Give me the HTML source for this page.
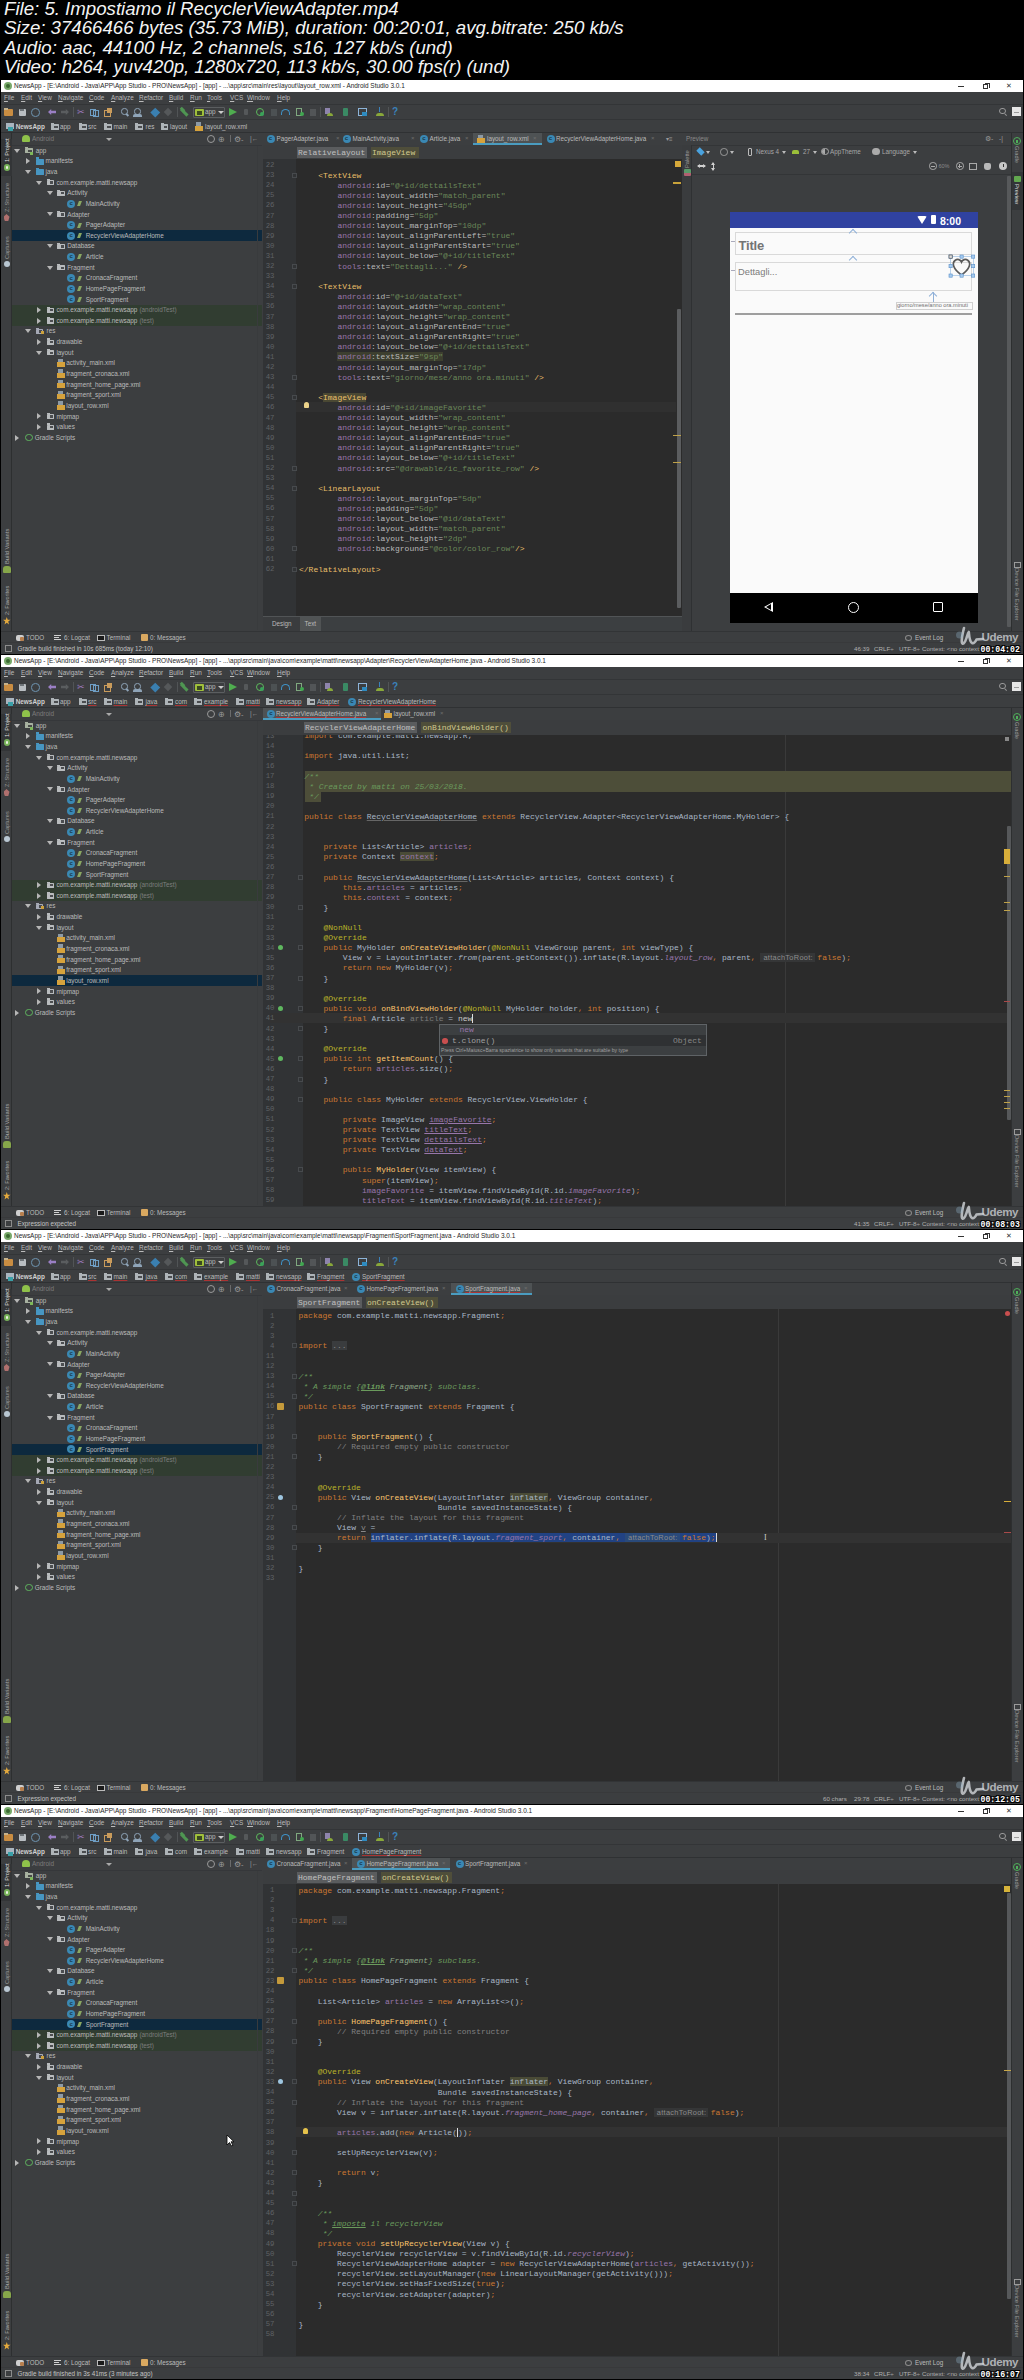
<!DOCTYPE html><html><head><meta charset="utf-8"><style>
*{margin:0;padding:0;box-sizing:border-box}
html,body{width:1024px;height:2380px;background:#000;overflow:hidden}
body{position:relative;font-family:"Liberation Sans",sans-serif}
div{position:absolute}
.u{white-space:pre;font-family:"Liberation Sans",sans-serif}
.m{white-space:pre;font-family:"Liberation Mono",monospace}
.hd{white-space:pre;font-family:"Liberation Sans",sans-serif;font-style:italic;color:#f4f4f4;font-size:18.65px;line-height:20px;left:4px}
.ss{left:0;width:1024px;height:575px;overflow:hidden;background:#000}
k{color:#cc7832}
an{color:#bbb529}
f{color:#9876aa}
g{color:#6a8759}
y{color:#ffc66d}
c{color:#808080}
d{color:#6a9a5c;font-style:italic}
t{color:#e8bf6a}
n{color:#9876aa}
w{color:#bababa}
v{color:#6a8759}
it{font-style:italic;color:#9876aa}
hint{color:#8c8c8c;background:#353637;font-family:"Liberation Sans",sans-serif;font-size:7.4px;letter-spacing:0.3px;padding:0 2px 0 3px;margin-right:2.4px}
</style></head><body>
<div class="hd" style="top:-0.90px">File: 5. Impostiamo il RecyclerViewAdapter.mp4</div>
<div class="hd" style="top:18.45px">Size: 37466466 bytes (35.73 MiB), duration: 00:20:01, avg.bitrate: 250 kb/s</div>
<div class="hd" style="top:37.80px">Audio: aac, 44100 Hz, 2 channels, s16, 127 kb/s (und)</div>
<div class="hd" style="top:57.15px">Video: h264, yuv420p, 1280x720, 113 kb/s, 30.00 fps(r) (und)</div>
<div class="ss" style="top:80px">
<div style="left:1px;top:0px;width:1022px;height:574px;background:#3c3e40;"></div>
<div style="left:1px;top:0px;width:1022px;height:12px;background:#ffffff;"></div>
<div style="left:3.5px;top:1.8px;width:8px;height:8px;background:#79a96b;border-radius:50%"></div>
<div style="left:5.5px;top:3.8px;width:4px;height:4px;background:#3d6b32;border-radius:50%"></div>
<div class="u" style="left:14px;top:2.33px;font-size:6.45px;line-height:7.74px;color:#1e1e1e;">NewsApp - [E:\Android - Java\APP\App Studio - PRO\NewsApp] - [app] - ...\app\src\main\res\layout\layout_row.xml - Android Studio 3.0.1</div>
<div style="left:958px;top:6px;width:6px;height:1px;background:#333;"></div>
<div style="left:983px;top:4px;width:5px;height:5px;background:transparent;border:1px solid #333"></div>
<div style="left:984.5px;top:2.5px;width:5px;height:5px;background:transparent;border-top:1px solid #333;border-right:1px solid #333"></div>
<div class="u" style="left:1006px;top:1.80px;font-size:7px;line-height:8.40px;color:#333;">✕</div>
<div class="u" style="left:4px;top:14.36px;font-size:6.4px;line-height:7.68px;color:#bbbbbb;"><u style="text-decoration-thickness:0.6px;text-underline-offset:1px">F</u>ile</div>
<div class="u" style="left:21px;top:14.36px;font-size:6.4px;line-height:7.68px;color:#bbbbbb;"><u style="text-decoration-thickness:0.6px;text-underline-offset:1px">E</u>dit</div>
<div class="u" style="left:38px;top:14.36px;font-size:6.4px;line-height:7.68px;color:#bbbbbb;"><u style="text-decoration-thickness:0.6px;text-underline-offset:1px">V</u>iew</div>
<div class="u" style="left:58px;top:14.36px;font-size:6.4px;line-height:7.68px;color:#bbbbbb;"><u style="text-decoration-thickness:0.6px;text-underline-offset:1px">N</u>avigate</div>
<div class="u" style="left:89px;top:14.36px;font-size:6.4px;line-height:7.68px;color:#bbbbbb;"><u style="text-decoration-thickness:0.6px;text-underline-offset:1px">C</u>ode</div>
<div class="u" style="left:111px;top:14.36px;font-size:6.4px;line-height:7.68px;color:#bbbbbb;"><u style="text-decoration-thickness:0.6px;text-underline-offset:1px">A</u>nalyze</div>
<div class="u" style="left:139px;top:14.36px;font-size:6.4px;line-height:7.68px;color:#bbbbbb;"><u style="text-decoration-thickness:0.6px;text-underline-offset:1px">R</u>efactor</div>
<div class="u" style="left:169px;top:14.36px;font-size:6.4px;line-height:7.68px;color:#bbbbbb;"><u style="text-decoration-thickness:0.6px;text-underline-offset:1px">B</u>uild</div>
<div class="u" style="left:190px;top:14.36px;font-size:6.4px;line-height:7.68px;color:#bbbbbb;"><u style="text-decoration-thickness:0.6px;text-underline-offset:1px">R</u>un</div>
<div class="u" style="left:207px;top:14.36px;font-size:6.4px;line-height:7.68px;color:#bbbbbb;"><u style="text-decoration-thickness:0.6px;text-underline-offset:1px">T</u>ools</div>
<div class="u" style="left:230px;top:14.36px;font-size:6.4px;line-height:7.68px;color:#bbbbbb;"><u style="text-decoration-thickness:0.6px;text-underline-offset:1px">V</u>CS</div>
<div class="u" style="left:247px;top:14.36px;font-size:6.4px;line-height:7.68px;color:#bbbbbb;"><u style="text-decoration-thickness:0.6px;text-underline-offset:1px">W</u>indow</div>
<div class="u" style="left:277px;top:14.36px;font-size:6.4px;line-height:7.68px;color:#bbbbbb;"><u style="text-decoration-thickness:0.6px;text-underline-offset:1px">H</u>elp</div>
<div style="left:1px;top:24px;width:1022px;height:1px;background:#333537;"></div>
<div style="left:4px;top:29px;width:9px;height:7px;background:#c98d42;border-radius:1px"></div>
<div style="left:4px;top:28px;width:4px;height:2px;background:#c7b38b;"></div>
<div style="left:18.5px;top:28.5px;width:7px;height:7.5px;background:#b9bec2;border-radius:1px"></div>
<div style="left:20px;top:28.5px;width:4px;height:2.5px;background:#6f7579;"></div>
<div style="left:31px;top:28px;width:8.5px;height:8.5px;background:transparent;border:1.6px solid #6e94b0;border-radius:50%"></div>
<div style="left:48px;top:29px;width:8px;height:6px;background:#9a7fc4;clip-path:polygon(0 50%,40% 0,40% 30%,100% 30%,100% 70%,40% 70%,40% 100%)"></div>
<div style="left:61px;top:29px;width:8px;height:6px;background:#5a5d5f;clip-path:polygon(100% 50%,60% 0,60% 30%,0 30%,0 70%,60% 70%,60% 100%)"></div>
<div style="left:73px;top:27px;width:1px;height:10px;background:#515456;"></div>
<div class="u" style="left:77px;top:26.60px;font-size:9px;line-height:10.80px;color:#a07cc0;">✂</div>
<div style="left:90px;top:28.5px;width:6px;height:7.5px;background:transparent;border:1.3px solid #6e9ec5"></div>
<div style="left:92.5px;top:30px;width:6px;height:7px;background:transparent;border:1.3px solid #6e9ec5"></div>
<div style="left:104px;top:29.5px;width:7px;height:7px;background:transparent;border:1.3px solid #c99b5b"></div>
<div style="left:107px;top:28px;width:5px;height:5px;background:#c99b5b;"></div>
<div style="left:121px;top:28px;width:6.5px;height:6.5px;background:transparent;border:1.5px solid #8fa4b8;border-radius:50%"></div>
<div style="left:126px;top:33.5px;width:3px;height:1.5px;background:#8fa4b8;transform:rotate(45deg)"></div>
<div style="left:134px;top:28px;width:6.5px;height:6.5px;background:transparent;border:1.5px solid #8fa4b8;border-radius:50%"></div>
<div style="left:133px;top:34px;width:9px;height:2.5px;background:#8fa4b8;border-radius:2px 2px 0 0"></div>
<div style="left:151.5px;top:28.5px;width:6.5px;height:6.5px;background:#3a7fb0;transform:rotate(45deg)"></div>
<div style="left:165px;top:29px;width:6px;height:6px;background:#55585a;transform:rotate(45deg)"></div>
<div style="left:177px;top:27px;width:1px;height:10px;background:#515456;"></div>
<div style="left:180px;top:31px;width:9px;height:2.5px;background:#4f9552;transform:rotate(45deg)"></div>
<div style="left:180px;top:28px;width:5px;height:3px;background:#4f9552;transform:rotate(45deg)"></div>
<div style="left:192.5px;top:27px;width:32px;height:10.5px;background:transparent;border:1px solid #5b5e60;border-radius:1px"></div>
<div style="left:195px;top:28.5px;width:8.5px;height:7px;background:#9fbf3b;border-radius:1px"></div>
<div style="left:196.5px;top:30.5px;width:5.5px;height:4px;background:#3a4a20;"></div>
<div class="u" style="left:205px;top:28.46px;font-size:6.4px;line-height:7.68px;color:#bbbbbb;">app</div>
<div style="left:218px;top:30.5px;width:0;height:0;border-left:3px solid transparent;border-right:3px solid transparent;border-top:3.5px solid #ccc"></div>
<div style="left:228.5px;top:27.5px;width:0;height:0;border-top:4.5px solid transparent;border-bottom:4.5px solid transparent;border-left:8px solid #4fad4f"></div>
<div style="left:244px;top:29px;width:3.5px;height:6px;background:#55585a;border-radius:1px"></div>
<div style="left:255.5px;top:28px;width:8px;height:8px;background:transparent;border:1.8px solid #5cb85c;border-radius:50%"></div>
<div style="left:259.5px;top:32px;width:4px;height:4px;background:#3aa35a;border-radius:50%"></div>
<div style="left:271px;top:29px;width:6px;height:6.5px;background:#4c5153;"></div>
<div style="left:281px;top:28.5px;width:8.5px;height:6px;background:transparent;border:1.8px solid #3f92c6;border-bottom:none;border-radius:5px 5px 0 0"></div>
<div style="left:296px;top:28px;width:5.5px;height:8px;background:transparent;border:1.2px solid #7fa87f"></div>
<div style="left:299.5px;top:32px;width:4px;height:4px;background:#40a850;border-radius:50%"></div>
<div style="left:309.5px;top:28.5px;width:6.5px;height:7px;background:#525557;"></div>
<div style="left:320px;top:27px;width:1px;height:10px;background:#515456;"></div>
<div style="left:325px;top:27.5px;width:5px;height:6.5px;background:#8e84ad;"></div>
<div style="left:327px;top:32.5px;width:6px;height:3.5px;background:#89a83a;border-radius:3px 3px 0 0"></div>
<div style="left:342.5px;top:27.5px;width:5.5px;height:8px;background:#3a8a64;border-radius:1px"></div>
<div style="left:357.5px;top:28px;width:9px;height:7.5px;background:transparent;border:1.3px solid #8db4d9"></div>
<div style="left:362px;top:32px;width:4.5px;height:4px;background:#2e8bc0;"></div>
<div style="left:378.5px;top:27px;width:1.5px;height:5px;background:#3a82bb;"></div>
<div style="left:375.5px;top:32.5px;width:8px;height:3.5px;background:#89a83a;border-radius:3px 3px 0 0"></div>
<div style="left:388px;top:27px;width:1px;height:10px;background:#515456;"></div>
<div class="u" style="left:392px;top:26.30px;font-size:10px;line-height:12.00px;color:#3a82bb;font-weight:bold">?</div>
<div style="left:999px;top:27.5px;width:6.5px;height:6.5px;background:transparent;border:1.3px solid #9a9a9a;border-radius:50%"></div>
<div style="left:1004px;top:33.5px;width:3px;height:1.3px;background:#9a9a9a;transform:rotate(45deg)"></div>
<div style="left:1012px;top:27px;width:8.5px;height:8.5px;background:#e6e6e6;"></div>
<div style="left:1013.5px;top:31.5px;width:5.5px;height:1px;background:#9a9a9a;"></div>
<div style="left:1px;top:39px;width:1022px;height:1px;background:#333537;"></div>
<div style="left:6px;top:43.2px;width:7.5px;height:6px;background:#a9b5bf;"></div>
<div style="left:7.5px;top:47.2px;width:5px;height:3.5px;background:#3aa0a8;"></div>
<div class="u" style="left:15.7px;top:42.86px;font-size:6.4px;line-height:7.68px;color:#d0d0d0;font-weight:bold">NewsApp</div>
<div style="left:51px;top:44.4px;width:7.5px;height:5.2px;background:#aeb4b8;border-radius:0.5px"></div>
<div style="left:51px;top:43.2px;width:3.0px;height:1.4px;background:#aeb4b8;"></div>
<div style="left:54.15px;top:45.7px;width:3.375px;height:2.3400000000000003px;background:rgba(40,42,44,0.75);"></div>
<div class="u" style="left:60px;top:42.86px;font-size:6.4px;line-height:7.68px;color:#bbbbbb;">app</div>
<div style="left:79px;top:44.4px;width:7.5px;height:5.2px;background:#aeb4b8;border-radius:0.5px"></div>
<div style="left:79px;top:43.2px;width:3.0px;height:1.4px;background:#aeb4b8;"></div>
<div style="left:82.15px;top:45.7px;width:3.375px;height:2.3400000000000003px;background:rgba(40,42,44,0.75);"></div>
<div class="u" style="left:88px;top:42.86px;font-size:6.4px;line-height:7.68px;color:#bbbbbb;">src</div>
<div style="left:104px;top:44.4px;width:7.5px;height:5.2px;background:#aeb4b8;border-radius:0.5px"></div>
<div style="left:104px;top:43.2px;width:3.0px;height:1.4px;background:#aeb4b8;"></div>
<div style="left:107.15px;top:45.7px;width:3.375px;height:2.3400000000000003px;background:rgba(40,42,44,0.75);"></div>
<div class="u" style="left:113.5px;top:42.86px;font-size:6.4px;line-height:7.68px;color:#bbbbbb;">main</div>
<div style="left:135px;top:44.4px;width:7.5px;height:5.2px;background:#aeb4b8;border-radius:0.5px"></div>
<div style="left:135px;top:43.2px;width:3.0px;height:1.4px;background:#aeb4b8;"></div>
<div style="left:138.15px;top:45.7px;width:3.375px;height:2.3400000000000003px;background:rgba(40,42,44,0.75);"></div>
<div class="u" style="left:145.5px;top:42.86px;font-size:6.4px;line-height:7.68px;color:#bbbbbb;">res</div>
<div style="left:160.5px;top:44.4px;width:7.5px;height:5.2px;background:#aeb4b8;border-radius:0.5px"></div>
<div style="left:160.5px;top:43.2px;width:3.0px;height:1.4px;background:#aeb4b8;"></div>
<div style="left:163.65px;top:45.7px;width:3.375px;height:2.3400000000000003px;background:rgba(40,42,44,0.75);"></div>
<div class="u" style="left:170px;top:42.86px;font-size:6.4px;line-height:7.68px;color:#bbbbbb;">layout</div>
<div style="left:196px;top:42.2px;width:5px;height:4px;background:#8d9aa5;"></div>
<div style="left:195px;top:45.7px;width:8px;height:5px;background:#d6a23c;"></div>
<div class="u" style="left:205px;top:42.86px;font-size:6.4px;line-height:7.68px;color:#bbbbbb;">layout_row.xml</div>
<div style="left:1px;top:52px;width:1022px;height:1px;background:#2f3133;"></div>
<div style="left:1px;top:53px;width:11px;height:497.5px;background:#3c3e40;border-right:1px solid #2d2f30"></div>
<div style="left:1px;top:58.7px;width:10.5px;height:37.5px;background:#333537;"></div>
<div class="u" style="left:2px;top:82px;font-size:5.6px;line-height:10px;color:#e0e0e0;transform-origin:0 0;transform:rotate(-90deg)">1: Project</div>
<div style="left:3.5px;top:83.5px;width:6.5px;height:7px;background:#78b35a;border-radius:50%"></div>
<div style="left:5.5px;top:86px;width:2.5px;height:2.5px;background:#e8f0e0;border-radius:50%"></div>
<div class="u" style="left:2px;top:132px;font-size:5.6px;line-height:10px;color:#9a9a9a;transform-origin:0 0;transform:rotate(-90deg)">Z: Structure</div>
<div style="left:3.5px;top:134px;width:6px;height:7px;background:#b0706e;border-radius:1px;clip-path:polygon(50% 0,100% 40%,80% 100%,20% 100%,0 40%)"></div>
<div class="u" style="left:2px;top:179px;font-size:5.6px;line-height:10px;color:#9a9a9a;transform-origin:0 0;transform:rotate(-90deg)">Captures</div>
<div style="left:3.5px;top:180.5px;width:6.5px;height:6.5px;background:#b9c7d2;border-radius:50%"></div>
<div class="u" style="left:2px;top:484px;font-size:5.8px;line-height:10px;color:#a8a8a8;transform-origin:0 0;transform:rotate(-90deg)">Build Variants</div>
<div style="left:3px;top:485.5px;width:7.5px;height:7px;background:#86a64a;border-radius:3px 3px 1px 1px"></div>
<div class="u" style="left:2px;top:535px;font-size:5.6px;line-height:10px;color:#a8a8a8;transform-origin:0 0;transform:rotate(-90deg)">2: Favorites</div>
<div style="left:3px;top:537px;width:7.5px;height:7.5px;background:#e3a93d;clip-path:polygon(50% 0,63% 35%,100% 38%,70% 60%,80% 100%,50% 78%,20% 100%,30% 60%,0 38%,37% 35%)"></div>
<div style="left:12px;top:53px;width:250px;height:12px;background:#3c3e40;"></div>
<div style="left:22px;top:54.5px;width:8px;height:7.5px;background:#8fc24a;border-radius:4px 4px 1px 1px"></div>
<div class="u" style="left:32px;top:55.16px;font-size:6.4px;line-height:7.68px;color:#7c7c7c;">Android</div>
<div style="left:106px;top:57.8px;width:0;height:0;border-left:3px solid transparent;border-right:3px solid transparent;border-top:3.5px solid #aaa"></div>
<div style="left:207px;top:54.5px;width:8px;height:8px;background:transparent;border:1.5px solid #9a9a9a;border-radius:50%"></div>
<div class="u" style="left:218px;top:54.50px;font-size:7.5px;line-height:9.00px;color:#9a9a9a;">⊕</div>
<div style="left:230px;top:55px;width:1px;height:7px;background:#6b6b6b;"></div>
<div class="u" style="left:234px;top:54.50px;font-size:7.5px;line-height:9.00px;color:#9a9a9a;">⚙-</div>
<div class="u" style="left:250px;top:55.10px;font-size:6.5px;line-height:7.80px;color:#9a9a9a;">|←</div>
<div style="left:12px;top:65px;width:250px;height:485.5px;background:#3c3e40;"></div>
<div style="left:12px;top:64.5px;width:250px;height:0.8px;background:#35373a;"></div>
<div style="left:14.4px;top:68.6px;width:0;height:0;border-left:3px solid transparent;border-right:3px solid transparent;border-top:4px solid #b6b6b6"></div>
<div style="left:25.0px;top:68.3px;width:7.5px;height:5.2px;background:#a7b1a0;border-radius:0.5px"></div>
<div style="left:25.0px;top:67.1px;width:3.0px;height:1.4px;background:#a7b1a0;"></div>
<div style="left:28.15px;top:69.6px;width:3.375px;height:2.3400000000000003px;background:rgba(40,42,44,0.75);"></div>
<div style="left:30.0px;top:71.6px;width:3px;height:3px;background:#7fb85a;"></div>
<div class="u" style="left:35.7px;top:66.76px;font-size:6.4px;line-height:7.68px;color:#bbbbbb;">app</div>
<div style="left:25.7px;top:78.2px;width:0;height:0;border-top:3px solid transparent;border-bottom:3px solid transparent;border-left:4px solid #b6b6b6"></div>
<div style="left:35.8px;top:78.52999999999999px;width:8px;height:6px;background:#4796c2;border-radius:0.5px"></div>
<div style="left:35.8px;top:77.32999999999998px;width:3.2px;height:1.4px;background:#4796c2;"></div>
<div class="u" style="left:45.599999999999994px;top:77.39px;font-size:6.4px;line-height:7.68px;color:#bbbbbb;">manifests</div>
<div style="left:25.2px;top:89.9px;width:0;height:0;border-left:3px solid transparent;border-right:3px solid transparent;border-top:4px solid #b6b6b6"></div>
<div style="left:35.8px;top:89.16px;width:8px;height:6px;background:#4796c2;border-radius:0.5px"></div>
<div style="left:35.8px;top:87.96px;width:3.2px;height:1.4px;background:#4796c2;"></div>
<div class="u" style="left:45.599999999999994px;top:88.02px;font-size:6.4px;line-height:7.68px;color:#bbbbbb;">java</div>
<div style="left:36.0px;top:100.5px;width:0;height:0;border-left:3px solid transparent;border-right:3px solid transparent;border-top:4px solid #b6b6b6"></div>
<div style="left:46.6px;top:100.19px;width:7.5px;height:5.2px;background:#b9bcbe;border-radius:0.5px"></div>
<div style="left:46.6px;top:98.99px;width:3.0px;height:1.4px;background:#b9bcbe;"></div>
<div style="left:49.75px;top:101.49px;width:3.375px;height:2.3400000000000003px;background:rgba(40,42,44,0.75);"></div>
<div class="u" style="left:56.400000000000006px;top:98.65px;font-size:6.4px;line-height:7.68px;color:#bbbbbb;">com.example.matti.newsapp</div>
<div style="left:46.8px;top:111.1px;width:0;height:0;border-left:3px solid transparent;border-right:3px solid transparent;border-top:4px solid #b6b6b6"></div>
<div style="left:57.400000000000006px;top:110.82000000000001px;width:7.5px;height:5.2px;background:#b9bcbe;border-radius:0.5px"></div>
<div style="left:57.400000000000006px;top:109.62px;width:3.0px;height:1.4px;background:#b9bcbe;"></div>
<div style="left:60.550000000000004px;top:112.12px;width:3.375px;height:2.3400000000000003px;background:rgba(40,42,44,0.75);"></div>
<div class="u" style="left:67.2px;top:109.28px;font-size:6.4px;line-height:7.68px;color:#bbbbbb;">Activity</div>
<div style="left:67.2px;top:119.75px;width:8px;height:8px;background:#3a88b4;border-radius:50%"></div>
<div class="u" style="left:69.4px;top:120.15px;font-size:6px;line-height:7.20px;color:#1b3a4a;font-weight:bold">c</div>
<div style="left:78.2px;top:121.25px;width:3px;height:5px;background:#8aa862;transform:skewX(-20deg)"></div>
<div class="u" style="left:85.7px;top:119.91px;font-size:6.4px;line-height:7.68px;color:#bbbbbb;">MainActivity</div>
<div style="left:46.8px;top:132.4px;width:0;height:0;border-left:3px solid transparent;border-right:3px solid transparent;border-top:4px solid #b6b6b6"></div>
<div style="left:57.400000000000006px;top:132.08px;width:7.5px;height:5.2px;background:#b9bcbe;border-radius:0.5px"></div>
<div style="left:57.400000000000006px;top:130.88px;width:3.0px;height:1.4px;background:#b9bcbe;"></div>
<div style="left:60.550000000000004px;top:133.38px;width:3.375px;height:2.3400000000000003px;background:rgba(40,42,44,0.75);"></div>
<div class="u" style="left:67.2px;top:130.54px;font-size:6.4px;line-height:7.68px;color:#bbbbbb;">Adapter</div>
<div style="left:67.2px;top:141.01px;width:8px;height:8px;background:#3a88b4;border-radius:50%"></div>
<div class="u" style="left:69.4px;top:141.41px;font-size:6px;line-height:7.20px;color:#1b3a4a;font-weight:bold">c</div>
<div style="left:78.2px;top:142.51px;width:3px;height:5px;background:#8aa862;transform:skewX(-20deg)"></div>
<div class="u" style="left:85.7px;top:141.17px;font-size:6.4px;line-height:7.68px;color:#bbbbbb;">PagerAdapter</div>
<div style="left:12px;top:150.33999999999997px;width:250px;height:10.63px;background:#0d293e;"></div>
<div style="left:67.2px;top:151.64px;width:8px;height:8px;background:#3a88b4;border-radius:50%"></div>
<div class="u" style="left:69.4px;top:152.04px;font-size:6px;line-height:7.20px;color:#1b3a4a;font-weight:bold">c</div>
<div style="left:78.2px;top:153.14px;width:3px;height:5px;background:#8aa862;transform:skewX(-20deg)"></div>
<div class="u" style="left:85.7px;top:151.80px;font-size:6.4px;line-height:7.68px;color:#bbbbbb;">RecyclerViewAdapterHome</div>
<div style="left:46.8px;top:164.3px;width:0;height:0;border-left:3px solid transparent;border-right:3px solid transparent;border-top:4px solid #b6b6b6"></div>
<div style="left:57.400000000000006px;top:163.97px;width:7.5px;height:5.2px;background:#b9bcbe;border-radius:0.5px"></div>
<div style="left:57.400000000000006px;top:162.76999999999998px;width:3.0px;height:1.4px;background:#b9bcbe;"></div>
<div style="left:60.550000000000004px;top:165.26999999999998px;width:3.375px;height:2.3400000000000003px;background:rgba(40,42,44,0.75);"></div>
<div class="u" style="left:67.2px;top:162.43px;font-size:6.4px;line-height:7.68px;color:#bbbbbb;">Database</div>
<div style="left:67.2px;top:172.9px;width:8px;height:8px;background:#3a88b4;border-radius:50%"></div>
<div class="u" style="left:69.4px;top:173.30px;font-size:6px;line-height:7.20px;color:#1b3a4a;font-weight:bold">c</div>
<div style="left:78.2px;top:174.4px;width:3px;height:5px;background:#8aa862;transform:skewX(-20deg)"></div>
<div class="u" style="left:85.7px;top:173.06px;font-size:6.4px;line-height:7.68px;color:#bbbbbb;">Article</div>
<div style="left:46.8px;top:185.5px;width:0;height:0;border-left:3px solid transparent;border-right:3px solid transparent;border-top:4px solid #b6b6b6"></div>
<div style="left:57.400000000000006px;top:185.23000000000002px;width:7.5px;height:5.2px;background:#b9bcbe;border-radius:0.5px"></div>
<div style="left:57.400000000000006px;top:184.03px;width:3.0px;height:1.4px;background:#b9bcbe;"></div>
<div style="left:60.550000000000004px;top:186.53px;width:3.375px;height:2.3400000000000003px;background:rgba(40,42,44,0.75);"></div>
<div class="u" style="left:67.2px;top:183.69px;font-size:6.4px;line-height:7.68px;color:#bbbbbb;">Fragment</div>
<div style="left:67.2px;top:194.16px;width:8px;height:8px;background:#3a88b4;border-radius:50%"></div>
<div class="u" style="left:69.4px;top:194.56px;font-size:6px;line-height:7.20px;color:#1b3a4a;font-weight:bold">c</div>
<div style="left:78.2px;top:195.66px;width:3px;height:5px;background:#8aa862;transform:skewX(-20deg)"></div>
<div class="u" style="left:85.7px;top:194.32px;font-size:6.4px;line-height:7.68px;color:#bbbbbb;">CronacaFragment</div>
<div style="left:67.2px;top:204.79px;width:8px;height:8px;background:#3a88b4;border-radius:50%"></div>
<div class="u" style="left:69.4px;top:205.19px;font-size:6px;line-height:7.20px;color:#1b3a4a;font-weight:bold">c</div>
<div style="left:78.2px;top:206.29px;width:3px;height:5px;background:#8aa862;transform:skewX(-20deg)"></div>
<div class="u" style="left:85.7px;top:204.95px;font-size:6.4px;line-height:7.68px;color:#bbbbbb;">HomePageFragment</div>
<div style="left:67.2px;top:215.42000000000002px;width:8px;height:8px;background:#3a88b4;border-radius:50%"></div>
<div class="u" style="left:69.4px;top:215.82px;font-size:6px;line-height:7.20px;color:#1b3a4a;font-weight:bold">c</div>
<div style="left:78.2px;top:216.92000000000002px;width:3px;height:5px;background:#8aa862;transform:skewX(-20deg)"></div>
<div class="u" style="left:85.7px;top:215.58px;font-size:6.4px;line-height:7.68px;color:#bbbbbb;">SportFragment</div>
<div style="left:12px;top:224.75px;width:250px;height:10.63px;background:#313d31;"></div>
<div style="left:36.5px;top:227.1px;width:0;height:0;border-top:3px solid transparent;border-bottom:3px solid transparent;border-left:4px solid #b6b6b6"></div>
<div style="left:46.6px;top:227.75000000000003px;width:7.5px;height:5.2px;background:#b9bcbe;border-radius:0.5px"></div>
<div style="left:46.6px;top:226.55px;width:3.0px;height:1.4px;background:#b9bcbe;"></div>
<div style="left:49.75px;top:229.05px;width:3.375px;height:2.3400000000000003px;background:rgba(40,42,44,0.75);"></div>
<div class="u" style="left:56.400000000000006px;top:226.21px;font-size:6.4px;line-height:7.68px;color:#bbbbbb;">com.example.matti.newsapp</div>
<div class="u" style="left:139.4px;top:226.21px;font-size:6.4px;line-height:7.68px;color:#7d7d7d;">(androidTest)</div>
<div style="left:12px;top:235.38px;width:250px;height:10.63px;background:#313d31;"></div>
<div style="left:36.5px;top:237.7px;width:0;height:0;border-top:3px solid transparent;border-bottom:3px solid transparent;border-left:4px solid #b6b6b6"></div>
<div style="left:46.6px;top:238.38000000000002px;width:7.5px;height:5.2px;background:#b9bcbe;border-radius:0.5px"></div>
<div style="left:46.6px;top:237.18px;width:3.0px;height:1.4px;background:#b9bcbe;"></div>
<div style="left:49.75px;top:239.68px;width:3.375px;height:2.3400000000000003px;background:rgba(40,42,44,0.75);"></div>
<div class="u" style="left:56.400000000000006px;top:236.84px;font-size:6.4px;line-height:7.68px;color:#bbbbbb;">com.example.matti.newsapp</div>
<div class="u" style="left:139.4px;top:236.84px;font-size:6.4px;line-height:7.68px;color:#7d7d7d;">(test)</div>
<div style="left:25.2px;top:249.3px;width:0;height:0;border-left:3px solid transparent;border-right:3px solid transparent;border-top:4px solid #b6b6b6"></div>
<div style="left:35.8px;top:249.01000000000002px;width:7.5px;height:5.2px;background:#a5a9b5;border-radius:0.5px"></div>
<div style="left:35.8px;top:247.81px;width:3.0px;height:1.4px;background:#a5a9b5;"></div>
<div style="left:38.949999999999996px;top:250.31px;width:3.375px;height:2.3400000000000003px;background:rgba(40,42,44,0.75);"></div>
<div style="left:40.8px;top:251.31px;width:3px;height:3px;background:#cca13c;"></div>
<div class="u" style="left:46.5px;top:247.47px;font-size:6.4px;line-height:7.68px;color:#bbbbbb;">res</div>
<div style="left:36.5px;top:258.9px;width:0;height:0;border-top:3px solid transparent;border-bottom:3px solid transparent;border-left:4px solid #b6b6b6"></div>
<div style="left:46.6px;top:259.64px;width:7.5px;height:5.2px;background:#b9bcbe;border-radius:0.5px"></div>
<div style="left:46.6px;top:258.44px;width:3.0px;height:1.4px;background:#b9bcbe;"></div>
<div style="left:49.75px;top:260.94px;width:3.375px;height:2.3400000000000003px;background:rgba(40,42,44,0.75);"></div>
<div class="u" style="left:56.400000000000006px;top:258.10px;font-size:6.4px;line-height:7.68px;color:#bbbbbb;">drawable</div>
<div style="left:36.0px;top:270.6px;width:0;height:0;border-left:3px solid transparent;border-right:3px solid transparent;border-top:4px solid #b6b6b6"></div>
<div style="left:46.6px;top:270.27000000000004px;width:7.5px;height:5.2px;background:#b9bcbe;border-radius:0.5px"></div>
<div style="left:46.6px;top:269.07000000000005px;width:3.0px;height:1.4px;background:#b9bcbe;"></div>
<div style="left:49.75px;top:271.57000000000005px;width:3.375px;height:2.3400000000000003px;background:rgba(40,42,44,0.75);"></div>
<div class="u" style="left:56.400000000000006px;top:268.73px;font-size:6.4px;line-height:7.68px;color:#bbbbbb;">layout</div>
<div style="left:57.50000000000001px;top:278.70000000000005px;width:5px;height:4px;background:#8d9aa5;"></div>
<div style="left:56.50000000000001px;top:282.20000000000005px;width:8px;height:5px;background:#d6a23c;"></div>
<div class="u" style="left:66.30000000000001px;top:279.36px;font-size:6.4px;line-height:7.68px;color:#bbbbbb;">activity_main.xml</div>
<div style="left:57.50000000000001px;top:289.33000000000004px;width:5px;height:4px;background:#8d9aa5;"></div>
<div style="left:56.50000000000001px;top:292.83000000000004px;width:8px;height:5px;background:#d6a23c;"></div>
<div class="u" style="left:66.30000000000001px;top:289.99px;font-size:6.4px;line-height:7.68px;color:#bbbbbb;">fragment_cronaca.xml</div>
<div style="left:57.50000000000001px;top:299.96000000000004px;width:5px;height:4px;background:#8d9aa5;"></div>
<div style="left:56.50000000000001px;top:303.46000000000004px;width:8px;height:5px;background:#d6a23c;"></div>
<div class="u" style="left:66.30000000000001px;top:300.62px;font-size:6.4px;line-height:7.68px;color:#bbbbbb;">fragment_home_page.xml</div>
<div style="left:57.50000000000001px;top:310.59000000000003px;width:5px;height:4px;background:#8d9aa5;"></div>
<div style="left:56.50000000000001px;top:314.09000000000003px;width:8px;height:5px;background:#d6a23c;"></div>
<div class="u" style="left:66.30000000000001px;top:311.25px;font-size:6.4px;line-height:7.68px;color:#bbbbbb;">fragment_sport.xml</div>
<div style="left:57.50000000000001px;top:321.22px;width:5px;height:4px;background:#8d9aa5;"></div>
<div style="left:56.50000000000001px;top:324.72px;width:8px;height:5px;background:#d6a23c;"></div>
<div class="u" style="left:66.30000000000001px;top:321.88px;font-size:6.4px;line-height:7.68px;color:#bbbbbb;">layout_row.xml</div>
<div style="left:36.5px;top:333.4px;width:0;height:0;border-top:3px solid transparent;border-bottom:3px solid transparent;border-left:4px solid #b6b6b6"></div>
<div style="left:46.6px;top:334.05px;width:7.5px;height:5.2px;background:#b9bcbe;border-radius:0.5px"></div>
<div style="left:46.6px;top:332.85px;width:3.0px;height:1.4px;background:#b9bcbe;"></div>
<div style="left:49.75px;top:335.35px;width:3.375px;height:2.3400000000000003px;background:rgba(40,42,44,0.75);"></div>
<div class="u" style="left:56.400000000000006px;top:332.51px;font-size:6.4px;line-height:7.68px;color:#bbbbbb;">mipmap</div>
<div style="left:36.5px;top:344.0px;width:0;height:0;border-top:3px solid transparent;border-bottom:3px solid transparent;border-left:4px solid #b6b6b6"></div>
<div style="left:46.6px;top:344.68px;width:7.5px;height:5.2px;background:#b9bcbe;border-radius:0.5px"></div>
<div style="left:46.6px;top:343.48px;width:3.0px;height:1.4px;background:#b9bcbe;"></div>
<div style="left:49.75px;top:345.98px;width:3.375px;height:2.3400000000000003px;background:rgba(40,42,44,0.75);"></div>
<div class="u" style="left:56.400000000000006px;top:343.14px;font-size:6.4px;line-height:7.68px;color:#bbbbbb;">values</div>
<div style="left:14.9px;top:354.6px;width:0;height:0;border-top:3px solid transparent;border-bottom:3px solid transparent;border-left:4px solid #b6b6b6"></div>
<div style="left:25.0px;top:353.81px;width:7.6px;height:7.6px;background:transparent;border:1.5px solid #5fb55f;border-radius:50%"></div>
<div class="u" style="left:34.7px;top:353.77px;font-size:6.4px;line-height:7.68px;color:#bbbbbb;">Gradle Scripts</div>
<div style="left:257px;top:66px;width:1px;height:484px;background:#393b3d;"></div>
<div style="left:1px;top:550.5px;width:1022px;height:11.5px;background:#3c3e40;border-top:1px solid #323436"></div>
<div style="left:16px;top:554.5px;width:8px;height:6px;background:#cfcfcf;border-radius:2px"></div>
<div style="left:20px;top:556.5px;width:4px;height:4px;background:#b87f4e;border-radius:1px"></div>
<div class="u" style="left:26px;top:553.72px;font-size:6.3px;line-height:7.56px;color:#bbbbbb;">TODO</div>
<div style="left:54px;top:555.0px;width:7px;height:1.3px;background:#d0d0d0;"></div>
<div style="left:54px;top:557.0px;width:5px;height:1.3px;background:#d0d0d0;"></div>
<div style="left:54px;top:559.0px;width:7px;height:1.3px;background:#d0d0d0;"></div>
<div class="u" style="left:64px;top:553.72px;font-size:6.3px;line-height:7.56px;color:#bbbbbb;">6: Logcat</div>
<div style="left:97px;top:554.5px;width:8px;height:6.5px;background:#1a1a1a;border:1px solid #bbb"></div>
<div class="u" style="left:106.5px;top:553.72px;font-size:6.3px;line-height:7.56px;color:#bbbbbb;">Terminal</div>
<div style="left:140.5px;top:554.0px;width:7px;height:7px;background:#d9a860;border-radius:1px"></div>
<div class="u" style="left:150px;top:553.72px;font-size:6.3px;line-height:7.56px;color:#bbbbbb;">0: Messages</div>
<div style="left:905px;top:554.5px;width:7px;height:6px;background:transparent;border:1px solid #8a8a8a;border-radius:50%"></div>
<div class="u" style="left:915px;top:553.72px;font-size:6.3px;line-height:7.56px;color:#bbbbbb;">Event Log</div>
<div style="left:1px;top:562px;width:1022px;height:12px;background:#3c3e40;border-top:1px solid #38393b"></div>
<div style="left:5px;top:564.9px;width:7px;height:7px;background:transparent;border:1px solid #8b8b8b"></div>
<div class="u" style="left:17.5px;top:564.62px;font-size:6.3px;line-height:7.56px;color:#c4c4c4;">Gradle build finished in 10s 685ms (today 12:10)</div>
<div class="u" style="left:854px;top:564.68px;font-size:6.2px;line-height:7.44px;color:#b0b0b0;">46:39</div>
<div class="u" style="left:874px;top:564.68px;font-size:6.2px;line-height:7.44px;color:#b0b0b0;">CRLF÷</div>
<div class="u" style="left:899px;top:564.68px;font-size:6.2px;line-height:7.44px;color:#b0b0b0;">UTF-8÷</div>
<div class="u" style="left:922px;top:564.68px;font-size:6.2px;line-height:7.44px;color:#b0b0b0;">Context: &lt;no context&gt;</div>
<div style="left:262.5px;top:53px;width:419.5px;height:12px;background:#3c3e40;"></div>
<div style="left:266.5px;top:55px;width:8px;height:8px;background:#3a88b4;border-radius:50%"></div>
<div class="u" style="left:268.7px;top:55.40px;font-size:6px;line-height:7.20px;color:#1b3a4a;font-weight:bold">c</div>
<div class="u" style="left:276.5px;top:55.22px;font-size:6.3px;line-height:7.56px;color:#bbbbbb;">PagerAdapter.java</div>
<div class="u" style="left:336px;top:55.40px;font-size:6px;line-height:7.20px;color:#6f6f6f;">×</div>
<div style="left:342.5px;top:55px;width:8px;height:8px;background:#3a88b4;border-radius:50%"></div>
<div class="u" style="left:344.7px;top:55.40px;font-size:6px;line-height:7.20px;color:#1b3a4a;font-weight:bold">c</div>
<div class="u" style="left:352.5px;top:55.22px;font-size:6.3px;line-height:7.56px;color:#bbbbbb;">MainActivity.java</div>
<div class="u" style="left:411px;top:55.40px;font-size:6px;line-height:7.20px;color:#6f6f6f;">×</div>
<div style="left:420px;top:55px;width:8px;height:8px;background:#3a88b4;border-radius:50%"></div>
<div class="u" style="left:422.2px;top:55.40px;font-size:6px;line-height:7.20px;color:#1b3a4a;font-weight:bold">c</div>
<div class="u" style="left:429.5px;top:55.22px;font-size:6.3px;line-height:7.56px;color:#bbbbbb;">Article.java</div>
<div class="u" style="left:465px;top:55.40px;font-size:6px;line-height:7.20px;color:#6f6f6f;">×</div>
<div style="left:472.5px;top:53px;width:69.5px;height:12px;background:#4e5254;"></div>
<div style="left:472.5px;top:63.4px;width:69.5px;height:1.6px;background:#4a9cc0;"></div>
<div style="left:478px;top:54.5px;width:5px;height:4px;background:#8d9aa5;"></div>
<div style="left:477px;top:58px;width:8px;height:5px;background:#d6a23c;"></div>
<div class="u" style="left:487px;top:55.22px;font-size:6.3px;line-height:7.56px;color:#bbbbbb;">layout_row.xml</div>
<div class="u" style="left:533px;top:55.40px;font-size:6px;line-height:7.20px;color:#6f6f6f;">×</div>
<div style="left:546.5px;top:55px;width:8px;height:8px;background:#3a88b4;border-radius:50%"></div>
<div class="u" style="left:548.7px;top:55.40px;font-size:6px;line-height:7.20px;color:#1b3a4a;font-weight:bold">c</div>
<div class="u" style="left:556px;top:55.22px;font-size:6.3px;line-height:7.56px;color:#bbbbbb;">RecyclerViewAdapterHome.java</div>
<div class="u" style="left:651px;top:55.40px;font-size:6px;line-height:7.20px;color:#6f6f6f;">×</div>
<div class="u" style="left:666px;top:55.22px;font-size:6.3px;line-height:7.56px;color:#9a9a9a;">▾≡</div>
<div style="left:262.5px;top:65px;width:419.5px;height:14px;background:#3b3d3f;"></div>
<div style="left:296.5px;top:67px;width:70.5px;height:11px;background:#5a5c5e;"></div>
<div class="m" style="left:298.0px;top:67.80px;font-size:8px;line-height:9.60px;color:#c0c0c0;">RelativeLayout</div>
<div style="left:370.5px;top:67px;width:48.0px;height:11px;background:#4f4e3a;"></div>
<div class="m" style="left:372.0px;top:67.80px;font-size:8px;line-height:9.60px;color:#d1c98f;">ImageView</div>
<div style="left:262.5px;top:79px;width:33.5px;height:457px;background:#313335;"></div>
<div style="left:296px;top:79px;width:386px;height:457px;background:#2b2b2b;"></div>
<div style="left:296px;top:322.35px;width:380px;height:10.1px;background:#303030;"></div>
<div style="left:0;top:79px;width:682px;height:457px;overflow:hidden">
<div class="m" style="left:252px;width:22.5px;text-align:right;top:1.00px;font-size:7.3px;line-height:10px;color:#5f6265">22</div>
<div class="m" style="left:299px;top:0.50px;font-size:8px;line-height:11px;color:#a9b7c6"></div>
<div class="m" style="left:252px;width:22.5px;text-align:right;top:11.10px;font-size:7.3px;line-height:10px;color:#5f6265">23</div>
<div class="m" style="left:299px;top:10.60px;font-size:8px;line-height:11px;color:#a9b7c6">    <t>&lt;TextView</t></div>
<div class="m" style="left:252px;width:22.5px;text-align:right;top:21.20px;font-size:7.3px;line-height:10px;color:#5f6265">24</div>
<div class="m" style="left:299px;top:20.70px;font-size:8px;line-height:11px;color:#a9b7c6">        <n>android</n><w>:id=</w><v>"@+id/dettailsText"</v></div>
<div class="m" style="left:252px;width:22.5px;text-align:right;top:31.30px;font-size:7.3px;line-height:10px;color:#5f6265">25</div>
<div class="m" style="left:299px;top:30.80px;font-size:8px;line-height:11px;color:#a9b7c6">        <n>android</n><w>:layout_width=</w><v>"match_parent"</v></div>
<div class="m" style="left:252px;width:22.5px;text-align:right;top:41.40px;font-size:7.3px;line-height:10px;color:#5f6265">26</div>
<div class="m" style="left:299px;top:40.90px;font-size:8px;line-height:11px;color:#a9b7c6">        <n>android</n><w>:layout_height=</w><v>"45dp"</v></div>
<div class="m" style="left:252px;width:22.5px;text-align:right;top:51.50px;font-size:7.3px;line-height:10px;color:#5f6265">27</div>
<div class="m" style="left:299px;top:51.00px;font-size:8px;line-height:11px;color:#a9b7c6">        <n>android</n><w>:padding=</w><v>"5dp"</v></div>
<div class="m" style="left:252px;width:22.5px;text-align:right;top:61.60px;font-size:7.3px;line-height:10px;color:#5f6265">28</div>
<div class="m" style="left:299px;top:61.10px;font-size:8px;line-height:11px;color:#a9b7c6">        <n>android</n><w>:layout_marginTop=</w><v>"10dp"</v></div>
<div class="m" style="left:252px;width:22.5px;text-align:right;top:71.70px;font-size:7.3px;line-height:10px;color:#5f6265">29</div>
<div class="m" style="left:299px;top:71.20px;font-size:8px;line-height:11px;color:#a9b7c6">        <n>android</n><w>:layout_alignParentLeft=</w><v>"true"</v></div>
<div class="m" style="left:252px;width:22.5px;text-align:right;top:81.80px;font-size:7.3px;line-height:10px;color:#5f6265">30</div>
<div class="m" style="left:299px;top:81.30px;font-size:8px;line-height:11px;color:#a9b7c6">        <n>android</n><w>:layout_alignParentStart=</w><v>"true"</v></div>
<div class="m" style="left:252px;width:22.5px;text-align:right;top:91.90px;font-size:7.3px;line-height:10px;color:#5f6265">31</div>
<div class="m" style="left:299px;top:91.40px;font-size:8px;line-height:11px;color:#a9b7c6">        <n>android</n><w>:layout_below=</w><v>"@+id/titleText"</v></div>
<div class="m" style="left:252px;width:22.5px;text-align:right;top:102.00px;font-size:7.3px;line-height:10px;color:#5f6265">32</div>
<div class="m" style="left:299px;top:101.50px;font-size:8px;line-height:11px;color:#a9b7c6">        <n>tools</n><w>:text=</w><v>"Dettagli..."</v> <t>/&gt;</t></div>
<div class="m" style="left:252px;width:22.5px;text-align:right;top:112.10px;font-size:7.3px;line-height:10px;color:#5f6265">33</div>
<div class="m" style="left:299px;top:111.60px;font-size:8px;line-height:11px;color:#a9b7c6"></div>
<div class="m" style="left:252px;width:22.5px;text-align:right;top:122.20px;font-size:7.3px;line-height:10px;color:#5f6265">34</div>
<div class="m" style="left:299px;top:121.70px;font-size:8px;line-height:11px;color:#a9b7c6">    <t>&lt;TextView</t></div>
<div class="m" style="left:252px;width:22.5px;text-align:right;top:132.30px;font-size:7.3px;line-height:10px;color:#5f6265">35</div>
<div class="m" style="left:299px;top:131.80px;font-size:8px;line-height:11px;color:#a9b7c6">        <n>android</n><w>:id=</w><v>"@+id/dataText"</v></div>
<div class="m" style="left:252px;width:22.5px;text-align:right;top:142.40px;font-size:7.3px;line-height:10px;color:#5f6265">36</div>
<div class="m" style="left:299px;top:141.90px;font-size:8px;line-height:11px;color:#a9b7c6">        <n>android</n><w>:layout_width=</w><v>"wrap_content"</v></div>
<div class="m" style="left:252px;width:22.5px;text-align:right;top:152.50px;font-size:7.3px;line-height:10px;color:#5f6265">37</div>
<div class="m" style="left:299px;top:152.00px;font-size:8px;line-height:11px;color:#a9b7c6">        <n>android</n><w>:layout_height=</w><v>"wrap_content"</v></div>
<div class="m" style="left:252px;width:22.5px;text-align:right;top:162.60px;font-size:7.3px;line-height:10px;color:#5f6265">38</div>
<div class="m" style="left:299px;top:162.10px;font-size:8px;line-height:11px;color:#a9b7c6">        <n>android</n><w>:layout_alignParentEnd=</w><v>"true"</v></div>
<div class="m" style="left:252px;width:22.5px;text-align:right;top:172.70px;font-size:7.3px;line-height:10px;color:#5f6265">39</div>
<div class="m" style="left:299px;top:172.20px;font-size:8px;line-height:11px;color:#a9b7c6">        <n>android</n><w>:layout_alignParentRight=</w><v>"true"</v></div>
<div class="m" style="left:252px;width:22.5px;text-align:right;top:182.80px;font-size:7.3px;line-height:10px;color:#5f6265">40</div>
<div class="m" style="left:299px;top:182.30px;font-size:8px;line-height:11px;color:#a9b7c6">        <n>android</n><w>:layout_below=</w><v>"@+id/dettailsText"</v></div>
<div class="m" style="left:252px;width:22.5px;text-align:right;top:192.90px;font-size:7.3px;line-height:10px;color:#5f6265">41</div>
<div class="m" style="left:299px;top:192.40px;font-size:8px;line-height:11px;color:#a9b7c6">        <span style="background:#3d3f2f"><n>android</n><w>:textSize=</w><v>"9sp"</v></span></div>
<div class="m" style="left:252px;width:22.5px;text-align:right;top:203.00px;font-size:7.3px;line-height:10px;color:#5f6265">42</div>
<div class="m" style="left:299px;top:202.50px;font-size:8px;line-height:11px;color:#a9b7c6">        <n>android</n><w>:layout_marginTop=</w><v>"17dp"</v></div>
<div class="m" style="left:252px;width:22.5px;text-align:right;top:213.10px;font-size:7.3px;line-height:10px;color:#5f6265">43</div>
<div class="m" style="left:299px;top:212.60px;font-size:8px;line-height:11px;color:#a9b7c6">        <n>tools</n><w>:text=</w><v>"giorno/mese/anno ora.minuti"</v> <t>/&gt;</t></div>
<div class="m" style="left:252px;width:22.5px;text-align:right;top:223.20px;font-size:7.3px;line-height:10px;color:#5f6265">44</div>
<div class="m" style="left:299px;top:222.70px;font-size:8px;line-height:11px;color:#a9b7c6"></div>
<div class="m" style="left:252px;width:22.5px;text-align:right;top:233.30px;font-size:7.3px;line-height:10px;color:#5f6265">45</div>
<div class="m" style="left:299px;top:232.80px;font-size:8px;line-height:11px;color:#a9b7c6">    <t>&lt;<span style="background:#4a4833">ImageView</span></t></div>
<div class="m" style="left:252px;width:22.5px;text-align:right;top:243.40px;font-size:7.3px;line-height:10px;color:#5f6265">46</div>
<div class="m" style="left:299px;top:242.90px;font-size:8px;line-height:11px;color:#a9b7c6">        <n>android</n><w>:id=</w><v>"@+id/imageFavorite"</v></div>
<div class="m" style="left:252px;width:22.5px;text-align:right;top:253.50px;font-size:7.3px;line-height:10px;color:#5f6265">47</div>
<div class="m" style="left:299px;top:253.00px;font-size:8px;line-height:11px;color:#a9b7c6">        <n>android</n><w>:layout_width=</w><v>"wrap_content"</v></div>
<div class="m" style="left:252px;width:22.5px;text-align:right;top:263.60px;font-size:7.3px;line-height:10px;color:#5f6265">48</div>
<div class="m" style="left:299px;top:263.10px;font-size:8px;line-height:11px;color:#a9b7c6">        <n>android</n><w>:layout_height=</w><v>"wrap_content"</v></div>
<div class="m" style="left:252px;width:22.5px;text-align:right;top:273.70px;font-size:7.3px;line-height:10px;color:#5f6265">49</div>
<div class="m" style="left:299px;top:273.20px;font-size:8px;line-height:11px;color:#a9b7c6">        <n>android</n><w>:layout_alignParentEnd=</w><v>"true"</v></div>
<div class="m" style="left:252px;width:22.5px;text-align:right;top:283.80px;font-size:7.3px;line-height:10px;color:#5f6265">50</div>
<div class="m" style="left:299px;top:283.30px;font-size:8px;line-height:11px;color:#a9b7c6">        <n>android</n><w>:layout_alignParentRight=</w><v>"true"</v></div>
<div class="m" style="left:252px;width:22.5px;text-align:right;top:293.90px;font-size:7.3px;line-height:10px;color:#5f6265">51</div>
<div class="m" style="left:299px;top:293.40px;font-size:8px;line-height:11px;color:#a9b7c6">        <n>android</n><w>:layout_below=</w><v>"@+id/titleText"</v></div>
<div class="m" style="left:252px;width:22.5px;text-align:right;top:304.00px;font-size:7.3px;line-height:10px;color:#5f6265">52</div>
<div class="m" style="left:299px;top:303.50px;font-size:8px;line-height:11px;color:#a9b7c6">        <n>android</n><w>:src=</w><v>"@drawable/ic_favorite_row"</v> <t>/&gt;</t></div>
<div class="m" style="left:252px;width:22.5px;text-align:right;top:314.10px;font-size:7.3px;line-height:10px;color:#5f6265">53</div>
<div class="m" style="left:299px;top:313.60px;font-size:8px;line-height:11px;color:#a9b7c6"></div>
<div class="m" style="left:252px;width:22.5px;text-align:right;top:324.20px;font-size:7.3px;line-height:10px;color:#5f6265">54</div>
<div class="m" style="left:299px;top:323.70px;font-size:8px;line-height:11px;color:#a9b7c6">    <t>&lt;LinearLayout</t></div>
<div class="m" style="left:252px;width:22.5px;text-align:right;top:334.30px;font-size:7.3px;line-height:10px;color:#5f6265">55</div>
<div class="m" style="left:299px;top:333.80px;font-size:8px;line-height:11px;color:#a9b7c6">        <n>android</n><w>:layout_marginTop=</w><v>"5dp"</v></div>
<div class="m" style="left:252px;width:22.5px;text-align:right;top:344.40px;font-size:7.3px;line-height:10px;color:#5f6265">56</div>
<div class="m" style="left:299px;top:343.90px;font-size:8px;line-height:11px;color:#a9b7c6">        <n>android</n><w>:padding=</w><v>"5dp"</v></div>
<div class="m" style="left:252px;width:22.5px;text-align:right;top:354.50px;font-size:7.3px;line-height:10px;color:#5f6265">57</div>
<div class="m" style="left:299px;top:354.00px;font-size:8px;line-height:11px;color:#a9b7c6">        <n>android</n><w>:layout_below=</w><v>"@id/dataText"</v></div>
<div class="m" style="left:252px;width:22.5px;text-align:right;top:364.60px;font-size:7.3px;line-height:10px;color:#5f6265">58</div>
<div class="m" style="left:299px;top:364.10px;font-size:8px;line-height:11px;color:#a9b7c6">        <n>android</n><w>:layout_width=</w><v>"match_parent"</v></div>
<div class="m" style="left:252px;width:22.5px;text-align:right;top:374.70px;font-size:7.3px;line-height:10px;color:#5f6265">59</div>
<div class="m" style="left:299px;top:374.20px;font-size:8px;line-height:11px;color:#a9b7c6">        <n>android</n><w>:layout_height=</w><v>"2dp"</v></div>
<div class="m" style="left:252px;width:22.5px;text-align:right;top:384.80px;font-size:7.3px;line-height:10px;color:#5f6265">60</div>
<div class="m" style="left:299px;top:384.30px;font-size:8px;line-height:11px;color:#a9b7c6">        <n>android</n><w>:background=</w><v>"@color/color_row"</v><t>/&gt;</t></div>
<div class="m" style="left:252px;width:22.5px;text-align:right;top:394.90px;font-size:7.3px;line-height:10px;color:#5f6265">61</div>
<div class="m" style="left:299px;top:394.40px;font-size:8px;line-height:11px;color:#a9b7c6"></div>
<div class="m" style="left:252px;width:22.5px;text-align:right;top:405.00px;font-size:7.3px;line-height:10px;color:#5f6265">62</div>
<div class="m" style="left:299px;top:404.50px;font-size:8px;line-height:11px;color:#a9b7c6"><t>&lt;/RelativeLayout&gt;</t></div>
</div>
<div style="left:292px;top:92.6px;width:5px;height:5px;background:transparent;border:1px solid #474a4d"></div>
<div style="left:292px;top:183.5px;width:5px;height:5px;background:transparent;border:1px solid #474a4d"></div>
<div style="left:292px;top:203.7px;width:5px;height:5px;background:transparent;border:1px solid #474a4d"></div>
<div style="left:292px;top:294.6px;width:5px;height:5px;background:transparent;border:1px solid #474a4d"></div>
<div style="left:292px;top:314.79999999999995px;width:5px;height:5px;background:transparent;border:1px solid #474a4d"></div>
<div style="left:292px;top:385.5px;width:5px;height:5px;background:transparent;border:1px solid #474a4d"></div>
<div style="left:292px;top:405.7px;width:5px;height:5px;background:transparent;border:1px solid #474a4d"></div>
<div style="left:292px;top:466.3px;width:5px;height:5px;background:transparent;border:1px solid #474a4d"></div>
<div style="left:292px;top:486.5px;width:5px;height:5px;background:transparent;border:1px solid #474a4d"></div>
<div style="left:303.8px;top:321.5px;width:5.5px;height:6px;background:#ecd38a;border-radius:2.8px 2.8px 1px 1px"></div>
<div style="left:674.5px;top:81px;width:6px;height:6px;background:#d6a93a;"></div>
<div style="left:673px;top:102px;width:8px;height:1.5px;background:#c8a23a;"></div>
<div style="left:676.8px;top:229px;width:4.2px;height:298.5px;background:#5b5d5f;border-radius:1px"></div>
<div style="left:673px;top:355px;width:8px;height:1.2px;background:#bfa24a;"></div>
<div style="left:673px;top:381.5px;width:8px;height:1.2px;background:#bfa24a;"></div>
<div style="left:682px;top:53px;width:329.5px;height:497.5px;background:#3c3e40;"></div>
<div class="u" style="left:686px;top:55.22px;font-size:6.3px;line-height:7.56px;color:#8a8a8a;">Preview</div>
<div class="u" style="left:985px;top:54.80px;font-size:7px;line-height:8.40px;color:#9a9a9a;">⚙-</div>
<div class="u" style="left:999px;top:55.10px;font-size:6.5px;line-height:7.80px;color:#9a9a9a;">-|</div>
<div style="left:682px;top:65px;width:10px;height:485.5px;background:#3a3c3e;border-right:1px solid #2f3133"></div>
<div class="u" style="left:682.5px;top:88px;font-size:5.7px;line-height:9px;color:#9a9a9a;transform-origin:0 0;transform:rotate(-90deg)">Palette</div>
<div style="left:683.5px;top:89px;width:7px;height:3.5px;background:#5a9a6a;border-radius:1px 1px 0 0"></div>
<div style="left:683.5px;top:92.5px;width:7px;height:3.5px;background:#b06070;border-radius:0 0 1px 1px"></div>
<div style="left:697px;top:68.2px;width:7px;height:7px;background:#4aa3df;transform:rotate(45deg) scaleY(0.7)"></div>
<div style="left:706px;top:70.7px;width:0;height:0;border-left:2.5px solid transparent;border-right:2.5px solid transparent;border-top:3.0px solid #bbb"></div>
<div style="left:720px;top:68.2px;width:7.5px;height:7.5px;background:transparent;border:1.3px solid #9a9a9a;border-radius:50%"></div>
<div style="left:730px;top:70.7px;width:0;height:0;border-left:2.5px solid transparent;border-right:2.5px solid transparent;border-top:3.0px solid #bbb"></div>
<div style="left:747.5px;top:67.7px;width:4.5px;height:8px;background:transparent;border:1.2px solid #bbb;border-radius:1px"></div>
<div class="u" style="left:756px;top:67.92px;font-size:6.3px;line-height:7.56px;color:#a8a8a8;">Nexus 4</div>
<div style="left:782px;top:70.7px;width:0;height:0;border-left:2.5px solid transparent;border-right:2.5px solid transparent;border-top:3.0px solid #bbb"></div>
<div style="left:792px;top:69.7px;width:7px;height:4px;background:#9bbf3a;border-radius:2px 2px 0 0"></div>
<div class="u" style="left:803px;top:67.92px;font-size:6.3px;line-height:7.56px;color:#a8a8a8;">27</div>
<div style="left:813px;top:70.7px;width:0;height:0;border-left:2.5px solid transparent;border-right:2.5px solid transparent;border-top:3.0px solid #bbb"></div>
<div style="left:821px;top:67.7px;width:7.5px;height:7.5px;background:transparent;border:1.3px solid #aaa;border-radius:50%"></div>
<div style="left:822px;top:68.7px;width:3px;height:5.5px;background:#aaa;border-radius:3px 0 0 3px"></div>
<div class="u" style="left:830px;top:67.92px;font-size:6.3px;line-height:7.56px;color:#a8a8a8;">AppTheme</div>
<div style="left:872px;top:67.7px;width:7.5px;height:7.5px;background:#aaa;border-radius:50%"></div>
<div class="u" style="left:882px;top:67.92px;font-size:6.3px;line-height:7.56px;color:#a8a8a8;">Language</div>
<div style="left:913px;top:70.7px;width:0;height:0;border-left:2.5px solid transparent;border-right:2.5px solid transparent;border-top:3.0px solid #bbb"></div>
<div style="left:698px;top:85.2px;width:6.5px;height:1.8px;background:#d0d0d0;"></div>
<div style="left:696.5px;top:83.5px;width:0;height:0;border-top:2.5px solid transparent;border-bottom:2.5px solid transparent;border-right:3px solid #d0d0d0"></div>
<div style="left:703px;top:83.5px;width:0;height:0;border-top:2.5px solid transparent;border-bottom:2.5px solid transparent;border-left:3px solid #d0d0d0"></div>
<div style="left:712.6px;top:83px;width:1.8px;height:6.5px;background:#d0d0d0;"></div>
<div style="left:711px;top:81.5px;width:0;height:0;border-left:2.5px solid transparent;border-right:2.5px solid transparent;border-bottom:3px solid #d0d0d0"></div>
<div style="left:711px;top:88px;width:0;height:0;border-left:2.5px solid transparent;border-right:2.5px solid transparent;border-top:3px solid #d0d0d0"></div>
<div style="left:929px;top:82px;width:7.5px;height:7.5px;background:transparent;border:1.2px solid #aaa;border-radius:50%"></div>
<div style="left:931px;top:85.5px;width:3.5px;height:1px;background:#aaa;"></div>
<div class="u" style="left:938.5px;top:82.70px;font-size:5.5px;line-height:6.60px;color:#8a8a8a;">60%</div>
<div style="left:956px;top:82px;width:7.5px;height:7.5px;background:transparent;border:1.2px solid #aaa;border-radius:50%"></div>
<div style="left:958px;top:85.5px;width:3.5px;height:1px;background:#aaa;"></div>
<div style="left:959.2px;top:84.3px;width:1px;height:3.5px;background:#aaa;"></div>
<div style="left:969px;top:82.5px;width:8px;height:7px;background:transparent;border:1.2px solid #aaa"></div>
<div style="left:984px;top:82.5px;width:6.5px;height:7.5px;background:#b9b9b9;border-radius:2px 2px 3px 3px"></div>
<div style="left:999px;top:82px;width:8px;height:8px;background:#c8c8c8;border-radius:50%"></div>
<div style="left:1002.5px;top:83.5px;width:1px;height:3.5px;background:#333;"></div>
<div style="left:692px;top:94px;width:319px;height:1px;background:#333537;"></div>
<div style="left:692px;top:65px;width:319px;height:1px;background:#333537;"></div>
<div style="left:692px;top:95px;width:319px;height:455.5px;background:#3c3e40;"></div>
<div style="left:1006.5px;top:95.5px;width:4px;height:451px;background:#57595b;border-radius:1px"></div>
<div style="left:730px;top:132px;width:247.5px;height:15.5px;background:#3042a0;"></div>
<div style="left:917px;top:136px;width:0;height:0;border-left:5.5px solid transparent;border-right:5.5px solid transparent;border-top:8px solid #fff;border-radius:2px"></div>
<div style="left:931px;top:134.5px;width:5px;height:9.5px;background:#fff;border-radius:1px"></div>
<div class="u" style="left:940px;top:134.70px;font-size:10.5px;line-height:12.60px;color:#ffffff;font-weight:bold">8:00</div>
<div style="left:730px;top:147.5px;width:247.5px;height:365px;background:#fafafa;"></div>
<div style="left:735px;top:152px;width:237px;height:23px;background:transparent;border:1px solid #d9d9d9"></div>
<div class="u" style="left:738.5px;top:158.20px;font-size:13px;line-height:15.60px;color:#747474;font-weight:bold;letter-spacing:-0.2px">Title</div>
<div style="left:735px;top:182px;width:237px;height:29px;background:transparent;border:1px solid #d9d9d9"></div>
<div class="u" style="left:738px;top:186.92px;font-size:9.3px;line-height:11.16px;color:#7c7c7c;">Dettagli...</div>
<svg style="position:absolute;left:948px;top:173.5px" width="28" height="25" viewBox="0 0 28 25"><rect x="2.5" y="2.5" width="23" height="19" fill="none" stroke="#8fb8e0" stroke-width="0.6"/><path d="M13.5 21 C4.5 14.5 4 9 7 6.5 C9.5 4.5 12.5 5.5 13.5 8 C14.5 5.5 17.5 4.5 20 6.5 C23 9 22.5 14.5 13.5 21 Z" fill="none" stroke="#5a5a5a" stroke-width="1.7"/><g fill="#a6cbef" stroke="#5a8fc8" stroke-width="0.6"><rect x="1" y="1" width="3.2" height="3.2"/><rect x="12" y="1" width="3.2" height="3.2"/><rect x="23.5" y="1" width="3.2" height="3.2"/><rect x="1" y="10.5" width="3.2" height="3.2"/><rect x="23.5" y="10.5" width="3.2" height="3.2"/><rect x="1" y="20" width="3.2" height="3.2"/><rect x="12" y="20" width="3.2" height="3.2"/><rect x="23.5" y="20" width="3.2" height="3.2"/></g><rect x="1" y="1" width="3.2" height="3.2" fill="#ddd" stroke="#444" stroke-width="0.6"/></svg>
<div style="left:896px;top:221.5px;width:76.5px;height:8.5px;background:transparent;border:1px solid #d0d0d0"></div>
<div class="u" style="left:897px;top:222.44px;font-size:5.6px;line-height:6.72px;color:#6f6f6f;">giorno/mese/anno ora.minuti</div>
<div style="left:735px;top:232.5px;width:237px;height:2px;background:#9e9e9e;"></div>
<div style="left:850px;top:150px;width:6px;height:6px;border-left:1px solid #8fb0d8;border-top:1px solid #8fb0d8;transform:rotate(45deg)"></div>
<div style="left:850px;top:177px;width:6px;height:6px;border-left:1px solid #8fb0d8;border-top:1px solid #8fb0d8;transform:rotate(45deg)"></div>
<div style="left:930px;top:213px;width:6px;height:6px;border-left:1px solid #8fb0d8;border-top:1px solid #8fb0d8;transform:rotate(45deg)"></div>
<div style="left:932.5px;top:212px;width:1px;height:10px;background:#8fb0d8;"></div>
<div style="left:731px;top:160.5px;width:4px;height:1px;background:#aab;"></div>
<div style="left:731px;top:189.5px;width:4px;height:1px;background:#aab;"></div>
<div style="left:730px;top:512.5px;width:247.5px;height:30px;background:#000;"></div>
<div style="left:764px;top:522px;width:0;height:0;border-top:5.5px solid transparent;border-bottom:5.5px solid transparent;border-right:9px solid #fff"></div>
<div style="left:765.7px;top:524.3px;width:0;height:0;border-top:3.2px solid transparent;border-bottom:3.2px solid transparent;border-right:5.2px solid #000"></div>
<div style="left:847.5px;top:521.5px;width:11px;height:11px;background:transparent;border:1.5px solid #fff;border-radius:50%"></div>
<div style="left:933px;top:522px;width:10px;height:10px;background:transparent;border:1.5px solid #fff;border-radius:1px"></div>
<div style="left:262.5px;top:535.5px;width:419.5px;height:15px;background:#3c3f41;border-top:1px solid #515456"></div>
<div style="left:263px;top:536.5px;width:37px;height:14px;background:#3a3c3e;"></div>
<div class="u" style="left:272px;top:539.72px;font-size:6.3px;line-height:7.56px;color:#bbbbbb;">Design</div>
<div style="left:300px;top:536.5px;width:21px;height:14px;background:#505354;"></div>
<div class="u" style="left:304.5px;top:539.72px;font-size:6.3px;line-height:7.56px;color:#bbbbbb;">Text</div>
<div style="left:1010.5px;top:53px;width:12.5px;height:497.5px;background:#3c3e40;border-left:1px solid #2d2f30"></div>
<div style="left:1013px;top:57px;width:8px;height:8px;background:transparent;border:1.4px solid #4fb05a;border-radius:50%"></div>
<div style="left:1016px;top:59.5px;width:2px;height:3px;background:#4fb05a;"></div>
<div class="u" style="left:1012px;top:66px;font-size:5.7px;line-height:10px;color:#9a9a9a;transform-origin:0 0;transform:translateX(10px) rotate(90deg)">Gradle</div>
<div style="left:1011.5px;top:92px;width:11px;height:38px;background:#333537;"></div>
<div style="left:1013.5px;top:96px;width:7px;height:6px;background:#62a84f;border-radius:1px"></div>
<div class="u" style="left:1012px;top:103.5px;font-size:5.7px;line-height:10px;color:#dddddd;transform-origin:0 0;transform:translateX(10px) rotate(90deg)">Preview</div>
<div style="left:1013.5px;top:482px;width:7px;height:6px;background:transparent;border:1px solid #9a9a9a"></div>
<div class="u" style="left:1012px;top:488px;font-size:5.9px;line-height:10px;color:#9a9a9a;transform-origin:0 0;transform:translateX(10px) rotate(90deg)">Device File Explorer</div>
<svg style="position:absolute;left:955px;top:546px" width="32" height="22" viewBox="0 0 32 22"><path d="M9 2 C8 6 6.5 11 6.8 16 C7.2 19.5 10 17 11.5 12 C12.5 9 13 7 13.8 6 C14.2 10 14.5 15.5 17 17 C19 18 20.5 15.5 21.5 13.5 C23 13 25 13 28 13" fill="none" stroke="#c9ccd0" stroke-width="2.6" stroke-linecap="round" stroke-linejoin="round" opacity="0.85"/><circle cx="4.5" cy="9" r="3.5" fill="#8fb3c9" opacity="0.35"/></svg>
<div class="u" style="left:981.5px;top:549.54px;font-size:11.6px;line-height:13.92px;color:rgba(205,208,212,0.8);font-weight:bold;letter-spacing:-0.4px">Udemy</div>
<div class="m" style="left:980.5px;top:563.5px;font-size:8.2px;line-height:11px;color:#fff;font-weight:bold;text-shadow:0 0 1px #000,1px 1px 0 #000,-1px -1px 0 #000,1px -1px 0 #000,-1px 1px 0 #000">00:04:02</div>
</div>
<div class="ss" style="top:655px">
<div style="left:1px;top:0px;width:1022px;height:574px;background:#3c3e40;"></div>
<div style="left:1px;top:0px;width:1022px;height:12px;background:#ffffff;"></div>
<div style="left:3.5px;top:1.8px;width:8px;height:8px;background:#79a96b;border-radius:50%"></div>
<div style="left:5.5px;top:3.8px;width:4px;height:4px;background:#3d6b32;border-radius:50%"></div>
<div class="u" style="left:14px;top:2.33px;font-size:6.45px;line-height:7.74px;color:#1e1e1e;">NewsApp - [E:\Android - Java\APP\App Studio - PRO\NewsApp] - [app] - ...\app\src\main\java\com\example\matti\newsapp\Adapter\RecyclerViewAdapterHome.java - Android Studio 3.0.1</div>
<div style="left:958px;top:6px;width:6px;height:1px;background:#333;"></div>
<div style="left:983px;top:4px;width:5px;height:5px;background:transparent;border:1px solid #333"></div>
<div style="left:984.5px;top:2.5px;width:5px;height:5px;background:transparent;border-top:1px solid #333;border-right:1px solid #333"></div>
<div class="u" style="left:1006px;top:1.80px;font-size:7px;line-height:8.40px;color:#333;">✕</div>
<div class="u" style="left:4px;top:14.36px;font-size:6.4px;line-height:7.68px;color:#bbbbbb;"><u style="text-decoration-thickness:0.6px;text-underline-offset:1px">F</u>ile</div>
<div class="u" style="left:21px;top:14.36px;font-size:6.4px;line-height:7.68px;color:#bbbbbb;"><u style="text-decoration-thickness:0.6px;text-underline-offset:1px">E</u>dit</div>
<div class="u" style="left:38px;top:14.36px;font-size:6.4px;line-height:7.68px;color:#bbbbbb;"><u style="text-decoration-thickness:0.6px;text-underline-offset:1px">V</u>iew</div>
<div class="u" style="left:58px;top:14.36px;font-size:6.4px;line-height:7.68px;color:#bbbbbb;"><u style="text-decoration-thickness:0.6px;text-underline-offset:1px">N</u>avigate</div>
<div class="u" style="left:89px;top:14.36px;font-size:6.4px;line-height:7.68px;color:#bbbbbb;"><u style="text-decoration-thickness:0.6px;text-underline-offset:1px">C</u>ode</div>
<div class="u" style="left:111px;top:14.36px;font-size:6.4px;line-height:7.68px;color:#bbbbbb;"><u style="text-decoration-thickness:0.6px;text-underline-offset:1px">A</u>nalyze</div>
<div class="u" style="left:139px;top:14.36px;font-size:6.4px;line-height:7.68px;color:#bbbbbb;"><u style="text-decoration-thickness:0.6px;text-underline-offset:1px">R</u>efactor</div>
<div class="u" style="left:169px;top:14.36px;font-size:6.4px;line-height:7.68px;color:#bbbbbb;"><u style="text-decoration-thickness:0.6px;text-underline-offset:1px">B</u>uild</div>
<div class="u" style="left:190px;top:14.36px;font-size:6.4px;line-height:7.68px;color:#bbbbbb;"><u style="text-decoration-thickness:0.6px;text-underline-offset:1px">R</u>un</div>
<div class="u" style="left:207px;top:14.36px;font-size:6.4px;line-height:7.68px;color:#bbbbbb;"><u style="text-decoration-thickness:0.6px;text-underline-offset:1px">T</u>ools</div>
<div class="u" style="left:230px;top:14.36px;font-size:6.4px;line-height:7.68px;color:#bbbbbb;"><u style="text-decoration-thickness:0.6px;text-underline-offset:1px">V</u>CS</div>
<div class="u" style="left:247px;top:14.36px;font-size:6.4px;line-height:7.68px;color:#bbbbbb;"><u style="text-decoration-thickness:0.6px;text-underline-offset:1px">W</u>indow</div>
<div class="u" style="left:277px;top:14.36px;font-size:6.4px;line-height:7.68px;color:#bbbbbb;"><u style="text-decoration-thickness:0.6px;text-underline-offset:1px">H</u>elp</div>
<div style="left:1px;top:24px;width:1022px;height:1px;background:#333537;"></div>
<div style="left:4px;top:29px;width:9px;height:7px;background:#c98d42;border-radius:1px"></div>
<div style="left:4px;top:28px;width:4px;height:2px;background:#c7b38b;"></div>
<div style="left:18.5px;top:28.5px;width:7px;height:7.5px;background:#b9bec2;border-radius:1px"></div>
<div style="left:20px;top:28.5px;width:4px;height:2.5px;background:#6f7579;"></div>
<div style="left:31px;top:28px;width:8.5px;height:8.5px;background:transparent;border:1.6px solid #6e94b0;border-radius:50%"></div>
<div style="left:48px;top:29px;width:8px;height:6px;background:#9a7fc4;clip-path:polygon(0 50%,40% 0,40% 30%,100% 30%,100% 70%,40% 70%,40% 100%)"></div>
<div style="left:61px;top:29px;width:8px;height:6px;background:#5a5d5f;clip-path:polygon(100% 50%,60% 0,60% 30%,0 30%,0 70%,60% 70%,60% 100%)"></div>
<div style="left:73px;top:27px;width:1px;height:10px;background:#515456;"></div>
<div class="u" style="left:77px;top:26.60px;font-size:9px;line-height:10.80px;color:#a07cc0;">✂</div>
<div style="left:90px;top:28.5px;width:6px;height:7.5px;background:transparent;border:1.3px solid #6e9ec5"></div>
<div style="left:92.5px;top:30px;width:6px;height:7px;background:transparent;border:1.3px solid #6e9ec5"></div>
<div style="left:104px;top:29.5px;width:7px;height:7px;background:transparent;border:1.3px solid #c99b5b"></div>
<div style="left:107px;top:28px;width:5px;height:5px;background:#c99b5b;"></div>
<div style="left:121px;top:28px;width:6.5px;height:6.5px;background:transparent;border:1.5px solid #8fa4b8;border-radius:50%"></div>
<div style="left:126px;top:33.5px;width:3px;height:1.5px;background:#8fa4b8;transform:rotate(45deg)"></div>
<div style="left:134px;top:28px;width:6.5px;height:6.5px;background:transparent;border:1.5px solid #8fa4b8;border-radius:50%"></div>
<div style="left:133px;top:34px;width:9px;height:2.5px;background:#8fa4b8;border-radius:2px 2px 0 0"></div>
<div style="left:151.5px;top:28.5px;width:6.5px;height:6.5px;background:#3a7fb0;transform:rotate(45deg)"></div>
<div style="left:165px;top:29px;width:6px;height:6px;background:#55585a;transform:rotate(45deg)"></div>
<div style="left:177px;top:27px;width:1px;height:10px;background:#515456;"></div>
<div style="left:180px;top:31px;width:9px;height:2.5px;background:#4f9552;transform:rotate(45deg)"></div>
<div style="left:180px;top:28px;width:5px;height:3px;background:#4f9552;transform:rotate(45deg)"></div>
<div style="left:192.5px;top:27px;width:32px;height:10.5px;background:transparent;border:1px solid #5b5e60;border-radius:1px"></div>
<div style="left:195px;top:28.5px;width:8.5px;height:7px;background:#9fbf3b;border-radius:1px"></div>
<div style="left:196.5px;top:30.5px;width:5.5px;height:4px;background:#3a4a20;"></div>
<div class="u" style="left:205px;top:28.46px;font-size:6.4px;line-height:7.68px;color:#bbbbbb;">app</div>
<div style="left:218px;top:30.5px;width:0;height:0;border-left:3px solid transparent;border-right:3px solid transparent;border-top:3.5px solid #ccc"></div>
<div style="left:228.5px;top:27.5px;width:0;height:0;border-top:4.5px solid transparent;border-bottom:4.5px solid transparent;border-left:8px solid #4fad4f"></div>
<div style="left:244px;top:29px;width:3.5px;height:6px;background:#55585a;border-radius:1px"></div>
<div style="left:255.5px;top:28px;width:8px;height:8px;background:transparent;border:1.8px solid #5cb85c;border-radius:50%"></div>
<div style="left:259.5px;top:32px;width:4px;height:4px;background:#3aa35a;border-radius:50%"></div>
<div style="left:271px;top:29px;width:6px;height:6.5px;background:#4c5153;"></div>
<div style="left:281px;top:28.5px;width:8.5px;height:6px;background:transparent;border:1.8px solid #3f92c6;border-bottom:none;border-radius:5px 5px 0 0"></div>
<div style="left:296px;top:28px;width:5.5px;height:8px;background:transparent;border:1.2px solid #7fa87f"></div>
<div style="left:299.5px;top:32px;width:4px;height:4px;background:#40a850;border-radius:50%"></div>
<div style="left:309.5px;top:28.5px;width:6.5px;height:7px;background:#525557;"></div>
<div style="left:320px;top:27px;width:1px;height:10px;background:#515456;"></div>
<div style="left:325px;top:27.5px;width:5px;height:6.5px;background:#8e84ad;"></div>
<div style="left:327px;top:32.5px;width:6px;height:3.5px;background:#89a83a;border-radius:3px 3px 0 0"></div>
<div style="left:342.5px;top:27.5px;width:5.5px;height:8px;background:#3a8a64;border-radius:1px"></div>
<div style="left:357.5px;top:28px;width:9px;height:7.5px;background:transparent;border:1.3px solid #8db4d9"></div>
<div style="left:362px;top:32px;width:4.5px;height:4px;background:#2e8bc0;"></div>
<div style="left:378.5px;top:27px;width:1.5px;height:5px;background:#3a82bb;"></div>
<div style="left:375.5px;top:32.5px;width:8px;height:3.5px;background:#89a83a;border-radius:3px 3px 0 0"></div>
<div style="left:388px;top:27px;width:1px;height:10px;background:#515456;"></div>
<div class="u" style="left:392px;top:26.30px;font-size:10px;line-height:12.00px;color:#3a82bb;font-weight:bold">?</div>
<div style="left:999px;top:27.5px;width:6.5px;height:6.5px;background:transparent;border:1.3px solid #9a9a9a;border-radius:50%"></div>
<div style="left:1004px;top:33.5px;width:3px;height:1.3px;background:#9a9a9a;transform:rotate(45deg)"></div>
<div style="left:1012px;top:27px;width:8.5px;height:8.5px;background:#e6e6e6;"></div>
<div style="left:1013.5px;top:31.5px;width:5.5px;height:1px;background:#9a9a9a;"></div>
<div style="left:1px;top:39px;width:1022px;height:1px;background:#333537;"></div>
<div style="left:6px;top:43.2px;width:7.5px;height:6px;background:#a9b5bf;"></div>
<div style="left:7.5px;top:47.2px;width:5px;height:3.5px;background:#3aa0a8;"></div>
<div class="u" style="left:15.7px;top:42.86px;font-size:6.4px;line-height:7.68px;color:#d0d0d0;font-weight:bold">NewsApp</div>
<div style="left:51px;top:44.4px;width:7.5px;height:5.2px;background:#aeb4b8;border-radius:0.5px"></div>
<div style="left:51px;top:43.2px;width:3.0px;height:1.4px;background:#aeb4b8;"></div>
<div style="left:54.15px;top:45.7px;width:3.375px;height:2.3400000000000003px;background:rgba(40,42,44,0.75);"></div>
<div class="u" style="left:60px;top:42.86px;font-size:6.4px;line-height:7.68px;color:#bbbbbb;">app</div>
<div style="left:79px;top:44.4px;width:7.5px;height:5.2px;background:#aeb4b8;border-radius:0.5px"></div>
<div style="left:79px;top:43.2px;width:3.0px;height:1.4px;background:#aeb4b8;"></div>
<div style="left:82.15px;top:45.7px;width:3.375px;height:2.3400000000000003px;background:rgba(40,42,44,0.75);"></div>
<div class="u" style="left:88px;top:42.86px;font-size:6.4px;line-height:7.68px;color:#bbbbbb;text-decoration:underline;text-decoration-color:#a33">src</div>
<div style="left:104px;top:44.4px;width:7.5px;height:5.2px;background:#aeb4b8;border-radius:0.5px"></div>
<div style="left:104px;top:43.2px;width:3.0px;height:1.4px;background:#aeb4b8;"></div>
<div style="left:107.15px;top:45.7px;width:3.375px;height:2.3400000000000003px;background:rgba(40,42,44,0.75);"></div>
<div class="u" style="left:113.5px;top:42.86px;font-size:6.4px;line-height:7.68px;color:#bbbbbb;text-decoration:underline;text-decoration-color:#a33">main</div>
<div style="left:135px;top:44.4px;width:7.5px;height:5.2px;background:#aeb4b8;border-radius:0.5px"></div>
<div style="left:135px;top:43.2px;width:3.0px;height:1.4px;background:#aeb4b8;"></div>
<div style="left:138.15px;top:45.7px;width:3.375px;height:2.3400000000000003px;background:rgba(40,42,44,0.75);"></div>
<div class="u" style="left:145.5px;top:42.86px;font-size:6.4px;line-height:7.68px;color:#bbbbbb;text-decoration:underline;text-decoration-color:#a33">java</div>
<div style="left:165px;top:44.4px;width:7.5px;height:5.2px;background:#aeb4b8;border-radius:0.5px"></div>
<div style="left:165px;top:43.2px;width:3.0px;height:1.4px;background:#aeb4b8;"></div>
<div style="left:168.15px;top:45.7px;width:3.375px;height:2.3400000000000003px;background:rgba(40,42,44,0.75);"></div>
<div class="u" style="left:175px;top:42.86px;font-size:6.4px;line-height:7.68px;color:#bbbbbb;text-decoration:underline;text-decoration-color:#a33">com</div>
<div style="left:194px;top:44.4px;width:7.5px;height:5.2px;background:#aeb4b8;border-radius:0.5px"></div>
<div style="left:194px;top:43.2px;width:3.0px;height:1.4px;background:#aeb4b8;"></div>
<div style="left:197.15px;top:45.7px;width:3.375px;height:2.3400000000000003px;background:rgba(40,42,44,0.75);"></div>
<div class="u" style="left:204px;top:42.86px;font-size:6.4px;line-height:7.68px;color:#bbbbbb;text-decoration:underline;text-decoration-color:#a33">example</div>
<div style="left:236px;top:44.4px;width:7.5px;height:5.2px;background:#aeb4b8;border-radius:0.5px"></div>
<div style="left:236px;top:43.2px;width:3.0px;height:1.4px;background:#aeb4b8;"></div>
<div style="left:239.15px;top:45.7px;width:3.375px;height:2.3400000000000003px;background:rgba(40,42,44,0.75);"></div>
<div class="u" style="left:246px;top:42.86px;font-size:6.4px;line-height:7.68px;color:#bbbbbb;text-decoration:underline;text-decoration-color:#a33">matti</div>
<div style="left:266px;top:44.4px;width:7.5px;height:5.2px;background:#aeb4b8;border-radius:0.5px"></div>
<div style="left:266px;top:43.2px;width:3.0px;height:1.4px;background:#aeb4b8;"></div>
<div style="left:269.15px;top:45.7px;width:3.375px;height:2.3400000000000003px;background:rgba(40,42,44,0.75);"></div>
<div class="u" style="left:276px;top:42.86px;font-size:6.4px;line-height:7.68px;color:#bbbbbb;text-decoration:underline;text-decoration-color:#a33">newsapp</div>
<div style="left:307px;top:44.4px;width:7.5px;height:5.2px;background:#aeb4b8;border-radius:0.5px"></div>
<div style="left:307px;top:43.2px;width:3.0px;height:1.4px;background:#aeb4b8;"></div>
<div style="left:310.15px;top:45.7px;width:3.375px;height:2.3400000000000003px;background:rgba(40,42,44,0.75);"></div>
<div class="u" style="left:317px;top:42.86px;font-size:6.4px;line-height:7.68px;color:#bbbbbb;text-decoration:underline;text-decoration-color:#a33">Adapter</div>
<div style="left:348px;top:42.7px;width:8px;height:8px;background:#3a88b4;border-radius:50%"></div>
<div class="u" style="left:350.2px;top:43.10px;font-size:6px;line-height:7.20px;color:#1b3a4a;font-weight:bold">c</div>
<div class="u" style="left:358px;top:42.86px;font-size:6.4px;line-height:7.68px;color:#bbbbbb;text-decoration:underline;text-decoration-color:#a33">RecyclerViewAdapterHome</div>
<div style="left:1px;top:52px;width:1022px;height:1px;background:#2f3133;"></div>
<div style="left:1px;top:53px;width:11px;height:497.5px;background:#3c3e40;border-right:1px solid #2d2f30"></div>
<div style="left:1px;top:58.7px;width:10.5px;height:37.5px;background:#333537;"></div>
<div class="u" style="left:2px;top:82px;font-size:5.6px;line-height:10px;color:#e0e0e0;transform-origin:0 0;transform:rotate(-90deg)">1: Project</div>
<div style="left:3.5px;top:83.5px;width:6.5px;height:7px;background:#78b35a;border-radius:50%"></div>
<div style="left:5.5px;top:86px;width:2.5px;height:2.5px;background:#e8f0e0;border-radius:50%"></div>
<div class="u" style="left:2px;top:132px;font-size:5.6px;line-height:10px;color:#9a9a9a;transform-origin:0 0;transform:rotate(-90deg)">Z: Structure</div>
<div style="left:3.5px;top:134px;width:6px;height:7px;background:#b0706e;border-radius:1px;clip-path:polygon(50% 0,100% 40%,80% 100%,20% 100%,0 40%)"></div>
<div class="u" style="left:2px;top:179px;font-size:5.6px;line-height:10px;color:#9a9a9a;transform-origin:0 0;transform:rotate(-90deg)">Captures</div>
<div style="left:3.5px;top:180.5px;width:6.5px;height:6.5px;background:#b9c7d2;border-radius:50%"></div>
<div class="u" style="left:2px;top:484px;font-size:5.8px;line-height:10px;color:#a8a8a8;transform-origin:0 0;transform:rotate(-90deg)">Build Variants</div>
<div style="left:3px;top:485.5px;width:7.5px;height:7px;background:#86a64a;border-radius:3px 3px 1px 1px"></div>
<div class="u" style="left:2px;top:535px;font-size:5.6px;line-height:10px;color:#a8a8a8;transform-origin:0 0;transform:rotate(-90deg)">2: Favorites</div>
<div style="left:3px;top:537px;width:7.5px;height:7.5px;background:#e3a93d;clip-path:polygon(50% 0,63% 35%,100% 38%,70% 60%,80% 100%,50% 78%,20% 100%,30% 60%,0 38%,37% 35%)"></div>
<div style="left:12px;top:53px;width:250px;height:12px;background:#3c3e40;"></div>
<div style="left:22px;top:54.5px;width:8px;height:7.5px;background:#8fc24a;border-radius:4px 4px 1px 1px"></div>
<div class="u" style="left:32px;top:55.16px;font-size:6.4px;line-height:7.68px;color:#7c7c7c;">Android</div>
<div style="left:106px;top:57.8px;width:0;height:0;border-left:3px solid transparent;border-right:3px solid transparent;border-top:3.5px solid #aaa"></div>
<div style="left:207px;top:54.5px;width:8px;height:8px;background:transparent;border:1.5px solid #9a9a9a;border-radius:50%"></div>
<div class="u" style="left:218px;top:54.50px;font-size:7.5px;line-height:9.00px;color:#9a9a9a;">⊕</div>
<div style="left:230px;top:55px;width:1px;height:7px;background:#6b6b6b;"></div>
<div class="u" style="left:234px;top:54.50px;font-size:7.5px;line-height:9.00px;color:#9a9a9a;">⚙-</div>
<div class="u" style="left:250px;top:55.10px;font-size:6.5px;line-height:7.80px;color:#9a9a9a;">|←</div>
<div style="left:12px;top:65px;width:250px;height:485.5px;background:#3c3e40;"></div>
<div style="left:12px;top:64.5px;width:250px;height:0.8px;background:#35373a;"></div>
<div style="left:14.4px;top:68.6px;width:0;height:0;border-left:3px solid transparent;border-right:3px solid transparent;border-top:4px solid #b6b6b6"></div>
<div style="left:25.0px;top:68.3px;width:7.5px;height:5.2px;background:#a7b1a0;border-radius:0.5px"></div>
<div style="left:25.0px;top:67.1px;width:3.0px;height:1.4px;background:#a7b1a0;"></div>
<div style="left:28.15px;top:69.6px;width:3.375px;height:2.3400000000000003px;background:rgba(40,42,44,0.75);"></div>
<div style="left:30.0px;top:71.6px;width:3px;height:3px;background:#7fb85a;"></div>
<div class="u" style="left:35.7px;top:66.76px;font-size:6.4px;line-height:7.68px;color:#bbbbbb;">app</div>
<div style="left:25.7px;top:78.2px;width:0;height:0;border-top:3px solid transparent;border-bottom:3px solid transparent;border-left:4px solid #b6b6b6"></div>
<div style="left:35.8px;top:78.52999999999999px;width:8px;height:6px;background:#4796c2;border-radius:0.5px"></div>
<div style="left:35.8px;top:77.32999999999998px;width:3.2px;height:1.4px;background:#4796c2;"></div>
<div class="u" style="left:45.599999999999994px;top:77.39px;font-size:6.4px;line-height:7.68px;color:#bbbbbb;">manifests</div>
<div style="left:25.2px;top:89.9px;width:0;height:0;border-left:3px solid transparent;border-right:3px solid transparent;border-top:4px solid #b6b6b6"></div>
<div style="left:35.8px;top:89.16px;width:8px;height:6px;background:#4796c2;border-radius:0.5px"></div>
<div style="left:35.8px;top:87.96px;width:3.2px;height:1.4px;background:#4796c2;"></div>
<div class="u" style="left:45.599999999999994px;top:88.02px;font-size:6.4px;line-height:7.68px;color:#bbbbbb;">java</div>
<div style="left:36.0px;top:100.5px;width:0;height:0;border-left:3px solid transparent;border-right:3px solid transparent;border-top:4px solid #b6b6b6"></div>
<div style="left:46.6px;top:100.19px;width:7.5px;height:5.2px;background:#b9bcbe;border-radius:0.5px"></div>
<div style="left:46.6px;top:98.99px;width:3.0px;height:1.4px;background:#b9bcbe;"></div>
<div style="left:49.75px;top:101.49px;width:3.375px;height:2.3400000000000003px;background:rgba(40,42,44,0.75);"></div>
<div class="u" style="left:56.400000000000006px;top:98.65px;font-size:6.4px;line-height:7.68px;color:#bbbbbb;">com.example.matti.newsapp</div>
<div style="left:46.8px;top:111.1px;width:0;height:0;border-left:3px solid transparent;border-right:3px solid transparent;border-top:4px solid #b6b6b6"></div>
<div style="left:57.400000000000006px;top:110.82000000000001px;width:7.5px;height:5.2px;background:#b9bcbe;border-radius:0.5px"></div>
<div style="left:57.400000000000006px;top:109.62px;width:3.0px;height:1.4px;background:#b9bcbe;"></div>
<div style="left:60.550000000000004px;top:112.12px;width:3.375px;height:2.3400000000000003px;background:rgba(40,42,44,0.75);"></div>
<div class="u" style="left:67.2px;top:109.28px;font-size:6.4px;line-height:7.68px;color:#bbbbbb;">Activity</div>
<div style="left:67.2px;top:119.75px;width:8px;height:8px;background:#3a88b4;border-radius:50%"></div>
<div class="u" style="left:69.4px;top:120.15px;font-size:6px;line-height:7.20px;color:#1b3a4a;font-weight:bold">c</div>
<div style="left:78.2px;top:121.25px;width:3px;height:5px;background:#8aa862;transform:skewX(-20deg)"></div>
<div class="u" style="left:85.7px;top:119.91px;font-size:6.4px;line-height:7.68px;color:#bbbbbb;">MainActivity</div>
<div style="left:46.8px;top:132.4px;width:0;height:0;border-left:3px solid transparent;border-right:3px solid transparent;border-top:4px solid #b6b6b6"></div>
<div style="left:57.400000000000006px;top:132.08px;width:7.5px;height:5.2px;background:#b9bcbe;border-radius:0.5px"></div>
<div style="left:57.400000000000006px;top:130.88px;width:3.0px;height:1.4px;background:#b9bcbe;"></div>
<div style="left:60.550000000000004px;top:133.38px;width:3.375px;height:2.3400000000000003px;background:rgba(40,42,44,0.75);"></div>
<div class="u" style="left:67.2px;top:130.54px;font-size:6.4px;line-height:7.68px;color:#bbbbbb;">Adapter</div>
<div style="left:67.2px;top:141.01px;width:8px;height:8px;background:#3a88b4;border-radius:50%"></div>
<div class="u" style="left:69.4px;top:141.41px;font-size:6px;line-height:7.20px;color:#1b3a4a;font-weight:bold">c</div>
<div style="left:78.2px;top:142.51px;width:3px;height:5px;background:#8aa862;transform:skewX(-20deg)"></div>
<div class="u" style="left:85.7px;top:141.17px;font-size:6.4px;line-height:7.68px;color:#bbbbbb;">PagerAdapter</div>
<div style="left:67.2px;top:151.64px;width:8px;height:8px;background:#3a88b4;border-radius:50%"></div>
<div class="u" style="left:69.4px;top:152.04px;font-size:6px;line-height:7.20px;color:#1b3a4a;font-weight:bold">c</div>
<div style="left:78.2px;top:153.14px;width:3px;height:5px;background:#8aa862;transform:skewX(-20deg)"></div>
<div class="u" style="left:85.7px;top:151.80px;font-size:6.4px;line-height:7.68px;color:#bbbbbb;">RecyclerViewAdapterHome</div>
<div style="left:46.8px;top:164.3px;width:0;height:0;border-left:3px solid transparent;border-right:3px solid transparent;border-top:4px solid #b6b6b6"></div>
<div style="left:57.400000000000006px;top:163.97px;width:7.5px;height:5.2px;background:#b9bcbe;border-radius:0.5px"></div>
<div style="left:57.400000000000006px;top:162.76999999999998px;width:3.0px;height:1.4px;background:#b9bcbe;"></div>
<div style="left:60.550000000000004px;top:165.26999999999998px;width:3.375px;height:2.3400000000000003px;background:rgba(40,42,44,0.75);"></div>
<div class="u" style="left:67.2px;top:162.43px;font-size:6.4px;line-height:7.68px;color:#bbbbbb;">Database</div>
<div style="left:67.2px;top:172.9px;width:8px;height:8px;background:#3a88b4;border-radius:50%"></div>
<div class="u" style="left:69.4px;top:173.30px;font-size:6px;line-height:7.20px;color:#1b3a4a;font-weight:bold">c</div>
<div style="left:78.2px;top:174.4px;width:3px;height:5px;background:#8aa862;transform:skewX(-20deg)"></div>
<div class="u" style="left:85.7px;top:173.06px;font-size:6.4px;line-height:7.68px;color:#bbbbbb;">Article</div>
<div style="left:46.8px;top:185.5px;width:0;height:0;border-left:3px solid transparent;border-right:3px solid transparent;border-top:4px solid #b6b6b6"></div>
<div style="left:57.400000000000006px;top:185.23000000000002px;width:7.5px;height:5.2px;background:#b9bcbe;border-radius:0.5px"></div>
<div style="left:57.400000000000006px;top:184.03px;width:3.0px;height:1.4px;background:#b9bcbe;"></div>
<div style="left:60.550000000000004px;top:186.53px;width:3.375px;height:2.3400000000000003px;background:rgba(40,42,44,0.75);"></div>
<div class="u" style="left:67.2px;top:183.69px;font-size:6.4px;line-height:7.68px;color:#bbbbbb;">Fragment</div>
<div style="left:67.2px;top:194.16px;width:8px;height:8px;background:#3a88b4;border-radius:50%"></div>
<div class="u" style="left:69.4px;top:194.56px;font-size:6px;line-height:7.20px;color:#1b3a4a;font-weight:bold">c</div>
<div style="left:78.2px;top:195.66px;width:3px;height:5px;background:#8aa862;transform:skewX(-20deg)"></div>
<div class="u" style="left:85.7px;top:194.32px;font-size:6.4px;line-height:7.68px;color:#bbbbbb;">CronacaFragment</div>
<div style="left:67.2px;top:204.79px;width:8px;height:8px;background:#3a88b4;border-radius:50%"></div>
<div class="u" style="left:69.4px;top:205.19px;font-size:6px;line-height:7.20px;color:#1b3a4a;font-weight:bold">c</div>
<div style="left:78.2px;top:206.29px;width:3px;height:5px;background:#8aa862;transform:skewX(-20deg)"></div>
<div class="u" style="left:85.7px;top:204.95px;font-size:6.4px;line-height:7.68px;color:#bbbbbb;">HomePageFragment</div>
<div style="left:67.2px;top:215.42000000000002px;width:8px;height:8px;background:#3a88b4;border-radius:50%"></div>
<div class="u" style="left:69.4px;top:215.82px;font-size:6px;line-height:7.20px;color:#1b3a4a;font-weight:bold">c</div>
<div style="left:78.2px;top:216.92000000000002px;width:3px;height:5px;background:#8aa862;transform:skewX(-20deg)"></div>
<div class="u" style="left:85.7px;top:215.58px;font-size:6.4px;line-height:7.68px;color:#bbbbbb;">SportFragment</div>
<div style="left:12px;top:224.75px;width:250px;height:10.63px;background:#313d31;"></div>
<div style="left:36.5px;top:227.1px;width:0;height:0;border-top:3px solid transparent;border-bottom:3px solid transparent;border-left:4px solid #b6b6b6"></div>
<div style="left:46.6px;top:227.75000000000003px;width:7.5px;height:5.2px;background:#b9bcbe;border-radius:0.5px"></div>
<div style="left:46.6px;top:226.55px;width:3.0px;height:1.4px;background:#b9bcbe;"></div>
<div style="left:49.75px;top:229.05px;width:3.375px;height:2.3400000000000003px;background:rgba(40,42,44,0.75);"></div>
<div class="u" style="left:56.400000000000006px;top:226.21px;font-size:6.4px;line-height:7.68px;color:#bbbbbb;">com.example.matti.newsapp</div>
<div class="u" style="left:139.4px;top:226.21px;font-size:6.4px;line-height:7.68px;color:#7d7d7d;">(androidTest)</div>
<div style="left:12px;top:235.38px;width:250px;height:10.63px;background:#313d31;"></div>
<div style="left:36.5px;top:237.7px;width:0;height:0;border-top:3px solid transparent;border-bottom:3px solid transparent;border-left:4px solid #b6b6b6"></div>
<div style="left:46.6px;top:238.38000000000002px;width:7.5px;height:5.2px;background:#b9bcbe;border-radius:0.5px"></div>
<div style="left:46.6px;top:237.18px;width:3.0px;height:1.4px;background:#b9bcbe;"></div>
<div style="left:49.75px;top:239.68px;width:3.375px;height:2.3400000000000003px;background:rgba(40,42,44,0.75);"></div>
<div class="u" style="left:56.400000000000006px;top:236.84px;font-size:6.4px;line-height:7.68px;color:#bbbbbb;">com.example.matti.newsapp</div>
<div class="u" style="left:139.4px;top:236.84px;font-size:6.4px;line-height:7.68px;color:#7d7d7d;">(test)</div>
<div style="left:25.2px;top:249.3px;width:0;height:0;border-left:3px solid transparent;border-right:3px solid transparent;border-top:4px solid #b6b6b6"></div>
<div style="left:35.8px;top:249.01000000000002px;width:7.5px;height:5.2px;background:#a5a9b5;border-radius:0.5px"></div>
<div style="left:35.8px;top:247.81px;width:3.0px;height:1.4px;background:#a5a9b5;"></div>
<div style="left:38.949999999999996px;top:250.31px;width:3.375px;height:2.3400000000000003px;background:rgba(40,42,44,0.75);"></div>
<div style="left:40.8px;top:251.31px;width:3px;height:3px;background:#cca13c;"></div>
<div class="u" style="left:46.5px;top:247.47px;font-size:6.4px;line-height:7.68px;color:#bbbbbb;">res</div>
<div style="left:36.5px;top:258.9px;width:0;height:0;border-top:3px solid transparent;border-bottom:3px solid transparent;border-left:4px solid #b6b6b6"></div>
<div style="left:46.6px;top:259.64px;width:7.5px;height:5.2px;background:#b9bcbe;border-radius:0.5px"></div>
<div style="left:46.6px;top:258.44px;width:3.0px;height:1.4px;background:#b9bcbe;"></div>
<div style="left:49.75px;top:260.94px;width:3.375px;height:2.3400000000000003px;background:rgba(40,42,44,0.75);"></div>
<div class="u" style="left:56.400000000000006px;top:258.10px;font-size:6.4px;line-height:7.68px;color:#bbbbbb;">drawable</div>
<div style="left:36.0px;top:270.6px;width:0;height:0;border-left:3px solid transparent;border-right:3px solid transparent;border-top:4px solid #b6b6b6"></div>
<div style="left:46.6px;top:270.27000000000004px;width:7.5px;height:5.2px;background:#b9bcbe;border-radius:0.5px"></div>
<div style="left:46.6px;top:269.07000000000005px;width:3.0px;height:1.4px;background:#b9bcbe;"></div>
<div style="left:49.75px;top:271.57000000000005px;width:3.375px;height:2.3400000000000003px;background:rgba(40,42,44,0.75);"></div>
<div class="u" style="left:56.400000000000006px;top:268.73px;font-size:6.4px;line-height:7.68px;color:#bbbbbb;">layout</div>
<div style="left:57.50000000000001px;top:278.70000000000005px;width:5px;height:4px;background:#8d9aa5;"></div>
<div style="left:56.50000000000001px;top:282.20000000000005px;width:8px;height:5px;background:#d6a23c;"></div>
<div class="u" style="left:66.30000000000001px;top:279.36px;font-size:6.4px;line-height:7.68px;color:#bbbbbb;">activity_main.xml</div>
<div style="left:57.50000000000001px;top:289.33000000000004px;width:5px;height:4px;background:#8d9aa5;"></div>
<div style="left:56.50000000000001px;top:292.83000000000004px;width:8px;height:5px;background:#d6a23c;"></div>
<div class="u" style="left:66.30000000000001px;top:289.99px;font-size:6.4px;line-height:7.68px;color:#bbbbbb;">fragment_cronaca.xml</div>
<div style="left:57.50000000000001px;top:299.96000000000004px;width:5px;height:4px;background:#8d9aa5;"></div>
<div style="left:56.50000000000001px;top:303.46000000000004px;width:8px;height:5px;background:#d6a23c;"></div>
<div class="u" style="left:66.30000000000001px;top:300.62px;font-size:6.4px;line-height:7.68px;color:#bbbbbb;">fragment_home_page.xml</div>
<div style="left:57.50000000000001px;top:310.59000000000003px;width:5px;height:4px;background:#8d9aa5;"></div>
<div style="left:56.50000000000001px;top:314.09000000000003px;width:8px;height:5px;background:#d6a23c;"></div>
<div class="u" style="left:66.30000000000001px;top:311.25px;font-size:6.4px;line-height:7.68px;color:#bbbbbb;">fragment_sport.xml</div>
<div style="left:12px;top:320.42px;width:250px;height:10.63px;background:#0d293e;"></div>
<div style="left:57.50000000000001px;top:321.22px;width:5px;height:4px;background:#8d9aa5;"></div>
<div style="left:56.50000000000001px;top:324.72px;width:8px;height:5px;background:#d6a23c;"></div>
<div class="u" style="left:66.30000000000001px;top:321.88px;font-size:6.4px;line-height:7.68px;color:#bbbbbb;">layout_row.xml</div>
<div style="left:36.5px;top:333.4px;width:0;height:0;border-top:3px solid transparent;border-bottom:3px solid transparent;border-left:4px solid #b6b6b6"></div>
<div style="left:46.6px;top:334.05px;width:7.5px;height:5.2px;background:#b9bcbe;border-radius:0.5px"></div>
<div style="left:46.6px;top:332.85px;width:3.0px;height:1.4px;background:#b9bcbe;"></div>
<div style="left:49.75px;top:335.35px;width:3.375px;height:2.3400000000000003px;background:rgba(40,42,44,0.75);"></div>
<div class="u" style="left:56.400000000000006px;top:332.51px;font-size:6.4px;line-height:7.68px;color:#bbbbbb;">mipmap</div>
<div style="left:36.5px;top:344.0px;width:0;height:0;border-top:3px solid transparent;border-bottom:3px solid transparent;border-left:4px solid #b6b6b6"></div>
<div style="left:46.6px;top:344.68px;width:7.5px;height:5.2px;background:#b9bcbe;border-radius:0.5px"></div>
<div style="left:46.6px;top:343.48px;width:3.0px;height:1.4px;background:#b9bcbe;"></div>
<div style="left:49.75px;top:345.98px;width:3.375px;height:2.3400000000000003px;background:rgba(40,42,44,0.75);"></div>
<div class="u" style="left:56.400000000000006px;top:343.14px;font-size:6.4px;line-height:7.68px;color:#bbbbbb;">values</div>
<div style="left:14.9px;top:354.6px;width:0;height:0;border-top:3px solid transparent;border-bottom:3px solid transparent;border-left:4px solid #b6b6b6"></div>
<div style="left:25.0px;top:353.81px;width:7.6px;height:7.6px;background:transparent;border:1.5px solid #5fb55f;border-radius:50%"></div>
<div class="u" style="left:34.7px;top:353.77px;font-size:6.4px;line-height:7.68px;color:#bbbbbb;">Gradle Scripts</div>
<div style="left:257px;top:66px;width:1px;height:484px;background:#393b3d;"></div>
<div style="left:1px;top:550.5px;width:1022px;height:11.5px;background:#3c3e40;border-top:1px solid #323436"></div>
<div style="left:16px;top:554.5px;width:8px;height:6px;background:#cfcfcf;border-radius:2px"></div>
<div style="left:20px;top:556.5px;width:4px;height:4px;background:#b87f4e;border-radius:1px"></div>
<div class="u" style="left:26px;top:553.72px;font-size:6.3px;line-height:7.56px;color:#bbbbbb;">TODO</div>
<div style="left:54px;top:555.0px;width:7px;height:1.3px;background:#d0d0d0;"></div>
<div style="left:54px;top:557.0px;width:5px;height:1.3px;background:#d0d0d0;"></div>
<div style="left:54px;top:559.0px;width:7px;height:1.3px;background:#d0d0d0;"></div>
<div class="u" style="left:64px;top:553.72px;font-size:6.3px;line-height:7.56px;color:#bbbbbb;">6: Logcat</div>
<div style="left:97px;top:554.5px;width:8px;height:6.5px;background:#1a1a1a;border:1px solid #bbb"></div>
<div class="u" style="left:106.5px;top:553.72px;font-size:6.3px;line-height:7.56px;color:#bbbbbb;">Terminal</div>
<div style="left:140.5px;top:554.0px;width:7px;height:7px;background:#d9a860;border-radius:1px"></div>
<div class="u" style="left:150px;top:553.72px;font-size:6.3px;line-height:7.56px;color:#bbbbbb;">0: Messages</div>
<div style="left:905px;top:554.5px;width:7px;height:6px;background:transparent;border:1px solid #8a8a8a;border-radius:50%"></div>
<div class="u" style="left:915px;top:553.72px;font-size:6.3px;line-height:7.56px;color:#bbbbbb;">Event Log</div>
<div style="left:1px;top:562px;width:1022px;height:12px;background:#3c3e40;border-top:1px solid #38393b"></div>
<div style="left:5px;top:564.9px;width:7px;height:7px;background:transparent;border:1px solid #8b8b8b"></div>
<div class="u" style="left:17.5px;top:564.62px;font-size:6.3px;line-height:7.56px;color:#c4c4c4;">Expression expected</div>
<div class="u" style="left:854px;top:564.68px;font-size:6.2px;line-height:7.44px;color:#b0b0b0;">41:35</div>
<div class="u" style="left:874px;top:564.68px;font-size:6.2px;line-height:7.44px;color:#b0b0b0;">CRLF÷</div>
<div class="u" style="left:899px;top:564.68px;font-size:6.2px;line-height:7.44px;color:#b0b0b0;">UTF-8÷</div>
<div class="u" style="left:922px;top:564.68px;font-size:6.2px;line-height:7.44px;color:#b0b0b0;">Context: &lt;no context&gt;</div>
<div style="left:262.5px;top:53px;width:749.0px;height:12px;background:#3c3e40;"></div>
<div style="left:263px;top:53px;width:118px;height:12px;background:#4e5254;"></div>
<div style="left:263px;top:63.4px;width:118px;height:1.6px;background:#4a9cc0;"></div>
<div style="left:267px;top:55px;width:8px;height:8px;background:#3a88b4;border-radius:50%"></div>
<div class="u" style="left:269.2px;top:55.40px;font-size:6px;line-height:7.20px;color:#1b3a4a;font-weight:bold">c</div>
<div class="u" style="left:276px;top:55.22px;font-size:6.3px;line-height:7.56px;color:#bbbbbb;text-decoration:underline;text-decoration-color:#a33">RecyclerViewAdapterHome.java</div>
<div class="u" style="left:375px;top:55.40px;font-size:6px;line-height:7.20px;color:#6f6f6f;">×</div>
<div style="left:384.5px;top:54.5px;width:5px;height:4px;background:#8d9aa5;"></div>
<div style="left:383.5px;top:58px;width:8px;height:5px;background:#d6a23c;"></div>
<div class="u" style="left:393.5px;top:55.22px;font-size:6.3px;line-height:7.56px;color:#bbbbbb;">layout_row.xml</div>
<div class="u" style="left:440px;top:55.40px;font-size:6px;line-height:7.20px;color:#6f6f6f;">×</div>
<div style="left:262.5px;top:65px;width:749.0px;height:14.5px;background:#3b3d3f;"></div>
<div style="left:303.5px;top:67px;width:113.5px;height:11px;background:#5a5c5e;"></div>
<div class="m" style="left:305.0px;top:67.80px;font-size:8px;line-height:9.60px;color:#c0c0c0;">RecyclerViewAdapterHome</div>
<div style="left:421px;top:67px;width:89.5px;height:11px;background:#4f4e3a;"></div>
<div class="m" style="left:422.5px;top:67.80px;font-size:8px;line-height:9.60px;color:#d1c98f;">onBindViewHolder()</div>
<div style="left:262.5px;top:79.5px;width:40.5px;height:471.0px;background:#313335;"></div>
<div style="left:303px;top:79.5px;width:708.5px;height:471.0px;background:#2b2b2b;"></div>
<div style="left:785px;top:79.5px;width:1px;height:471.0px;background:#3a3a3a;"></div>
<div style="left:304.5px;top:116px;width:706.5px;height:21px;background:#4d4e39;"></div>
<div style="left:304.5px;top:137px;width:16px;height:10.1px;background:#4d4e39;"></div>
<div style="left:270px;top:357.5px;width:741px;height:10.1px;background:#323232;"></div>
<div style="left:0;top:79.5px;width:1011.5px;height:471.0px;overflow:hidden">
<div class="m" style="left:252px;width:22.5px;text-align:right;top:-3.90px;font-size:7.3px;line-height:10px;color:#5f6265">13</div>
<div class="m" style="left:304.3px;top:-4.40px;font-size:8px;line-height:11px;color:#a9b7c6"><k>import</k> com.example.matti.newsapp.R;</div>
<div class="m" style="left:252px;width:22.5px;text-align:right;top:6.20px;font-size:7.3px;line-height:10px;color:#5f6265">14</div>
<div class="m" style="left:304.3px;top:5.70px;font-size:8px;line-height:11px;color:#a9b7c6"></div>
<div class="m" style="left:252px;width:22.5px;text-align:right;top:16.30px;font-size:7.3px;line-height:10px;color:#5f6265">15</div>
<div class="m" style="left:304.3px;top:15.80px;font-size:8px;line-height:11px;color:#a9b7c6"><k>import</k> java.util.List;</div>
<div class="m" style="left:252px;width:22.5px;text-align:right;top:26.40px;font-size:7.3px;line-height:10px;color:#5f6265">16</div>
<div class="m" style="left:304.3px;top:25.90px;font-size:8px;line-height:11px;color:#a9b7c6"></div>
<div class="m" style="left:252px;width:22.5px;text-align:right;top:36.50px;font-size:7.3px;line-height:10px;color:#5f6265">17</div>
<div class="m" style="left:304.3px;top:36.00px;font-size:8px;line-height:11px;color:#a9b7c6"><d>/**</d></div>
<div class="m" style="left:252px;width:22.5px;text-align:right;top:46.60px;font-size:7.3px;line-height:10px;color:#5f6265">18</div>
<div class="m" style="left:304.3px;top:46.10px;font-size:8px;line-height:11px;color:#a9b7c6"><d> * Created by matti on 25/03/2018.</d></div>
<div class="m" style="left:252px;width:22.5px;text-align:right;top:56.70px;font-size:7.3px;line-height:10px;color:#5f6265">19</div>
<div class="m" style="left:304.3px;top:56.20px;font-size:8px;line-height:11px;color:#a9b7c6"><d> */</d></div>
<div class="m" style="left:252px;width:22.5px;text-align:right;top:66.80px;font-size:7.3px;line-height:10px;color:#5f6265">20</div>
<div class="m" style="left:304.3px;top:66.30px;font-size:8px;line-height:11px;color:#a9b7c6"></div>
<div class="m" style="left:252px;width:22.5px;text-align:right;top:76.90px;font-size:7.3px;line-height:10px;color:#5f6265">21</div>
<div class="m" style="left:304.3px;top:76.40px;font-size:8px;line-height:11px;color:#a9b7c6"><k>public class</k> <span style="text-decoration:underline;text-decoration-color:#666;color:#a9b7c6">RecyclerViewAdapterHome</span> <k>extends</k> RecyclerView.Adapter&lt;RecyclerViewAdapterHome.MyHolder&gt; {</div>
<div class="m" style="left:252px;width:22.5px;text-align:right;top:87.00px;font-size:7.3px;line-height:10px;color:#5f6265">22</div>
<div class="m" style="left:304.3px;top:86.50px;font-size:8px;line-height:11px;color:#a9b7c6"></div>
<div class="m" style="left:252px;width:22.5px;text-align:right;top:97.10px;font-size:7.3px;line-height:10px;color:#5f6265">23</div>
<div class="m" style="left:304.3px;top:96.60px;font-size:8px;line-height:11px;color:#a9b7c6"></div>
<div class="m" style="left:252px;width:22.5px;text-align:right;top:107.20px;font-size:7.3px;line-height:10px;color:#5f6265">24</div>
<div class="m" style="left:304.3px;top:106.70px;font-size:8px;line-height:11px;color:#a9b7c6">    <k>private</k> List&lt;Article&gt; <f>articles</f><k>;</k></div>
<div class="m" style="left:252px;width:22.5px;text-align:right;top:117.30px;font-size:7.3px;line-height:10px;color:#5f6265">25</div>
<div class="m" style="left:304.3px;top:116.80px;font-size:8px;line-height:11px;color:#a9b7c6">    <k>private</k> Context <span style="background:#4a4b36;color:#9876aa">context</span><k>;</k></div>
<div class="m" style="left:252px;width:22.5px;text-align:right;top:127.40px;font-size:7.3px;line-height:10px;color:#5f6265">26</div>
<div class="m" style="left:304.3px;top:126.90px;font-size:8px;line-height:11px;color:#a9b7c6"></div>
<div class="m" style="left:252px;width:22.5px;text-align:right;top:137.50px;font-size:7.3px;line-height:10px;color:#5f6265">27</div>
<div class="m" style="left:304.3px;top:137.00px;font-size:8px;line-height:11px;color:#a9b7c6">    <k>public</k> <span style="text-decoration:underline;text-decoration-color:#666">RecyclerViewAdapterHome</span>(List&lt;Article&gt; articles, Context context) {</div>
<div class="m" style="left:252px;width:22.5px;text-align:right;top:147.60px;font-size:7.3px;line-height:10px;color:#5f6265">28</div>
<div class="m" style="left:304.3px;top:147.10px;font-size:8px;line-height:11px;color:#a9b7c6">        <k>this</k>.<f>articles</f> = articles<k>;</k></div>
<div class="m" style="left:252px;width:22.5px;text-align:right;top:157.70px;font-size:7.3px;line-height:10px;color:#5f6265">29</div>
<div class="m" style="left:304.3px;top:157.20px;font-size:8px;line-height:11px;color:#a9b7c6">        <k>this</k>.<f>context</f> = context<k>;</k></div>
<div class="m" style="left:252px;width:22.5px;text-align:right;top:167.80px;font-size:7.3px;line-height:10px;color:#5f6265">30</div>
<div class="m" style="left:304.3px;top:167.30px;font-size:8px;line-height:11px;color:#a9b7c6">    }</div>
<div class="m" style="left:252px;width:22.5px;text-align:right;top:177.90px;font-size:7.3px;line-height:10px;color:#5f6265">31</div>
<div class="m" style="left:304.3px;top:177.40px;font-size:8px;line-height:11px;color:#a9b7c6"></div>
<div class="m" style="left:252px;width:22.5px;text-align:right;top:188.00px;font-size:7.3px;line-height:10px;color:#5f6265">32</div>
<div class="m" style="left:304.3px;top:187.50px;font-size:8px;line-height:11px;color:#a9b7c6">    <an>@NonNull</an></div>
<div class="m" style="left:252px;width:22.5px;text-align:right;top:198.10px;font-size:7.3px;line-height:10px;color:#5f6265">33</div>
<div class="m" style="left:304.3px;top:197.60px;font-size:8px;line-height:11px;color:#a9b7c6">    <an>@Override</an></div>
<div class="m" style="left:252px;width:22.5px;text-align:right;top:208.20px;font-size:7.3px;line-height:10px;color:#5f6265">34</div>
<div class="m" style="left:304.3px;top:207.70px;font-size:8px;line-height:11px;color:#a9b7c6">    <k>public</k> MyHolder <y>onCreateViewHolder</y>(<an>@NonNull</an> ViewGroup parent<k>, int</k> viewType) {</div>
<div class="m" style="left:252px;width:22.5px;text-align:right;top:218.30px;font-size:7.3px;line-height:10px;color:#5f6265">35</div>
<div class="m" style="left:304.3px;top:217.80px;font-size:8px;line-height:11px;color:#a9b7c6">        View v = LayoutInflater.<i>from</i>(parent.getContext()).inflate(R.layout.<it>layout_row</it><k>,</k> parent<k>,</k> <hint>attachToRoot:</hint><k>false</k>)<k>;</k></div>
<div class="m" style="left:252px;width:22.5px;text-align:right;top:228.40px;font-size:7.3px;line-height:10px;color:#5f6265">36</div>
<div class="m" style="left:304.3px;top:227.90px;font-size:8px;line-height:11px;color:#a9b7c6">        <k>return new</k> MyHolder(v)<k>;</k></div>
<div class="m" style="left:252px;width:22.5px;text-align:right;top:238.50px;font-size:7.3px;line-height:10px;color:#5f6265">37</div>
<div class="m" style="left:304.3px;top:238.00px;font-size:8px;line-height:11px;color:#a9b7c6">    }</div>
<div class="m" style="left:252px;width:22.5px;text-align:right;top:248.60px;font-size:7.3px;line-height:10px;color:#5f6265">38</div>
<div class="m" style="left:304.3px;top:248.10px;font-size:8px;line-height:11px;color:#a9b7c6"></div>
<div class="m" style="left:252px;width:22.5px;text-align:right;top:258.70px;font-size:7.3px;line-height:10px;color:#5f6265">39</div>
<div class="m" style="left:304.3px;top:258.20px;font-size:8px;line-height:11px;color:#a9b7c6">    <an>@Override</an></div>
<div class="m" style="left:252px;width:22.5px;text-align:right;top:268.80px;font-size:7.3px;line-height:10px;color:#5f6265">40</div>
<div class="m" style="left:304.3px;top:268.30px;font-size:8px;line-height:11px;color:#a9b7c6">    <k>public void</k> <y>onBindViewHolder</y>(<an>@NonNull</an> MyHolder holder<k>, int</k> position) {</div>
<div class="m" style="left:252px;width:22.5px;text-align:right;top:278.90px;font-size:7.3px;line-height:10px;color:#5f6265">41</div>
<div class="m" style="left:304.3px;top:278.40px;font-size:8px;line-height:11px;color:#a9b7c6">        <k>final</k> Article <span style="color:#7a7a7a">article</span> = <span style="color:#c8c8c8">new</span><span style="border-left:1px solid #ddd"></span></div>
<div class="m" style="left:252px;width:22.5px;text-align:right;top:289.00px;font-size:7.3px;line-height:10px;color:#5f6265">42</div>
<div class="m" style="left:304.3px;top:288.50px;font-size:8px;line-height:11px;color:#a9b7c6">    }</div>
<div class="m" style="left:252px;width:22.5px;text-align:right;top:299.10px;font-size:7.3px;line-height:10px;color:#5f6265">43</div>
<div class="m" style="left:304.3px;top:298.60px;font-size:8px;line-height:11px;color:#a9b7c6"></div>
<div class="m" style="left:252px;width:22.5px;text-align:right;top:309.20px;font-size:7.3px;line-height:10px;color:#5f6265">44</div>
<div class="m" style="left:304.3px;top:308.70px;font-size:8px;line-height:11px;color:#a9b7c6">    <an>@Override</an></div>
<div class="m" style="left:252px;width:22.5px;text-align:right;top:319.30px;font-size:7.3px;line-height:10px;color:#5f6265">45</div>
<div class="m" style="left:304.3px;top:318.80px;font-size:8px;line-height:11px;color:#a9b7c6">    <k>public int</k> <y>getItemCount</y>() {</div>
<div class="m" style="left:252px;width:22.5px;text-align:right;top:329.40px;font-size:7.3px;line-height:10px;color:#5f6265">46</div>
<div class="m" style="left:304.3px;top:328.90px;font-size:8px;line-height:11px;color:#a9b7c6">        <k>return</k> <f>articles</f>.size()<k>;</k></div>
<div class="m" style="left:252px;width:22.5px;text-align:right;top:339.50px;font-size:7.3px;line-height:10px;color:#5f6265">47</div>
<div class="m" style="left:304.3px;top:339.00px;font-size:8px;line-height:11px;color:#a9b7c6">    }</div>
<div class="m" style="left:252px;width:22.5px;text-align:right;top:349.60px;font-size:7.3px;line-height:10px;color:#5f6265">48</div>
<div class="m" style="left:304.3px;top:349.10px;font-size:8px;line-height:11px;color:#a9b7c6"></div>
<div class="m" style="left:252px;width:22.5px;text-align:right;top:359.70px;font-size:7.3px;line-height:10px;color:#5f6265">49</div>
<div class="m" style="left:304.3px;top:359.20px;font-size:8px;line-height:11px;color:#a9b7c6">    <k>public class</k> MyHolder <k>extends</k> RecyclerView.ViewHolder {</div>
<div class="m" style="left:252px;width:22.5px;text-align:right;top:369.80px;font-size:7.3px;line-height:10px;color:#5f6265">50</div>
<div class="m" style="left:304.3px;top:369.30px;font-size:8px;line-height:11px;color:#a9b7c6"></div>
<div class="m" style="left:252px;width:22.5px;text-align:right;top:379.90px;font-size:7.3px;line-height:10px;color:#5f6265">51</div>
<div class="m" style="left:304.3px;top:379.40px;font-size:8px;line-height:11px;color:#a9b7c6">        <k>private</k> ImageView <f style="text-decoration:underline">imageFavorite</f><k>;</k></div>
<div class="m" style="left:252px;width:22.5px;text-align:right;top:390.00px;font-size:7.3px;line-height:10px;color:#5f6265">52</div>
<div class="m" style="left:304.3px;top:389.50px;font-size:8px;line-height:11px;color:#a9b7c6">        <k>private</k> TextView <f style="text-decoration:underline">titleText</f><k>;</k></div>
<div class="m" style="left:252px;width:22.5px;text-align:right;top:400.10px;font-size:7.3px;line-height:10px;color:#5f6265">53</div>
<div class="m" style="left:304.3px;top:399.60px;font-size:8px;line-height:11px;color:#a9b7c6">        <k>private</k> TextView <f style="text-decoration:underline">dettailsText</f><k>;</k></div>
<div class="m" style="left:252px;width:22.5px;text-align:right;top:410.20px;font-size:7.3px;line-height:10px;color:#5f6265">54</div>
<div class="m" style="left:304.3px;top:409.70px;font-size:8px;line-height:11px;color:#a9b7c6">        <k>private</k> TextView <f style="text-decoration:underline">dataText</f><k>;</k></div>
<div class="m" style="left:252px;width:22.5px;text-align:right;top:420.30px;font-size:7.3px;line-height:10px;color:#5f6265">55</div>
<div class="m" style="left:304.3px;top:419.80px;font-size:8px;line-height:11px;color:#a9b7c6"></div>
<div class="m" style="left:252px;width:22.5px;text-align:right;top:430.40px;font-size:7.3px;line-height:10px;color:#5f6265">56</div>
<div class="m" style="left:304.3px;top:429.90px;font-size:8px;line-height:11px;color:#a9b7c6">        <k>public</k> <y>MyHolder</y>(View itemView) {</div>
<div class="m" style="left:252px;width:22.5px;text-align:right;top:440.50px;font-size:7.3px;line-height:10px;color:#5f6265">57</div>
<div class="m" style="left:304.3px;top:440.00px;font-size:8px;line-height:11px;color:#a9b7c6">            <k>super</k>(itemView)<k>;</k></div>
<div class="m" style="left:252px;width:22.5px;text-align:right;top:450.60px;font-size:7.3px;line-height:10px;color:#5f6265">58</div>
<div class="m" style="left:304.3px;top:450.10px;font-size:8px;line-height:11px;color:#a9b7c6">            <f>imageFavorite</f> = itemView.findViewById(R.id.<it>imageFavorite</it>)<k>;</k></div>
<div class="m" style="left:252px;width:22.5px;text-align:right;top:460.70px;font-size:7.3px;line-height:10px;color:#5f6265">59</div>
<div class="m" style="left:304.3px;top:460.20px;font-size:8px;line-height:11px;color:#a9b7c6">            <f>titleText</f> = itemView.findViewById(R.id.<it>titleText</it>)<k>;</k></div>
</div>
<div style="left:297.5px;top:219.5px;width:5px;height:5px;background:transparent;border:1px solid #474a4d"></div>
<div style="left:297.5px;top:249.79999999999998px;width:5px;height:5px;background:transparent;border:1px solid #474a4d"></div>
<div style="left:297.5px;top:290.2px;width:5px;height:5px;background:transparent;border:1px solid #474a4d"></div>
<div style="left:297.5px;top:320.5px;width:5px;height:5px;background:transparent;border:1px solid #474a4d"></div>
<div style="left:297.5px;top:350.79999999999995px;width:5px;height:5px;background:transparent;border:1px solid #474a4d"></div>
<div style="left:297.5px;top:371.0px;width:5px;height:5px;background:transparent;border:1px solid #474a4d"></div>
<div style="left:297.5px;top:401.29999999999995px;width:5px;height:5px;background:transparent;border:1px solid #474a4d"></div>
<div style="left:297.5px;top:421.5px;width:5px;height:5px;background:transparent;border:1px solid #474a4d"></div>
<div style="left:297.5px;top:441.69999999999993px;width:5px;height:5px;background:transparent;border:1px solid #474a4d"></div>
<div style="left:297.5px;top:512.4px;width:5px;height:5px;background:transparent;border:1px solid #474a4d"></div>
<div style="left:277.5px;top:290.2px;width:5px;height:5px;background:#5fb85f;border-radius:50%"></div>
<div style="left:277.5px;top:350.79999999999995px;width:5px;height:5px;background:#5fb85f;border-radius:50%"></div>
<div style="left:277.5px;top:401.29999999999995px;width:5px;height:5px;background:#5fb85f;border-radius:50%"></div>
<div style="left:439px;top:368.5px;width:267.5px;height:32px;background:#3c3f41;border:1px solid #5f6366"></div>
<div style="left:440px;top:380px;width:265.5px;height:10.5px;background:#2f3133;"></div>
<div class="m" style="left:459.5px;top:370.20px;font-size:8px;line-height:9.60px;color:#9876aa;">new</div>
<div style="left:442px;top:383px;width:5.5px;height:5.5px;background:#c94f4f;border-radius:50%"></div>
<div class="m" style="left:452px;top:381.00px;font-size:8px;line-height:9.60px;color:#a0a0a0;">t.clone()</div>
<div class="m" style="left:673px;top:381.00px;font-size:8px;line-height:9.60px;color:#888888;">Object</div>
<div class="u" style="left:441px;top:392.44px;font-size:5.1px;line-height:6.12px;color:#a0a0a0;">Press Ctrl+Maiusc+Barra spaziatrice to show only variants that are suitable by type</div>
<div style="left:1006.5px;top:171px;width:4px;height:294px;background:#56585a;border-radius:1px"></div>
<div style="left:1004px;top:194px;width:6px;height:14.5px;background:#d8ae3a;"></div>
<div style="left:1004px;top:221px;width:6px;height:1.2px;background:#bfa24a;"></div>
<div style="left:1004px;top:247px;width:6px;height:1.2px;background:#bfa24a;"></div>
<div style="left:1004px;top:254.5px;width:6px;height:1.2px;background:#bfa24a;"></div>
<div style="left:1004px;top:435px;width:6px;height:1.2px;background:#bfa24a;"></div>
<div style="left:1004px;top:441px;width:6px;height:1.2px;background:#bfa24a;"></div>
<div style="left:1004px;top:447px;width:6px;height:1.2px;background:#bfa24a;"></div>
<div style="left:1004px;top:453px;width:6px;height:1.2px;background:#bfa24a;"></div>
<div style="left:1004px;top:346px;width:6px;height:1.2px;background:#a84a4a;"></div>
<div style="left:1005px;top:82px;width:4px;height:4px;background:#888;"></div>
<div style="left:1010.5px;top:53px;width:12.5px;height:497.5px;background:#3c3e40;border-left:1px solid #2d2f30"></div>
<div style="left:1013px;top:58px;width:8px;height:8px;background:transparent;border:1.4px solid #4fb05a;border-radius:50%"></div>
<div style="left:1016px;top:60.5px;width:2px;height:3px;background:#4fb05a;"></div>
<div class="u" style="left:1012px;top:67px;font-size:5.7px;line-height:10px;color:#9a9a9a;transform-origin:0 0;transform:translateX(10px) rotate(90deg)">Gradle</div>
<div style="left:1013.5px;top:474px;width:7px;height:6px;background:transparent;border:1px solid #9a9a9a"></div>
<div class="u" style="left:1012px;top:480px;font-size:5.9px;line-height:10px;color:#9a9a9a;transform-origin:0 0;transform:translateX(10px) rotate(90deg)">Device File Explorer</div>
<svg style="position:absolute;left:955px;top:546px" width="32" height="22" viewBox="0 0 32 22"><path d="M9 2 C8 6 6.5 11 6.8 16 C7.2 19.5 10 17 11.5 12 C12.5 9 13 7 13.8 6 C14.2 10 14.5 15.5 17 17 C19 18 20.5 15.5 21.5 13.5 C23 13 25 13 28 13" fill="none" stroke="#c9ccd0" stroke-width="2.6" stroke-linecap="round" stroke-linejoin="round" opacity="0.85"/><circle cx="4.5" cy="9" r="3.5" fill="#8fb3c9" opacity="0.35"/></svg>
<div class="u" style="left:981.5px;top:549.54px;font-size:11.6px;line-height:13.92px;color:rgba(205,208,212,0.8);font-weight:bold;letter-spacing:-0.4px">Udemy</div>
<div class="m" style="left:980.5px;top:563.5px;font-size:8.2px;line-height:11px;color:#fff;font-weight:bold;text-shadow:0 0 1px #000,1px 1px 0 #000,-1px -1px 0 #000,1px -1px 0 #000,-1px 1px 0 #000">00:08:03</div>
</div>
<div class="ss" style="top:1230px">
<div style="left:1px;top:0px;width:1022px;height:574px;background:#3c3e40;"></div>
<div style="left:1px;top:0px;width:1022px;height:12px;background:#ffffff;"></div>
<div style="left:3.5px;top:1.8px;width:8px;height:8px;background:#79a96b;border-radius:50%"></div>
<div style="left:5.5px;top:3.8px;width:4px;height:4px;background:#3d6b32;border-radius:50%"></div>
<div class="u" style="left:14px;top:2.33px;font-size:6.45px;line-height:7.74px;color:#1e1e1e;">NewsApp - [E:\Android - Java\APP\App Studio - PRO\NewsApp] - [app] - ...\app\src\main\java\com\example\matti\newsapp\Fragment\SportFragment.java - Android Studio 3.0.1</div>
<div style="left:958px;top:6px;width:6px;height:1px;background:#333;"></div>
<div style="left:983px;top:4px;width:5px;height:5px;background:transparent;border:1px solid #333"></div>
<div style="left:984.5px;top:2.5px;width:5px;height:5px;background:transparent;border-top:1px solid #333;border-right:1px solid #333"></div>
<div class="u" style="left:1006px;top:1.80px;font-size:7px;line-height:8.40px;color:#333;">✕</div>
<div class="u" style="left:4px;top:14.36px;font-size:6.4px;line-height:7.68px;color:#bbbbbb;"><u style="text-decoration-thickness:0.6px;text-underline-offset:1px">F</u>ile</div>
<div class="u" style="left:21px;top:14.36px;font-size:6.4px;line-height:7.68px;color:#bbbbbb;"><u style="text-decoration-thickness:0.6px;text-underline-offset:1px">E</u>dit</div>
<div class="u" style="left:38px;top:14.36px;font-size:6.4px;line-height:7.68px;color:#bbbbbb;"><u style="text-decoration-thickness:0.6px;text-underline-offset:1px">V</u>iew</div>
<div class="u" style="left:58px;top:14.36px;font-size:6.4px;line-height:7.68px;color:#bbbbbb;"><u style="text-decoration-thickness:0.6px;text-underline-offset:1px">N</u>avigate</div>
<div class="u" style="left:89px;top:14.36px;font-size:6.4px;line-height:7.68px;color:#bbbbbb;"><u style="text-decoration-thickness:0.6px;text-underline-offset:1px">C</u>ode</div>
<div class="u" style="left:111px;top:14.36px;font-size:6.4px;line-height:7.68px;color:#bbbbbb;"><u style="text-decoration-thickness:0.6px;text-underline-offset:1px">A</u>nalyze</div>
<div class="u" style="left:139px;top:14.36px;font-size:6.4px;line-height:7.68px;color:#bbbbbb;"><u style="text-decoration-thickness:0.6px;text-underline-offset:1px">R</u>efactor</div>
<div class="u" style="left:169px;top:14.36px;font-size:6.4px;line-height:7.68px;color:#bbbbbb;"><u style="text-decoration-thickness:0.6px;text-underline-offset:1px">B</u>uild</div>
<div class="u" style="left:190px;top:14.36px;font-size:6.4px;line-height:7.68px;color:#bbbbbb;"><u style="text-decoration-thickness:0.6px;text-underline-offset:1px">R</u>un</div>
<div class="u" style="left:207px;top:14.36px;font-size:6.4px;line-height:7.68px;color:#bbbbbb;"><u style="text-decoration-thickness:0.6px;text-underline-offset:1px">T</u>ools</div>
<div class="u" style="left:230px;top:14.36px;font-size:6.4px;line-height:7.68px;color:#bbbbbb;"><u style="text-decoration-thickness:0.6px;text-underline-offset:1px">V</u>CS</div>
<div class="u" style="left:247px;top:14.36px;font-size:6.4px;line-height:7.68px;color:#bbbbbb;"><u style="text-decoration-thickness:0.6px;text-underline-offset:1px">W</u>indow</div>
<div class="u" style="left:277px;top:14.36px;font-size:6.4px;line-height:7.68px;color:#bbbbbb;"><u style="text-decoration-thickness:0.6px;text-underline-offset:1px">H</u>elp</div>
<div style="left:1px;top:24px;width:1022px;height:1px;background:#333537;"></div>
<div style="left:4px;top:29px;width:9px;height:7px;background:#c98d42;border-radius:1px"></div>
<div style="left:4px;top:28px;width:4px;height:2px;background:#c7b38b;"></div>
<div style="left:18.5px;top:28.5px;width:7px;height:7.5px;background:#b9bec2;border-radius:1px"></div>
<div style="left:20px;top:28.5px;width:4px;height:2.5px;background:#6f7579;"></div>
<div style="left:31px;top:28px;width:8.5px;height:8.5px;background:transparent;border:1.6px solid #6e94b0;border-radius:50%"></div>
<div style="left:48px;top:29px;width:8px;height:6px;background:#9a7fc4;clip-path:polygon(0 50%,40% 0,40% 30%,100% 30%,100% 70%,40% 70%,40% 100%)"></div>
<div style="left:61px;top:29px;width:8px;height:6px;background:#5a5d5f;clip-path:polygon(100% 50%,60% 0,60% 30%,0 30%,0 70%,60% 70%,60% 100%)"></div>
<div style="left:73px;top:27px;width:1px;height:10px;background:#515456;"></div>
<div class="u" style="left:77px;top:26.60px;font-size:9px;line-height:10.80px;color:#a07cc0;">✂</div>
<div style="left:90px;top:28.5px;width:6px;height:7.5px;background:transparent;border:1.3px solid #6e9ec5"></div>
<div style="left:92.5px;top:30px;width:6px;height:7px;background:transparent;border:1.3px solid #6e9ec5"></div>
<div style="left:104px;top:29.5px;width:7px;height:7px;background:transparent;border:1.3px solid #c99b5b"></div>
<div style="left:107px;top:28px;width:5px;height:5px;background:#c99b5b;"></div>
<div style="left:121px;top:28px;width:6.5px;height:6.5px;background:transparent;border:1.5px solid #8fa4b8;border-radius:50%"></div>
<div style="left:126px;top:33.5px;width:3px;height:1.5px;background:#8fa4b8;transform:rotate(45deg)"></div>
<div style="left:134px;top:28px;width:6.5px;height:6.5px;background:transparent;border:1.5px solid #8fa4b8;border-radius:50%"></div>
<div style="left:133px;top:34px;width:9px;height:2.5px;background:#8fa4b8;border-radius:2px 2px 0 0"></div>
<div style="left:151.5px;top:28.5px;width:6.5px;height:6.5px;background:#3a7fb0;transform:rotate(45deg)"></div>
<div style="left:165px;top:29px;width:6px;height:6px;background:#55585a;transform:rotate(45deg)"></div>
<div style="left:177px;top:27px;width:1px;height:10px;background:#515456;"></div>
<div style="left:180px;top:31px;width:9px;height:2.5px;background:#4f9552;transform:rotate(45deg)"></div>
<div style="left:180px;top:28px;width:5px;height:3px;background:#4f9552;transform:rotate(45deg)"></div>
<div style="left:192.5px;top:27px;width:32px;height:10.5px;background:transparent;border:1px solid #5b5e60;border-radius:1px"></div>
<div style="left:195px;top:28.5px;width:8.5px;height:7px;background:#9fbf3b;border-radius:1px"></div>
<div style="left:196.5px;top:30.5px;width:5.5px;height:4px;background:#3a4a20;"></div>
<div class="u" style="left:205px;top:28.46px;font-size:6.4px;line-height:7.68px;color:#bbbbbb;">app</div>
<div style="left:218px;top:30.5px;width:0;height:0;border-left:3px solid transparent;border-right:3px solid transparent;border-top:3.5px solid #ccc"></div>
<div style="left:228.5px;top:27.5px;width:0;height:0;border-top:4.5px solid transparent;border-bottom:4.5px solid transparent;border-left:8px solid #4fad4f"></div>
<div style="left:244px;top:29px;width:3.5px;height:6px;background:#55585a;border-radius:1px"></div>
<div style="left:255.5px;top:28px;width:8px;height:8px;background:transparent;border:1.8px solid #5cb85c;border-radius:50%"></div>
<div style="left:259.5px;top:32px;width:4px;height:4px;background:#3aa35a;border-radius:50%"></div>
<div style="left:271px;top:29px;width:6px;height:6.5px;background:#4c5153;"></div>
<div style="left:281px;top:28.5px;width:8.5px;height:6px;background:transparent;border:1.8px solid #3f92c6;border-bottom:none;border-radius:5px 5px 0 0"></div>
<div style="left:296px;top:28px;width:5.5px;height:8px;background:transparent;border:1.2px solid #7fa87f"></div>
<div style="left:299.5px;top:32px;width:4px;height:4px;background:#40a850;border-radius:50%"></div>
<div style="left:309.5px;top:28.5px;width:6.5px;height:7px;background:#525557;"></div>
<div style="left:320px;top:27px;width:1px;height:10px;background:#515456;"></div>
<div style="left:325px;top:27.5px;width:5px;height:6.5px;background:#8e84ad;"></div>
<div style="left:327px;top:32.5px;width:6px;height:3.5px;background:#89a83a;border-radius:3px 3px 0 0"></div>
<div style="left:342.5px;top:27.5px;width:5.5px;height:8px;background:#3a8a64;border-radius:1px"></div>
<div style="left:357.5px;top:28px;width:9px;height:7.5px;background:transparent;border:1.3px solid #8db4d9"></div>
<div style="left:362px;top:32px;width:4.5px;height:4px;background:#2e8bc0;"></div>
<div style="left:378.5px;top:27px;width:1.5px;height:5px;background:#3a82bb;"></div>
<div style="left:375.5px;top:32.5px;width:8px;height:3.5px;background:#89a83a;border-radius:3px 3px 0 0"></div>
<div style="left:388px;top:27px;width:1px;height:10px;background:#515456;"></div>
<div class="u" style="left:392px;top:26.30px;font-size:10px;line-height:12.00px;color:#3a82bb;font-weight:bold">?</div>
<div style="left:999px;top:27.5px;width:6.5px;height:6.5px;background:transparent;border:1.3px solid #9a9a9a;border-radius:50%"></div>
<div style="left:1004px;top:33.5px;width:3px;height:1.3px;background:#9a9a9a;transform:rotate(45deg)"></div>
<div style="left:1012px;top:27px;width:8.5px;height:8.5px;background:#e6e6e6;"></div>
<div style="left:1013.5px;top:31.5px;width:5.5px;height:1px;background:#9a9a9a;"></div>
<div style="left:1px;top:39px;width:1022px;height:1px;background:#333537;"></div>
<div style="left:6px;top:43.2px;width:7.5px;height:6px;background:#a9b5bf;"></div>
<div style="left:7.5px;top:47.2px;width:5px;height:3.5px;background:#3aa0a8;"></div>
<div class="u" style="left:15.7px;top:42.86px;font-size:6.4px;line-height:7.68px;color:#d0d0d0;font-weight:bold">NewsApp</div>
<div style="left:51px;top:44.4px;width:7.5px;height:5.2px;background:#aeb4b8;border-radius:0.5px"></div>
<div style="left:51px;top:43.2px;width:3.0px;height:1.4px;background:#aeb4b8;"></div>
<div style="left:54.15px;top:45.7px;width:3.375px;height:2.3400000000000003px;background:rgba(40,42,44,0.75);"></div>
<div class="u" style="left:60px;top:42.86px;font-size:6.4px;line-height:7.68px;color:#bbbbbb;">app</div>
<div style="left:79px;top:44.4px;width:7.5px;height:5.2px;background:#aeb4b8;border-radius:0.5px"></div>
<div style="left:79px;top:43.2px;width:3.0px;height:1.4px;background:#aeb4b8;"></div>
<div style="left:82.15px;top:45.7px;width:3.375px;height:2.3400000000000003px;background:rgba(40,42,44,0.75);"></div>
<div class="u" style="left:88px;top:42.86px;font-size:6.4px;line-height:7.68px;color:#bbbbbb;text-decoration:underline;text-decoration-color:#a33">src</div>
<div style="left:104px;top:44.4px;width:7.5px;height:5.2px;background:#aeb4b8;border-radius:0.5px"></div>
<div style="left:104px;top:43.2px;width:3.0px;height:1.4px;background:#aeb4b8;"></div>
<div style="left:107.15px;top:45.7px;width:3.375px;height:2.3400000000000003px;background:rgba(40,42,44,0.75);"></div>
<div class="u" style="left:113.5px;top:42.86px;font-size:6.4px;line-height:7.68px;color:#bbbbbb;text-decoration:underline;text-decoration-color:#a33">main</div>
<div style="left:135px;top:44.4px;width:7.5px;height:5.2px;background:#aeb4b8;border-radius:0.5px"></div>
<div style="left:135px;top:43.2px;width:3.0px;height:1.4px;background:#aeb4b8;"></div>
<div style="left:138.15px;top:45.7px;width:3.375px;height:2.3400000000000003px;background:rgba(40,42,44,0.75);"></div>
<div class="u" style="left:145.5px;top:42.86px;font-size:6.4px;line-height:7.68px;color:#bbbbbb;text-decoration:underline;text-decoration-color:#a33">java</div>
<div style="left:165px;top:44.4px;width:7.5px;height:5.2px;background:#aeb4b8;border-radius:0.5px"></div>
<div style="left:165px;top:43.2px;width:3.0px;height:1.4px;background:#aeb4b8;"></div>
<div style="left:168.15px;top:45.7px;width:3.375px;height:2.3400000000000003px;background:rgba(40,42,44,0.75);"></div>
<div class="u" style="left:175px;top:42.86px;font-size:6.4px;line-height:7.68px;color:#bbbbbb;text-decoration:underline;text-decoration-color:#a33">com</div>
<div style="left:194px;top:44.4px;width:7.5px;height:5.2px;background:#aeb4b8;border-radius:0.5px"></div>
<div style="left:194px;top:43.2px;width:3.0px;height:1.4px;background:#aeb4b8;"></div>
<div style="left:197.15px;top:45.7px;width:3.375px;height:2.3400000000000003px;background:rgba(40,42,44,0.75);"></div>
<div class="u" style="left:204px;top:42.86px;font-size:6.4px;line-height:7.68px;color:#bbbbbb;text-decoration:underline;text-decoration-color:#a33">example</div>
<div style="left:236px;top:44.4px;width:7.5px;height:5.2px;background:#aeb4b8;border-radius:0.5px"></div>
<div style="left:236px;top:43.2px;width:3.0px;height:1.4px;background:#aeb4b8;"></div>
<div style="left:239.15px;top:45.7px;width:3.375px;height:2.3400000000000003px;background:rgba(40,42,44,0.75);"></div>
<div class="u" style="left:246px;top:42.86px;font-size:6.4px;line-height:7.68px;color:#bbbbbb;text-decoration:underline;text-decoration-color:#a33">matti</div>
<div style="left:266px;top:44.4px;width:7.5px;height:5.2px;background:#aeb4b8;border-radius:0.5px"></div>
<div style="left:266px;top:43.2px;width:3.0px;height:1.4px;background:#aeb4b8;"></div>
<div style="left:269.15px;top:45.7px;width:3.375px;height:2.3400000000000003px;background:rgba(40,42,44,0.75);"></div>
<div class="u" style="left:276px;top:42.86px;font-size:6.4px;line-height:7.68px;color:#bbbbbb;text-decoration:underline;text-decoration-color:#a33">newsapp</div>
<div style="left:307px;top:44.4px;width:7.5px;height:5.2px;background:#aeb4b8;border-radius:0.5px"></div>
<div style="left:307px;top:43.2px;width:3.0px;height:1.4px;background:#aeb4b8;"></div>
<div style="left:310.15px;top:45.7px;width:3.375px;height:2.3400000000000003px;background:rgba(40,42,44,0.75);"></div>
<div class="u" style="left:317px;top:42.86px;font-size:6.4px;line-height:7.68px;color:#bbbbbb;text-decoration:underline;text-decoration-color:#a33">Fragment</div>
<div style="left:352px;top:42.7px;width:8px;height:8px;background:#3a88b4;border-radius:50%"></div>
<div class="u" style="left:354.2px;top:43.10px;font-size:6px;line-height:7.20px;color:#1b3a4a;font-weight:bold">c</div>
<div class="u" style="left:362px;top:42.86px;font-size:6.4px;line-height:7.68px;color:#bbbbbb;text-decoration:underline;text-decoration-color:#a33">SportFragment</div>
<div style="left:1px;top:52px;width:1022px;height:1px;background:#2f3133;"></div>
<div style="left:1px;top:53px;width:11px;height:497.5px;background:#3c3e40;border-right:1px solid #2d2f30"></div>
<div style="left:1px;top:58.7px;width:10.5px;height:37.5px;background:#333537;"></div>
<div class="u" style="left:2px;top:82px;font-size:5.6px;line-height:10px;color:#e0e0e0;transform-origin:0 0;transform:rotate(-90deg)">1: Project</div>
<div style="left:3.5px;top:83.5px;width:6.5px;height:7px;background:#78b35a;border-radius:50%"></div>
<div style="left:5.5px;top:86px;width:2.5px;height:2.5px;background:#e8f0e0;border-radius:50%"></div>
<div class="u" style="left:2px;top:132px;font-size:5.6px;line-height:10px;color:#9a9a9a;transform-origin:0 0;transform:rotate(-90deg)">Z: Structure</div>
<div style="left:3.5px;top:134px;width:6px;height:7px;background:#b0706e;border-radius:1px;clip-path:polygon(50% 0,100% 40%,80% 100%,20% 100%,0 40%)"></div>
<div class="u" style="left:2px;top:179px;font-size:5.6px;line-height:10px;color:#9a9a9a;transform-origin:0 0;transform:rotate(-90deg)">Captures</div>
<div style="left:3.5px;top:180.5px;width:6.5px;height:6.5px;background:#b9c7d2;border-radius:50%"></div>
<div class="u" style="left:2px;top:484px;font-size:5.8px;line-height:10px;color:#a8a8a8;transform-origin:0 0;transform:rotate(-90deg)">Build Variants</div>
<div style="left:3px;top:485.5px;width:7.5px;height:7px;background:#86a64a;border-radius:3px 3px 1px 1px"></div>
<div class="u" style="left:2px;top:535px;font-size:5.6px;line-height:10px;color:#a8a8a8;transform-origin:0 0;transform:rotate(-90deg)">2: Favorites</div>
<div style="left:3px;top:537px;width:7.5px;height:7.5px;background:#e3a93d;clip-path:polygon(50% 0,63% 35%,100% 38%,70% 60%,80% 100%,50% 78%,20% 100%,30% 60%,0 38%,37% 35%)"></div>
<div style="left:12px;top:53px;width:250px;height:12px;background:#3c3e40;"></div>
<div style="left:22px;top:54.5px;width:8px;height:7.5px;background:#8fc24a;border-radius:4px 4px 1px 1px"></div>
<div class="u" style="left:32px;top:55.16px;font-size:6.4px;line-height:7.68px;color:#7c7c7c;">Android</div>
<div style="left:106px;top:57.8px;width:0;height:0;border-left:3px solid transparent;border-right:3px solid transparent;border-top:3.5px solid #aaa"></div>
<div style="left:207px;top:54.5px;width:8px;height:8px;background:transparent;border:1.5px solid #9a9a9a;border-radius:50%"></div>
<div class="u" style="left:218px;top:54.50px;font-size:7.5px;line-height:9.00px;color:#9a9a9a;">⊕</div>
<div style="left:230px;top:55px;width:1px;height:7px;background:#6b6b6b;"></div>
<div class="u" style="left:234px;top:54.50px;font-size:7.5px;line-height:9.00px;color:#9a9a9a;">⚙-</div>
<div class="u" style="left:250px;top:55.10px;font-size:6.5px;line-height:7.80px;color:#9a9a9a;">|←</div>
<div style="left:12px;top:65px;width:250px;height:485.5px;background:#3c3e40;"></div>
<div style="left:12px;top:64.5px;width:250px;height:0.8px;background:#35373a;"></div>
<div style="left:14.4px;top:68.6px;width:0;height:0;border-left:3px solid transparent;border-right:3px solid transparent;border-top:4px solid #b6b6b6"></div>
<div style="left:25.0px;top:68.3px;width:7.5px;height:5.2px;background:#a7b1a0;border-radius:0.5px"></div>
<div style="left:25.0px;top:67.1px;width:3.0px;height:1.4px;background:#a7b1a0;"></div>
<div style="left:28.15px;top:69.6px;width:3.375px;height:2.3400000000000003px;background:rgba(40,42,44,0.75);"></div>
<div style="left:30.0px;top:71.6px;width:3px;height:3px;background:#7fb85a;"></div>
<div class="u" style="left:35.7px;top:66.76px;font-size:6.4px;line-height:7.68px;color:#bbbbbb;">app</div>
<div style="left:25.7px;top:78.2px;width:0;height:0;border-top:3px solid transparent;border-bottom:3px solid transparent;border-left:4px solid #b6b6b6"></div>
<div style="left:35.8px;top:78.52999999999999px;width:8px;height:6px;background:#4796c2;border-radius:0.5px"></div>
<div style="left:35.8px;top:77.32999999999998px;width:3.2px;height:1.4px;background:#4796c2;"></div>
<div class="u" style="left:45.599999999999994px;top:77.39px;font-size:6.4px;line-height:7.68px;color:#bbbbbb;">manifests</div>
<div style="left:25.2px;top:89.9px;width:0;height:0;border-left:3px solid transparent;border-right:3px solid transparent;border-top:4px solid #b6b6b6"></div>
<div style="left:35.8px;top:89.16px;width:8px;height:6px;background:#4796c2;border-radius:0.5px"></div>
<div style="left:35.8px;top:87.96px;width:3.2px;height:1.4px;background:#4796c2;"></div>
<div class="u" style="left:45.599999999999994px;top:88.02px;font-size:6.4px;line-height:7.68px;color:#bbbbbb;">java</div>
<div style="left:36.0px;top:100.5px;width:0;height:0;border-left:3px solid transparent;border-right:3px solid transparent;border-top:4px solid #b6b6b6"></div>
<div style="left:46.6px;top:100.19px;width:7.5px;height:5.2px;background:#b9bcbe;border-radius:0.5px"></div>
<div style="left:46.6px;top:98.99px;width:3.0px;height:1.4px;background:#b9bcbe;"></div>
<div style="left:49.75px;top:101.49px;width:3.375px;height:2.3400000000000003px;background:rgba(40,42,44,0.75);"></div>
<div class="u" style="left:56.400000000000006px;top:98.65px;font-size:6.4px;line-height:7.68px;color:#bbbbbb;">com.example.matti.newsapp</div>
<div style="left:46.8px;top:111.1px;width:0;height:0;border-left:3px solid transparent;border-right:3px solid transparent;border-top:4px solid #b6b6b6"></div>
<div style="left:57.400000000000006px;top:110.82000000000001px;width:7.5px;height:5.2px;background:#b9bcbe;border-radius:0.5px"></div>
<div style="left:57.400000000000006px;top:109.62px;width:3.0px;height:1.4px;background:#b9bcbe;"></div>
<div style="left:60.550000000000004px;top:112.12px;width:3.375px;height:2.3400000000000003px;background:rgba(40,42,44,0.75);"></div>
<div class="u" style="left:67.2px;top:109.28px;font-size:6.4px;line-height:7.68px;color:#bbbbbb;">Activity</div>
<div style="left:67.2px;top:119.75px;width:8px;height:8px;background:#3a88b4;border-radius:50%"></div>
<div class="u" style="left:69.4px;top:120.15px;font-size:6px;line-height:7.20px;color:#1b3a4a;font-weight:bold">c</div>
<div style="left:78.2px;top:121.25px;width:3px;height:5px;background:#8aa862;transform:skewX(-20deg)"></div>
<div class="u" style="left:85.7px;top:119.91px;font-size:6.4px;line-height:7.68px;color:#bbbbbb;">MainActivity</div>
<div style="left:46.8px;top:132.4px;width:0;height:0;border-left:3px solid transparent;border-right:3px solid transparent;border-top:4px solid #b6b6b6"></div>
<div style="left:57.400000000000006px;top:132.08px;width:7.5px;height:5.2px;background:#b9bcbe;border-radius:0.5px"></div>
<div style="left:57.400000000000006px;top:130.88px;width:3.0px;height:1.4px;background:#b9bcbe;"></div>
<div style="left:60.550000000000004px;top:133.38px;width:3.375px;height:2.3400000000000003px;background:rgba(40,42,44,0.75);"></div>
<div class="u" style="left:67.2px;top:130.54px;font-size:6.4px;line-height:7.68px;color:#bbbbbb;">Adapter</div>
<div style="left:67.2px;top:141.01px;width:8px;height:8px;background:#3a88b4;border-radius:50%"></div>
<div class="u" style="left:69.4px;top:141.41px;font-size:6px;line-height:7.20px;color:#1b3a4a;font-weight:bold">c</div>
<div style="left:78.2px;top:142.51px;width:3px;height:5px;background:#8aa862;transform:skewX(-20deg)"></div>
<div class="u" style="left:85.7px;top:141.17px;font-size:6.4px;line-height:7.68px;color:#bbbbbb;">PagerAdapter</div>
<div style="left:67.2px;top:151.64px;width:8px;height:8px;background:#3a88b4;border-radius:50%"></div>
<div class="u" style="left:69.4px;top:152.04px;font-size:6px;line-height:7.20px;color:#1b3a4a;font-weight:bold">c</div>
<div style="left:78.2px;top:153.14px;width:3px;height:5px;background:#8aa862;transform:skewX(-20deg)"></div>
<div class="u" style="left:85.7px;top:151.80px;font-size:6.4px;line-height:7.68px;color:#bbbbbb;">RecyclerViewAdapterHome</div>
<div style="left:46.8px;top:164.3px;width:0;height:0;border-left:3px solid transparent;border-right:3px solid transparent;border-top:4px solid #b6b6b6"></div>
<div style="left:57.400000000000006px;top:163.97px;width:7.5px;height:5.2px;background:#b9bcbe;border-radius:0.5px"></div>
<div style="left:57.400000000000006px;top:162.76999999999998px;width:3.0px;height:1.4px;background:#b9bcbe;"></div>
<div style="left:60.550000000000004px;top:165.26999999999998px;width:3.375px;height:2.3400000000000003px;background:rgba(40,42,44,0.75);"></div>
<div class="u" style="left:67.2px;top:162.43px;font-size:6.4px;line-height:7.68px;color:#bbbbbb;">Database</div>
<div style="left:67.2px;top:172.9px;width:8px;height:8px;background:#3a88b4;border-radius:50%"></div>
<div class="u" style="left:69.4px;top:173.30px;font-size:6px;line-height:7.20px;color:#1b3a4a;font-weight:bold">c</div>
<div style="left:78.2px;top:174.4px;width:3px;height:5px;background:#8aa862;transform:skewX(-20deg)"></div>
<div class="u" style="left:85.7px;top:173.06px;font-size:6.4px;line-height:7.68px;color:#bbbbbb;">Article</div>
<div style="left:46.8px;top:185.5px;width:0;height:0;border-left:3px solid transparent;border-right:3px solid transparent;border-top:4px solid #b6b6b6"></div>
<div style="left:57.400000000000006px;top:185.23000000000002px;width:7.5px;height:5.2px;background:#b9bcbe;border-radius:0.5px"></div>
<div style="left:57.400000000000006px;top:184.03px;width:3.0px;height:1.4px;background:#b9bcbe;"></div>
<div style="left:60.550000000000004px;top:186.53px;width:3.375px;height:2.3400000000000003px;background:rgba(40,42,44,0.75);"></div>
<div class="u" style="left:67.2px;top:183.69px;font-size:6.4px;line-height:7.68px;color:#bbbbbb;">Fragment</div>
<div style="left:67.2px;top:194.16px;width:8px;height:8px;background:#3a88b4;border-radius:50%"></div>
<div class="u" style="left:69.4px;top:194.56px;font-size:6px;line-height:7.20px;color:#1b3a4a;font-weight:bold">c</div>
<div style="left:78.2px;top:195.66px;width:3px;height:5px;background:#8aa862;transform:skewX(-20deg)"></div>
<div class="u" style="left:85.7px;top:194.32px;font-size:6.4px;line-height:7.68px;color:#bbbbbb;">CronacaFragment</div>
<div style="left:67.2px;top:204.79px;width:8px;height:8px;background:#3a88b4;border-radius:50%"></div>
<div class="u" style="left:69.4px;top:205.19px;font-size:6px;line-height:7.20px;color:#1b3a4a;font-weight:bold">c</div>
<div style="left:78.2px;top:206.29px;width:3px;height:5px;background:#8aa862;transform:skewX(-20deg)"></div>
<div class="u" style="left:85.7px;top:204.95px;font-size:6.4px;line-height:7.68px;color:#bbbbbb;">HomePageFragment</div>
<div style="left:12px;top:214.12px;width:250px;height:10.63px;background:#0d293e;"></div>
<div style="left:67.2px;top:215.42000000000002px;width:8px;height:8px;background:#3a88b4;border-radius:50%"></div>
<div class="u" style="left:69.4px;top:215.82px;font-size:6px;line-height:7.20px;color:#1b3a4a;font-weight:bold">c</div>
<div style="left:78.2px;top:216.92000000000002px;width:3px;height:5px;background:#8aa862;transform:skewX(-20deg)"></div>
<div class="u" style="left:85.7px;top:215.58px;font-size:6.4px;line-height:7.68px;color:#bbbbbb;">SportFragment</div>
<div style="left:12px;top:224.75px;width:250px;height:10.63px;background:#313d31;"></div>
<div style="left:36.5px;top:227.1px;width:0;height:0;border-top:3px solid transparent;border-bottom:3px solid transparent;border-left:4px solid #b6b6b6"></div>
<div style="left:46.6px;top:227.75000000000003px;width:7.5px;height:5.2px;background:#b9bcbe;border-radius:0.5px"></div>
<div style="left:46.6px;top:226.55px;width:3.0px;height:1.4px;background:#b9bcbe;"></div>
<div style="left:49.75px;top:229.05px;width:3.375px;height:2.3400000000000003px;background:rgba(40,42,44,0.75);"></div>
<div class="u" style="left:56.400000000000006px;top:226.21px;font-size:6.4px;line-height:7.68px;color:#bbbbbb;">com.example.matti.newsapp</div>
<div class="u" style="left:139.4px;top:226.21px;font-size:6.4px;line-height:7.68px;color:#7d7d7d;">(androidTest)</div>
<div style="left:12px;top:235.38px;width:250px;height:10.63px;background:#313d31;"></div>
<div style="left:36.5px;top:237.7px;width:0;height:0;border-top:3px solid transparent;border-bottom:3px solid transparent;border-left:4px solid #b6b6b6"></div>
<div style="left:46.6px;top:238.38000000000002px;width:7.5px;height:5.2px;background:#b9bcbe;border-radius:0.5px"></div>
<div style="left:46.6px;top:237.18px;width:3.0px;height:1.4px;background:#b9bcbe;"></div>
<div style="left:49.75px;top:239.68px;width:3.375px;height:2.3400000000000003px;background:rgba(40,42,44,0.75);"></div>
<div class="u" style="left:56.400000000000006px;top:236.84px;font-size:6.4px;line-height:7.68px;color:#bbbbbb;">com.example.matti.newsapp</div>
<div class="u" style="left:139.4px;top:236.84px;font-size:6.4px;line-height:7.68px;color:#7d7d7d;">(test)</div>
<div style="left:25.2px;top:249.3px;width:0;height:0;border-left:3px solid transparent;border-right:3px solid transparent;border-top:4px solid #b6b6b6"></div>
<div style="left:35.8px;top:249.01000000000002px;width:7.5px;height:5.2px;background:#a5a9b5;border-radius:0.5px"></div>
<div style="left:35.8px;top:247.81px;width:3.0px;height:1.4px;background:#a5a9b5;"></div>
<div style="left:38.949999999999996px;top:250.31px;width:3.375px;height:2.3400000000000003px;background:rgba(40,42,44,0.75);"></div>
<div style="left:40.8px;top:251.31px;width:3px;height:3px;background:#cca13c;"></div>
<div class="u" style="left:46.5px;top:247.47px;font-size:6.4px;line-height:7.68px;color:#bbbbbb;">res</div>
<div style="left:36.5px;top:258.9px;width:0;height:0;border-top:3px solid transparent;border-bottom:3px solid transparent;border-left:4px solid #b6b6b6"></div>
<div style="left:46.6px;top:259.64px;width:7.5px;height:5.2px;background:#b9bcbe;border-radius:0.5px"></div>
<div style="left:46.6px;top:258.44px;width:3.0px;height:1.4px;background:#b9bcbe;"></div>
<div style="left:49.75px;top:260.94px;width:3.375px;height:2.3400000000000003px;background:rgba(40,42,44,0.75);"></div>
<div class="u" style="left:56.400000000000006px;top:258.10px;font-size:6.4px;line-height:7.68px;color:#bbbbbb;">drawable</div>
<div style="left:36.0px;top:270.6px;width:0;height:0;border-left:3px solid transparent;border-right:3px solid transparent;border-top:4px solid #b6b6b6"></div>
<div style="left:46.6px;top:270.27000000000004px;width:7.5px;height:5.2px;background:#b9bcbe;border-radius:0.5px"></div>
<div style="left:46.6px;top:269.07000000000005px;width:3.0px;height:1.4px;background:#b9bcbe;"></div>
<div style="left:49.75px;top:271.57000000000005px;width:3.375px;height:2.3400000000000003px;background:rgba(40,42,44,0.75);"></div>
<div class="u" style="left:56.400000000000006px;top:268.73px;font-size:6.4px;line-height:7.68px;color:#bbbbbb;">layout</div>
<div style="left:57.50000000000001px;top:278.70000000000005px;width:5px;height:4px;background:#8d9aa5;"></div>
<div style="left:56.50000000000001px;top:282.20000000000005px;width:8px;height:5px;background:#d6a23c;"></div>
<div class="u" style="left:66.30000000000001px;top:279.36px;font-size:6.4px;line-height:7.68px;color:#bbbbbb;">activity_main.xml</div>
<div style="left:57.50000000000001px;top:289.33000000000004px;width:5px;height:4px;background:#8d9aa5;"></div>
<div style="left:56.50000000000001px;top:292.83000000000004px;width:8px;height:5px;background:#d6a23c;"></div>
<div class="u" style="left:66.30000000000001px;top:289.99px;font-size:6.4px;line-height:7.68px;color:#bbbbbb;">fragment_cronaca.xml</div>
<div style="left:57.50000000000001px;top:299.96000000000004px;width:5px;height:4px;background:#8d9aa5;"></div>
<div style="left:56.50000000000001px;top:303.46000000000004px;width:8px;height:5px;background:#d6a23c;"></div>
<div class="u" style="left:66.30000000000001px;top:300.62px;font-size:6.4px;line-height:7.68px;color:#bbbbbb;">fragment_home_page.xml</div>
<div style="left:57.50000000000001px;top:310.59000000000003px;width:5px;height:4px;background:#8d9aa5;"></div>
<div style="left:56.50000000000001px;top:314.09000000000003px;width:8px;height:5px;background:#d6a23c;"></div>
<div class="u" style="left:66.30000000000001px;top:311.25px;font-size:6.4px;line-height:7.68px;color:#bbbbbb;">fragment_sport.xml</div>
<div style="left:57.50000000000001px;top:321.22px;width:5px;height:4px;background:#8d9aa5;"></div>
<div style="left:56.50000000000001px;top:324.72px;width:8px;height:5px;background:#d6a23c;"></div>
<div class="u" style="left:66.30000000000001px;top:321.88px;font-size:6.4px;line-height:7.68px;color:#bbbbbb;">layout_row.xml</div>
<div style="left:36.5px;top:333.4px;width:0;height:0;border-top:3px solid transparent;border-bottom:3px solid transparent;border-left:4px solid #b6b6b6"></div>
<div style="left:46.6px;top:334.05px;width:7.5px;height:5.2px;background:#b9bcbe;border-radius:0.5px"></div>
<div style="left:46.6px;top:332.85px;width:3.0px;height:1.4px;background:#b9bcbe;"></div>
<div style="left:49.75px;top:335.35px;width:3.375px;height:2.3400000000000003px;background:rgba(40,42,44,0.75);"></div>
<div class="u" style="left:56.400000000000006px;top:332.51px;font-size:6.4px;line-height:7.68px;color:#bbbbbb;">mipmap</div>
<div style="left:36.5px;top:344.0px;width:0;height:0;border-top:3px solid transparent;border-bottom:3px solid transparent;border-left:4px solid #b6b6b6"></div>
<div style="left:46.6px;top:344.68px;width:7.5px;height:5.2px;background:#b9bcbe;border-radius:0.5px"></div>
<div style="left:46.6px;top:343.48px;width:3.0px;height:1.4px;background:#b9bcbe;"></div>
<div style="left:49.75px;top:345.98px;width:3.375px;height:2.3400000000000003px;background:rgba(40,42,44,0.75);"></div>
<div class="u" style="left:56.400000000000006px;top:343.14px;font-size:6.4px;line-height:7.68px;color:#bbbbbb;">values</div>
<div style="left:14.9px;top:354.6px;width:0;height:0;border-top:3px solid transparent;border-bottom:3px solid transparent;border-left:4px solid #b6b6b6"></div>
<div style="left:25.0px;top:353.81px;width:7.6px;height:7.6px;background:transparent;border:1.5px solid #5fb55f;border-radius:50%"></div>
<div class="u" style="left:34.7px;top:353.77px;font-size:6.4px;line-height:7.68px;color:#bbbbbb;">Gradle Scripts</div>
<div style="left:257px;top:66px;width:1px;height:484px;background:#393b3d;"></div>
<div style="left:1px;top:550.5px;width:1022px;height:11.5px;background:#3c3e40;border-top:1px solid #323436"></div>
<div style="left:16px;top:554.5px;width:8px;height:6px;background:#cfcfcf;border-radius:2px"></div>
<div style="left:20px;top:556.5px;width:4px;height:4px;background:#b87f4e;border-radius:1px"></div>
<div class="u" style="left:26px;top:553.72px;font-size:6.3px;line-height:7.56px;color:#bbbbbb;">TODO</div>
<div style="left:54px;top:555.0px;width:7px;height:1.3px;background:#d0d0d0;"></div>
<div style="left:54px;top:557.0px;width:5px;height:1.3px;background:#d0d0d0;"></div>
<div style="left:54px;top:559.0px;width:7px;height:1.3px;background:#d0d0d0;"></div>
<div class="u" style="left:64px;top:553.72px;font-size:6.3px;line-height:7.56px;color:#bbbbbb;">6: Logcat</div>
<div style="left:97px;top:554.5px;width:8px;height:6.5px;background:#1a1a1a;border:1px solid #bbb"></div>
<div class="u" style="left:106.5px;top:553.72px;font-size:6.3px;line-height:7.56px;color:#bbbbbb;">Terminal</div>
<div style="left:140.5px;top:554.0px;width:7px;height:7px;background:#d9a860;border-radius:1px"></div>
<div class="u" style="left:150px;top:553.72px;font-size:6.3px;line-height:7.56px;color:#bbbbbb;">0: Messages</div>
<div style="left:905px;top:554.5px;width:7px;height:6px;background:transparent;border:1px solid #8a8a8a;border-radius:50%"></div>
<div class="u" style="left:915px;top:553.72px;font-size:6.3px;line-height:7.56px;color:#bbbbbb;">Event Log</div>
<div style="left:1px;top:562px;width:1022px;height:12px;background:#3c3e40;border-top:1px solid #38393b"></div>
<div style="left:5px;top:564.9px;width:7px;height:7px;background:transparent;border:1px solid #8b8b8b"></div>
<div class="u" style="left:17.5px;top:564.62px;font-size:6.3px;line-height:7.56px;color:#c4c4c4;">Expression expected</div>
<div class="u" style="left:823px;top:564.68px;font-size:6.2px;line-height:7.44px;color:#b0b0b0;">60 chars</div>
<div class="u" style="left:854px;top:564.68px;font-size:6.2px;line-height:7.44px;color:#b0b0b0;">29:78</div>
<div class="u" style="left:874px;top:564.68px;font-size:6.2px;line-height:7.44px;color:#b0b0b0;">CRLF÷</div>
<div class="u" style="left:899px;top:564.68px;font-size:6.2px;line-height:7.44px;color:#b0b0b0;">UTF-8÷</div>
<div class="u" style="left:922px;top:564.68px;font-size:6.2px;line-height:7.44px;color:#b0b0b0;">Context: &lt;no context&gt;</div>
<div style="left:262.5px;top:53px;width:749.0px;height:12px;background:#3c3e40;"></div>
<div style="left:267px;top:55px;width:8px;height:8px;background:#3a88b4;border-radius:50%"></div>
<div class="u" style="left:269.2px;top:55.40px;font-size:6px;line-height:7.20px;color:#1b3a4a;font-weight:bold">c</div>
<div class="u" style="left:276.5px;top:55.22px;font-size:6.3px;line-height:7.56px;color:#bbbbbb;">CronacaFragment.java</div>
<div class="u" style="left:344px;top:55.40px;font-size:6px;line-height:7.20px;color:#6f6f6f;">×</div>
<div style="left:357px;top:55px;width:8px;height:8px;background:#3a88b4;border-radius:50%"></div>
<div class="u" style="left:359.2px;top:55.40px;font-size:6px;line-height:7.20px;color:#1b3a4a;font-weight:bold">c</div>
<div class="u" style="left:366.5px;top:55.22px;font-size:6.3px;line-height:7.56px;color:#bbbbbb;">HomePageFragment.java</div>
<div class="u" style="left:442px;top:55.40px;font-size:6px;line-height:7.20px;color:#6f6f6f;">×</div>
<div style="left:450.5px;top:53px;width:81.0px;height:12px;background:#4e5254;"></div>
<div style="left:450.5px;top:63.4px;width:81.0px;height:1.6px;background:#4a9cc0;"></div>
<div style="left:455.5px;top:55px;width:8px;height:8px;background:#3a88b4;border-radius:50%"></div>
<div class="u" style="left:457.7px;top:55.40px;font-size:6px;line-height:7.20px;color:#1b3a4a;font-weight:bold">c</div>
<div class="u" style="left:465px;top:55.22px;font-size:6.3px;line-height:7.56px;color:#bbbbbb;text-decoration:underline;text-decoration-color:#a33">SportFragment.java</div>
<div class="u" style="left:524px;top:55.40px;font-size:6px;line-height:7.20px;color:#6f6f6f;">×</div>
<div style="left:262.5px;top:65px;width:749.0px;height:14px;background:#3b3d3f;"></div>
<div style="left:296.5px;top:67px;width:65.0px;height:11px;background:#5a5c5e;"></div>
<div class="m" style="left:298.0px;top:67.80px;font-size:8px;line-height:9.60px;color:#c0c0c0;">SportFragment</div>
<div style="left:365.5px;top:67px;width:72.5px;height:11px;background:#4f4e3a;"></div>
<div class="m" style="left:367.0px;top:67.80px;font-size:8px;line-height:9.60px;color:#d1c98f;">onCreateView()</div>
<div style="left:262.5px;top:79px;width:33.5px;height:471.5px;background:#313335;"></div>
<div style="left:296px;top:79px;width:715.5px;height:471.5px;background:#2b2b2b;"></div>
<div style="left:778px;top:79px;width:1px;height:471.5px;background:#3a3a3a;"></div>
<div style="left:296px;top:302.65px;width:715.5px;height:10.1px;background:#323232;"></div>
<div style="left:0;top:79px;width:1011.5px;height:471.5px;overflow:hidden">
<div class="m" style="left:252px;width:22.5px;text-align:right;top:1.50px;font-size:7.3px;line-height:10px;color:#5f6265">1</div>
<div class="m" style="left:298.5px;top:1.00px;font-size:8px;line-height:11px;color:#a9b7c6"><k>package</k> com.example.matti.newsapp.Fragment<k>;</k></div>
<div class="m" style="left:252px;width:22.5px;text-align:right;top:11.60px;font-size:7.3px;line-height:10px;color:#5f6265">2</div>
<div class="m" style="left:298.5px;top:11.10px;font-size:8px;line-height:11px;color:#a9b7c6"></div>
<div class="m" style="left:252px;width:22.5px;text-align:right;top:21.70px;font-size:7.3px;line-height:10px;color:#5f6265">3</div>
<div class="m" style="left:298.5px;top:21.20px;font-size:8px;line-height:11px;color:#a9b7c6"></div>
<div class="m" style="left:252px;width:22.5px;text-align:right;top:31.80px;font-size:7.3px;line-height:10px;color:#5f6265">4</div>
<div class="m" style="left:298.5px;top:31.30px;font-size:8px;line-height:11px;color:#a9b7c6"><k>import</k> <span style="background:#3a3c3e;color:#8a8a8a">...</span></div>
<div class="m" style="left:252px;width:22.5px;text-align:right;top:41.90px;font-size:7.3px;line-height:10px;color:#5f6265">11</div>
<div class="m" style="left:298.5px;top:41.40px;font-size:8px;line-height:11px;color:#a9b7c6"></div>
<div class="m" style="left:252px;width:22.5px;text-align:right;top:52.00px;font-size:7.3px;line-height:10px;color:#5f6265">12</div>
<div class="m" style="left:298.5px;top:51.50px;font-size:8px;line-height:11px;color:#a9b7c6"></div>
<div class="m" style="left:252px;width:22.5px;text-align:right;top:62.10px;font-size:7.3px;line-height:10px;color:#5f6265">13</div>
<div class="m" style="left:298.5px;top:61.60px;font-size:8px;line-height:11px;color:#a9b7c6"><d>/**</d></div>
<div class="m" style="left:252px;width:22.5px;text-align:right;top:72.20px;font-size:7.3px;line-height:10px;color:#5f6265">14</div>
<div class="m" style="left:298.5px;top:71.70px;font-size:8px;line-height:11px;color:#a9b7c6"><d> * A simple {<span style="text-decoration:underline;font-weight:bold">@link</span> <span style="color:#8fa98a">Fragment</span>} subclass.</d></div>
<div class="m" style="left:252px;width:22.5px;text-align:right;top:82.30px;font-size:7.3px;line-height:10px;color:#5f6265">15</div>
<div class="m" style="left:298.5px;top:81.80px;font-size:8px;line-height:11px;color:#a9b7c6"><d> */</d></div>
<div class="m" style="left:252px;width:22.5px;text-align:right;top:92.40px;font-size:7.3px;line-height:10px;color:#5f6265">16</div>
<div class="m" style="left:298.5px;top:91.90px;font-size:8px;line-height:11px;color:#a9b7c6"><k>public class</k> SportFragment <k>extends</k> Fragment {</div>
<div class="m" style="left:252px;width:22.5px;text-align:right;top:102.50px;font-size:7.3px;line-height:10px;color:#5f6265">17</div>
<div class="m" style="left:298.5px;top:102.00px;font-size:8px;line-height:11px;color:#a9b7c6"></div>
<div class="m" style="left:252px;width:22.5px;text-align:right;top:112.60px;font-size:7.3px;line-height:10px;color:#5f6265">18</div>
<div class="m" style="left:298.5px;top:112.10px;font-size:8px;line-height:11px;color:#a9b7c6"></div>
<div class="m" style="left:252px;width:22.5px;text-align:right;top:122.70px;font-size:7.3px;line-height:10px;color:#5f6265">19</div>
<div class="m" style="left:298.5px;top:122.20px;font-size:8px;line-height:11px;color:#a9b7c6">    <k>public</k> <y>SportFragment</y>() {</div>
<div class="m" style="left:252px;width:22.5px;text-align:right;top:132.80px;font-size:7.3px;line-height:10px;color:#5f6265">20</div>
<div class="m" style="left:298.5px;top:132.30px;font-size:8px;line-height:11px;color:#a9b7c6">        <c>// Required empty public constructor</c></div>
<div class="m" style="left:252px;width:22.5px;text-align:right;top:142.90px;font-size:7.3px;line-height:10px;color:#5f6265">21</div>
<div class="m" style="left:298.5px;top:142.40px;font-size:8px;line-height:11px;color:#a9b7c6">    }</div>
<div class="m" style="left:252px;width:22.5px;text-align:right;top:153.00px;font-size:7.3px;line-height:10px;color:#5f6265">22</div>
<div class="m" style="left:298.5px;top:152.50px;font-size:8px;line-height:11px;color:#a9b7c6"></div>
<div class="m" style="left:252px;width:22.5px;text-align:right;top:163.10px;font-size:7.3px;line-height:10px;color:#5f6265">23</div>
<div class="m" style="left:298.5px;top:162.60px;font-size:8px;line-height:11px;color:#a9b7c6"></div>
<div class="m" style="left:252px;width:22.5px;text-align:right;top:173.20px;font-size:7.3px;line-height:10px;color:#5f6265">24</div>
<div class="m" style="left:298.5px;top:172.70px;font-size:8px;line-height:11px;color:#a9b7c6">    <an>@Override</an></div>
<div class="m" style="left:252px;width:22.5px;text-align:right;top:183.30px;font-size:7.3px;line-height:10px;color:#5f6265">25</div>
<div class="m" style="left:298.5px;top:182.80px;font-size:8px;line-height:11px;color:#a9b7c6">    <k>public</k> View <y>onCreateView</y>(LayoutInflater <span style="background:#4a4b36">inflater</span><k>,</k> ViewGroup container<k>,</k></div>
<div class="m" style="left:252px;width:22.5px;text-align:right;top:193.40px;font-size:7.3px;line-height:10px;color:#5f6265">26</div>
<div class="m" style="left:298.5px;top:192.90px;font-size:8px;line-height:11px;color:#a9b7c6">                             Bundle savedInstanceState) {</div>
<div class="m" style="left:252px;width:22.5px;text-align:right;top:203.50px;font-size:7.3px;line-height:10px;color:#5f6265">27</div>
<div class="m" style="left:298.5px;top:203.00px;font-size:8px;line-height:11px;color:#a9b7c6">        <c>// Inflate the layout for this fragment</c></div>
<div class="m" style="left:252px;width:22.5px;text-align:right;top:213.60px;font-size:7.3px;line-height:10px;color:#5f6265">28</div>
<div class="m" style="left:298.5px;top:213.10px;font-size:8px;line-height:11px;color:#a9b7c6">        View <span style="text-decoration:underline;color:#888">v</span> =</div>
<div class="m" style="left:252px;width:22.5px;text-align:right;top:223.70px;font-size:7.3px;line-height:10px;color:#5f6265">29</div>
<div class="m" style="left:298.5px;top:223.20px;font-size:8px;line-height:11px;color:#a9b7c6">        <k>return</k> <span style="background:#214283">inflater.inflate(R.layout.<it>fragment_sport</it><k>,</k> container<k>,</k> <hint style="background:#2a4a7a">attachToRoot:</hint><k>false</k>)<k>;</k></span><span style="border-left:1px solid #ddd"></span></div>
<div class="m" style="left:252px;width:22.5px;text-align:right;top:233.80px;font-size:7.3px;line-height:10px;color:#5f6265">30</div>
<div class="m" style="left:298.5px;top:233.30px;font-size:8px;line-height:11px;color:#a9b7c6">    }</div>
<div class="m" style="left:252px;width:22.5px;text-align:right;top:243.90px;font-size:7.3px;line-height:10px;color:#5f6265">31</div>
<div class="m" style="left:298.5px;top:243.40px;font-size:8px;line-height:11px;color:#a9b7c6"></div>
<div class="m" style="left:252px;width:22.5px;text-align:right;top:254.00px;font-size:7.3px;line-height:10px;color:#5f6265">32</div>
<div class="m" style="left:298.5px;top:253.50px;font-size:8px;line-height:11px;color:#a9b7c6">}</div>
<div class="m" style="left:252px;width:22.5px;text-align:right;top:264.10px;font-size:7.3px;line-height:10px;color:#5f6265">33</div>
<div class="m" style="left:298.5px;top:263.60px;font-size:8px;line-height:11px;color:#a9b7c6"></div>
</div>
<div style="left:292px;top:113.3px;width:5px;height:5px;background:transparent;border:1px solid #474a4d"></div>
<div style="left:292px;top:143.6px;width:5px;height:5px;background:transparent;border:1px solid #474a4d"></div>
<div style="left:292px;top:163.8px;width:5px;height:5px;background:transparent;border:1px solid #474a4d"></div>
<div style="left:292px;top:204.2px;width:5px;height:5px;background:transparent;border:1px solid #474a4d"></div>
<div style="left:292px;top:224.4px;width:5px;height:5px;background:transparent;border:1px solid #474a4d"></div>
<div style="left:292px;top:274.9px;width:5px;height:5px;background:transparent;border:1px solid #474a4d"></div>
<div style="left:292px;top:295.1px;width:5px;height:5px;background:transparent;border:1px solid #474a4d"></div>
<div style="left:292px;top:315.29999999999995px;width:5px;height:5px;background:transparent;border:1px solid #474a4d"></div>
<div style="left:277px;top:172.89999999999998px;width:7px;height:7px;background:#c49a3b;border-radius:1px"></div>
<div style="left:277.5px;top:264.79999999999995px;width:5px;height:5px;background:#9ec6e0;border-radius:50%"></div>
<div style="left:1004.5px;top:81px;width:5px;height:5px;background:#c94f4f;border-radius:50%"></div>
<div style="left:1003.5px;top:270.8px;width:7px;height:1.3px;background:#d8ae3a;"></div>
<div style="left:1003.5px;top:301.5px;width:7px;height:1.3px;background:#a84a4a;"></div>
<div class="u" style="left:764px;top:302.90px;font-size:8px;line-height:9.60px;color:#cccccc;font-family:Liberation Serif">I</div>
<div style="left:1010.5px;top:53px;width:12.5px;height:497.5px;background:#3c3e40;border-left:1px solid #2d2f30"></div>
<div style="left:1013px;top:58px;width:8px;height:8px;background:transparent;border:1.4px solid #4fb05a;border-radius:50%"></div>
<div style="left:1016px;top:60.5px;width:2px;height:3px;background:#4fb05a;"></div>
<div class="u" style="left:1012px;top:67px;font-size:5.7px;line-height:10px;color:#9a9a9a;transform-origin:0 0;transform:translateX(10px) rotate(90deg)">Gradle</div>
<div style="left:1013.5px;top:474px;width:7px;height:6px;background:transparent;border:1px solid #9a9a9a"></div>
<div class="u" style="left:1012px;top:480px;font-size:5.9px;line-height:10px;color:#9a9a9a;transform-origin:0 0;transform:translateX(10px) rotate(90deg)">Device File Explorer</div>
<svg style="position:absolute;left:955px;top:546px" width="32" height="22" viewBox="0 0 32 22"><path d="M9 2 C8 6 6.5 11 6.8 16 C7.2 19.5 10 17 11.5 12 C12.5 9 13 7 13.8 6 C14.2 10 14.5 15.5 17 17 C19 18 20.5 15.5 21.5 13.5 C23 13 25 13 28 13" fill="none" stroke="#c9ccd0" stroke-width="2.6" stroke-linecap="round" stroke-linejoin="round" opacity="0.85"/><circle cx="4.5" cy="9" r="3.5" fill="#8fb3c9" opacity="0.35"/></svg>
<div class="u" style="left:981.5px;top:549.54px;font-size:11.6px;line-height:13.92px;color:rgba(205,208,212,0.8);font-weight:bold;letter-spacing:-0.4px">Udemy</div>
<div class="m" style="left:980.5px;top:563.5px;font-size:8.2px;line-height:11px;color:#fff;font-weight:bold;text-shadow:0 0 1px #000,1px 1px 0 #000,-1px -1px 0 #000,1px -1px 0 #000,-1px 1px 0 #000">00:12:05</div>
</div>
<div class="ss" style="top:1805px">
<div style="left:1px;top:0px;width:1022px;height:574px;background:#3c3e40;"></div>
<div style="left:1px;top:0px;width:1022px;height:12px;background:#ffffff;"></div>
<div style="left:3.5px;top:1.8px;width:8px;height:8px;background:#79a96b;border-radius:50%"></div>
<div style="left:5.5px;top:3.8px;width:4px;height:4px;background:#3d6b32;border-radius:50%"></div>
<div class="u" style="left:14px;top:2.33px;font-size:6.45px;line-height:7.74px;color:#1e1e1e;">NewsApp - [E:\Android - Java\APP\App Studio - PRO\NewsApp] - [app] - ...\app\src\main\java\com\example\matti\newsapp\Fragment\HomePageFragment.java - Android Studio 3.0.1</div>
<div style="left:958px;top:6px;width:6px;height:1px;background:#333;"></div>
<div style="left:983px;top:4px;width:5px;height:5px;background:transparent;border:1px solid #333"></div>
<div style="left:984.5px;top:2.5px;width:5px;height:5px;background:transparent;border-top:1px solid #333;border-right:1px solid #333"></div>
<div class="u" style="left:1006px;top:1.80px;font-size:7px;line-height:8.40px;color:#333;">✕</div>
<div class="u" style="left:4px;top:14.36px;font-size:6.4px;line-height:7.68px;color:#bbbbbb;"><u style="text-decoration-thickness:0.6px;text-underline-offset:1px">F</u>ile</div>
<div class="u" style="left:21px;top:14.36px;font-size:6.4px;line-height:7.68px;color:#bbbbbb;"><u style="text-decoration-thickness:0.6px;text-underline-offset:1px">E</u>dit</div>
<div class="u" style="left:38px;top:14.36px;font-size:6.4px;line-height:7.68px;color:#bbbbbb;"><u style="text-decoration-thickness:0.6px;text-underline-offset:1px">V</u>iew</div>
<div class="u" style="left:58px;top:14.36px;font-size:6.4px;line-height:7.68px;color:#bbbbbb;"><u style="text-decoration-thickness:0.6px;text-underline-offset:1px">N</u>avigate</div>
<div class="u" style="left:89px;top:14.36px;font-size:6.4px;line-height:7.68px;color:#bbbbbb;"><u style="text-decoration-thickness:0.6px;text-underline-offset:1px">C</u>ode</div>
<div class="u" style="left:111px;top:14.36px;font-size:6.4px;line-height:7.68px;color:#bbbbbb;"><u style="text-decoration-thickness:0.6px;text-underline-offset:1px">A</u>nalyze</div>
<div class="u" style="left:139px;top:14.36px;font-size:6.4px;line-height:7.68px;color:#bbbbbb;"><u style="text-decoration-thickness:0.6px;text-underline-offset:1px">R</u>efactor</div>
<div class="u" style="left:169px;top:14.36px;font-size:6.4px;line-height:7.68px;color:#bbbbbb;"><u style="text-decoration-thickness:0.6px;text-underline-offset:1px">B</u>uild</div>
<div class="u" style="left:190px;top:14.36px;font-size:6.4px;line-height:7.68px;color:#bbbbbb;"><u style="text-decoration-thickness:0.6px;text-underline-offset:1px">R</u>un</div>
<div class="u" style="left:207px;top:14.36px;font-size:6.4px;line-height:7.68px;color:#bbbbbb;"><u style="text-decoration-thickness:0.6px;text-underline-offset:1px">T</u>ools</div>
<div class="u" style="left:230px;top:14.36px;font-size:6.4px;line-height:7.68px;color:#bbbbbb;"><u style="text-decoration-thickness:0.6px;text-underline-offset:1px">V</u>CS</div>
<div class="u" style="left:247px;top:14.36px;font-size:6.4px;line-height:7.68px;color:#bbbbbb;"><u style="text-decoration-thickness:0.6px;text-underline-offset:1px">W</u>indow</div>
<div class="u" style="left:277px;top:14.36px;font-size:6.4px;line-height:7.68px;color:#bbbbbb;"><u style="text-decoration-thickness:0.6px;text-underline-offset:1px">H</u>elp</div>
<div style="left:1px;top:24px;width:1022px;height:1px;background:#333537;"></div>
<div style="left:4px;top:29px;width:9px;height:7px;background:#c98d42;border-radius:1px"></div>
<div style="left:4px;top:28px;width:4px;height:2px;background:#c7b38b;"></div>
<div style="left:18.5px;top:28.5px;width:7px;height:7.5px;background:#b9bec2;border-radius:1px"></div>
<div style="left:20px;top:28.5px;width:4px;height:2.5px;background:#6f7579;"></div>
<div style="left:31px;top:28px;width:8.5px;height:8.5px;background:transparent;border:1.6px solid #6e94b0;border-radius:50%"></div>
<div style="left:48px;top:29px;width:8px;height:6px;background:#9a7fc4;clip-path:polygon(0 50%,40% 0,40% 30%,100% 30%,100% 70%,40% 70%,40% 100%)"></div>
<div style="left:61px;top:29px;width:8px;height:6px;background:#5a5d5f;clip-path:polygon(100% 50%,60% 0,60% 30%,0 30%,0 70%,60% 70%,60% 100%)"></div>
<div style="left:73px;top:27px;width:1px;height:10px;background:#515456;"></div>
<div class="u" style="left:77px;top:26.60px;font-size:9px;line-height:10.80px;color:#a07cc0;">✂</div>
<div style="left:90px;top:28.5px;width:6px;height:7.5px;background:transparent;border:1.3px solid #6e9ec5"></div>
<div style="left:92.5px;top:30px;width:6px;height:7px;background:transparent;border:1.3px solid #6e9ec5"></div>
<div style="left:104px;top:29.5px;width:7px;height:7px;background:transparent;border:1.3px solid #c99b5b"></div>
<div style="left:107px;top:28px;width:5px;height:5px;background:#c99b5b;"></div>
<div style="left:121px;top:28px;width:6.5px;height:6.5px;background:transparent;border:1.5px solid #8fa4b8;border-radius:50%"></div>
<div style="left:126px;top:33.5px;width:3px;height:1.5px;background:#8fa4b8;transform:rotate(45deg)"></div>
<div style="left:134px;top:28px;width:6.5px;height:6.5px;background:transparent;border:1.5px solid #8fa4b8;border-radius:50%"></div>
<div style="left:133px;top:34px;width:9px;height:2.5px;background:#8fa4b8;border-radius:2px 2px 0 0"></div>
<div style="left:151.5px;top:28.5px;width:6.5px;height:6.5px;background:#3a7fb0;transform:rotate(45deg)"></div>
<div style="left:165px;top:29px;width:6px;height:6px;background:#55585a;transform:rotate(45deg)"></div>
<div style="left:177px;top:27px;width:1px;height:10px;background:#515456;"></div>
<div style="left:180px;top:31px;width:9px;height:2.5px;background:#4f9552;transform:rotate(45deg)"></div>
<div style="left:180px;top:28px;width:5px;height:3px;background:#4f9552;transform:rotate(45deg)"></div>
<div style="left:192.5px;top:27px;width:32px;height:10.5px;background:transparent;border:1px solid #5b5e60;border-radius:1px"></div>
<div style="left:195px;top:28.5px;width:8.5px;height:7px;background:#9fbf3b;border-radius:1px"></div>
<div style="left:196.5px;top:30.5px;width:5.5px;height:4px;background:#3a4a20;"></div>
<div class="u" style="left:205px;top:28.46px;font-size:6.4px;line-height:7.68px;color:#bbbbbb;">app</div>
<div style="left:218px;top:30.5px;width:0;height:0;border-left:3px solid transparent;border-right:3px solid transparent;border-top:3.5px solid #ccc"></div>
<div style="left:228.5px;top:27.5px;width:0;height:0;border-top:4.5px solid transparent;border-bottom:4.5px solid transparent;border-left:8px solid #4fad4f"></div>
<div style="left:244px;top:29px;width:3.5px;height:6px;background:#55585a;border-radius:1px"></div>
<div style="left:255.5px;top:28px;width:8px;height:8px;background:transparent;border:1.8px solid #5cb85c;border-radius:50%"></div>
<div style="left:259.5px;top:32px;width:4px;height:4px;background:#3aa35a;border-radius:50%"></div>
<div style="left:271px;top:29px;width:6px;height:6.5px;background:#4c5153;"></div>
<div style="left:281px;top:28.5px;width:8.5px;height:6px;background:transparent;border:1.8px solid #3f92c6;border-bottom:none;border-radius:5px 5px 0 0"></div>
<div style="left:296px;top:28px;width:5.5px;height:8px;background:transparent;border:1.2px solid #7fa87f"></div>
<div style="left:299.5px;top:32px;width:4px;height:4px;background:#40a850;border-radius:50%"></div>
<div style="left:309.5px;top:28.5px;width:6.5px;height:7px;background:#525557;"></div>
<div style="left:320px;top:27px;width:1px;height:10px;background:#515456;"></div>
<div style="left:325px;top:27.5px;width:5px;height:6.5px;background:#8e84ad;"></div>
<div style="left:327px;top:32.5px;width:6px;height:3.5px;background:#89a83a;border-radius:3px 3px 0 0"></div>
<div style="left:342.5px;top:27.5px;width:5.5px;height:8px;background:#3a8a64;border-radius:1px"></div>
<div style="left:357.5px;top:28px;width:9px;height:7.5px;background:transparent;border:1.3px solid #8db4d9"></div>
<div style="left:362px;top:32px;width:4.5px;height:4px;background:#2e8bc0;"></div>
<div style="left:378.5px;top:27px;width:1.5px;height:5px;background:#3a82bb;"></div>
<div style="left:375.5px;top:32.5px;width:8px;height:3.5px;background:#89a83a;border-radius:3px 3px 0 0"></div>
<div style="left:388px;top:27px;width:1px;height:10px;background:#515456;"></div>
<div class="u" style="left:392px;top:26.30px;font-size:10px;line-height:12.00px;color:#3a82bb;font-weight:bold">?</div>
<div style="left:999px;top:27.5px;width:6.5px;height:6.5px;background:transparent;border:1.3px solid #9a9a9a;border-radius:50%"></div>
<div style="left:1004px;top:33.5px;width:3px;height:1.3px;background:#9a9a9a;transform:rotate(45deg)"></div>
<div style="left:1012px;top:27px;width:8.5px;height:8.5px;background:#e6e6e6;"></div>
<div style="left:1013.5px;top:31.5px;width:5.5px;height:1px;background:#9a9a9a;"></div>
<div style="left:1px;top:39px;width:1022px;height:1px;background:#333537;"></div>
<div style="left:6px;top:43.2px;width:7.5px;height:6px;background:#a9b5bf;"></div>
<div style="left:7.5px;top:47.2px;width:5px;height:3.5px;background:#3aa0a8;"></div>
<div class="u" style="left:15.7px;top:42.86px;font-size:6.4px;line-height:7.68px;color:#d0d0d0;font-weight:bold">NewsApp</div>
<div style="left:51px;top:44.4px;width:7.5px;height:5.2px;background:#aeb4b8;border-radius:0.5px"></div>
<div style="left:51px;top:43.2px;width:3.0px;height:1.4px;background:#aeb4b8;"></div>
<div style="left:54.15px;top:45.7px;width:3.375px;height:2.3400000000000003px;background:rgba(40,42,44,0.75);"></div>
<div class="u" style="left:60px;top:42.86px;font-size:6.4px;line-height:7.68px;color:#bbbbbb;">app</div>
<div style="left:79px;top:44.4px;width:7.5px;height:5.2px;background:#aeb4b8;border-radius:0.5px"></div>
<div style="left:79px;top:43.2px;width:3.0px;height:1.4px;background:#aeb4b8;"></div>
<div style="left:82.15px;top:45.7px;width:3.375px;height:2.3400000000000003px;background:rgba(40,42,44,0.75);"></div>
<div class="u" style="left:88px;top:42.86px;font-size:6.4px;line-height:7.68px;color:#bbbbbb;">src</div>
<div style="left:104px;top:44.4px;width:7.5px;height:5.2px;background:#aeb4b8;border-radius:0.5px"></div>
<div style="left:104px;top:43.2px;width:3.0px;height:1.4px;background:#aeb4b8;"></div>
<div style="left:107.15px;top:45.7px;width:3.375px;height:2.3400000000000003px;background:rgba(40,42,44,0.75);"></div>
<div class="u" style="left:113.5px;top:42.86px;font-size:6.4px;line-height:7.68px;color:#bbbbbb;">main</div>
<div style="left:135px;top:44.4px;width:7.5px;height:5.2px;background:#aeb4b8;border-radius:0.5px"></div>
<div style="left:135px;top:43.2px;width:3.0px;height:1.4px;background:#aeb4b8;"></div>
<div style="left:138.15px;top:45.7px;width:3.375px;height:2.3400000000000003px;background:rgba(40,42,44,0.75);"></div>
<div class="u" style="left:145.5px;top:42.86px;font-size:6.4px;line-height:7.68px;color:#bbbbbb;">java</div>
<div style="left:165px;top:44.4px;width:7.5px;height:5.2px;background:#aeb4b8;border-radius:0.5px"></div>
<div style="left:165px;top:43.2px;width:3.0px;height:1.4px;background:#aeb4b8;"></div>
<div style="left:168.15px;top:45.7px;width:3.375px;height:2.3400000000000003px;background:rgba(40,42,44,0.75);"></div>
<div class="u" style="left:175px;top:42.86px;font-size:6.4px;line-height:7.68px;color:#bbbbbb;">com</div>
<div style="left:194px;top:44.4px;width:7.5px;height:5.2px;background:#aeb4b8;border-radius:0.5px"></div>
<div style="left:194px;top:43.2px;width:3.0px;height:1.4px;background:#aeb4b8;"></div>
<div style="left:197.15px;top:45.7px;width:3.375px;height:2.3400000000000003px;background:rgba(40,42,44,0.75);"></div>
<div class="u" style="left:204px;top:42.86px;font-size:6.4px;line-height:7.68px;color:#bbbbbb;">example</div>
<div style="left:236px;top:44.4px;width:7.5px;height:5.2px;background:#aeb4b8;border-radius:0.5px"></div>
<div style="left:236px;top:43.2px;width:3.0px;height:1.4px;background:#aeb4b8;"></div>
<div style="left:239.15px;top:45.7px;width:3.375px;height:2.3400000000000003px;background:rgba(40,42,44,0.75);"></div>
<div class="u" style="left:246px;top:42.86px;font-size:6.4px;line-height:7.68px;color:#bbbbbb;">matti</div>
<div style="left:266px;top:44.4px;width:7.5px;height:5.2px;background:#aeb4b8;border-radius:0.5px"></div>
<div style="left:266px;top:43.2px;width:3.0px;height:1.4px;background:#aeb4b8;"></div>
<div style="left:269.15px;top:45.7px;width:3.375px;height:2.3400000000000003px;background:rgba(40,42,44,0.75);"></div>
<div class="u" style="left:276px;top:42.86px;font-size:6.4px;line-height:7.68px;color:#bbbbbb;">newsapp</div>
<div style="left:307px;top:44.4px;width:7.5px;height:5.2px;background:#aeb4b8;border-radius:0.5px"></div>
<div style="left:307px;top:43.2px;width:3.0px;height:1.4px;background:#aeb4b8;"></div>
<div style="left:310.15px;top:45.7px;width:3.375px;height:2.3400000000000003px;background:rgba(40,42,44,0.75);"></div>
<div class="u" style="left:317px;top:42.86px;font-size:6.4px;line-height:7.68px;color:#bbbbbb;">Fragment</div>
<div style="left:352px;top:42.7px;width:8px;height:8px;background:#3a88b4;border-radius:50%"></div>
<div class="u" style="left:354.2px;top:43.10px;font-size:6px;line-height:7.20px;color:#1b3a4a;font-weight:bold">c</div>
<div class="u" style="left:362px;top:42.86px;font-size:6.4px;line-height:7.68px;color:#bbbbbb;text-decoration:underline;text-decoration-color:#a33">HomePageFragment</div>
<div style="left:1px;top:52px;width:1022px;height:1px;background:#2f3133;"></div>
<div style="left:1px;top:53px;width:11px;height:497.5px;background:#3c3e40;border-right:1px solid #2d2f30"></div>
<div style="left:1px;top:58.7px;width:10.5px;height:37.5px;background:#333537;"></div>
<div class="u" style="left:2px;top:82px;font-size:5.6px;line-height:10px;color:#e0e0e0;transform-origin:0 0;transform:rotate(-90deg)">1: Project</div>
<div style="left:3.5px;top:83.5px;width:6.5px;height:7px;background:#78b35a;border-radius:50%"></div>
<div style="left:5.5px;top:86px;width:2.5px;height:2.5px;background:#e8f0e0;border-radius:50%"></div>
<div class="u" style="left:2px;top:132px;font-size:5.6px;line-height:10px;color:#9a9a9a;transform-origin:0 0;transform:rotate(-90deg)">Z: Structure</div>
<div style="left:3.5px;top:134px;width:6px;height:7px;background:#b0706e;border-radius:1px;clip-path:polygon(50% 0,100% 40%,80% 100%,20% 100%,0 40%)"></div>
<div class="u" style="left:2px;top:179px;font-size:5.6px;line-height:10px;color:#9a9a9a;transform-origin:0 0;transform:rotate(-90deg)">Captures</div>
<div style="left:3.5px;top:180.5px;width:6.5px;height:6.5px;background:#b9c7d2;border-radius:50%"></div>
<div class="u" style="left:2px;top:484px;font-size:5.8px;line-height:10px;color:#a8a8a8;transform-origin:0 0;transform:rotate(-90deg)">Build Variants</div>
<div style="left:3px;top:485.5px;width:7.5px;height:7px;background:#86a64a;border-radius:3px 3px 1px 1px"></div>
<div class="u" style="left:2px;top:535px;font-size:5.6px;line-height:10px;color:#a8a8a8;transform-origin:0 0;transform:rotate(-90deg)">2: Favorites</div>
<div style="left:3px;top:537px;width:7.5px;height:7.5px;background:#e3a93d;clip-path:polygon(50% 0,63% 35%,100% 38%,70% 60%,80% 100%,50% 78%,20% 100%,30% 60%,0 38%,37% 35%)"></div>
<div style="left:12px;top:53px;width:250px;height:12px;background:#3c3e40;"></div>
<div style="left:22px;top:54.5px;width:8px;height:7.5px;background:#8fc24a;border-radius:4px 4px 1px 1px"></div>
<div class="u" style="left:32px;top:55.16px;font-size:6.4px;line-height:7.68px;color:#7c7c7c;">Android</div>
<div style="left:106px;top:57.8px;width:0;height:0;border-left:3px solid transparent;border-right:3px solid transparent;border-top:3.5px solid #aaa"></div>
<div style="left:207px;top:54.5px;width:8px;height:8px;background:transparent;border:1.5px solid #9a9a9a;border-radius:50%"></div>
<div class="u" style="left:218px;top:54.50px;font-size:7.5px;line-height:9.00px;color:#9a9a9a;">⊕</div>
<div style="left:230px;top:55px;width:1px;height:7px;background:#6b6b6b;"></div>
<div class="u" style="left:234px;top:54.50px;font-size:7.5px;line-height:9.00px;color:#9a9a9a;">⚙-</div>
<div class="u" style="left:250px;top:55.10px;font-size:6.5px;line-height:7.80px;color:#9a9a9a;">|←</div>
<div style="left:12px;top:65px;width:250px;height:485.5px;background:#3c3e40;"></div>
<div style="left:12px;top:64.5px;width:250px;height:0.8px;background:#35373a;"></div>
<div style="left:14.4px;top:68.6px;width:0;height:0;border-left:3px solid transparent;border-right:3px solid transparent;border-top:4px solid #b6b6b6"></div>
<div style="left:25.0px;top:68.3px;width:7.5px;height:5.2px;background:#a7b1a0;border-radius:0.5px"></div>
<div style="left:25.0px;top:67.1px;width:3.0px;height:1.4px;background:#a7b1a0;"></div>
<div style="left:28.15px;top:69.6px;width:3.375px;height:2.3400000000000003px;background:rgba(40,42,44,0.75);"></div>
<div style="left:30.0px;top:71.6px;width:3px;height:3px;background:#7fb85a;"></div>
<div class="u" style="left:35.7px;top:66.76px;font-size:6.4px;line-height:7.68px;color:#bbbbbb;">app</div>
<div style="left:25.7px;top:78.2px;width:0;height:0;border-top:3px solid transparent;border-bottom:3px solid transparent;border-left:4px solid #b6b6b6"></div>
<div style="left:35.8px;top:78.52999999999999px;width:8px;height:6px;background:#4796c2;border-radius:0.5px"></div>
<div style="left:35.8px;top:77.32999999999998px;width:3.2px;height:1.4px;background:#4796c2;"></div>
<div class="u" style="left:45.599999999999994px;top:77.39px;font-size:6.4px;line-height:7.68px;color:#bbbbbb;">manifests</div>
<div style="left:25.2px;top:89.9px;width:0;height:0;border-left:3px solid transparent;border-right:3px solid transparent;border-top:4px solid #b6b6b6"></div>
<div style="left:35.8px;top:89.16px;width:8px;height:6px;background:#4796c2;border-radius:0.5px"></div>
<div style="left:35.8px;top:87.96px;width:3.2px;height:1.4px;background:#4796c2;"></div>
<div class="u" style="left:45.599999999999994px;top:88.02px;font-size:6.4px;line-height:7.68px;color:#bbbbbb;">java</div>
<div style="left:36.0px;top:100.5px;width:0;height:0;border-left:3px solid transparent;border-right:3px solid transparent;border-top:4px solid #b6b6b6"></div>
<div style="left:46.6px;top:100.19px;width:7.5px;height:5.2px;background:#b9bcbe;border-radius:0.5px"></div>
<div style="left:46.6px;top:98.99px;width:3.0px;height:1.4px;background:#b9bcbe;"></div>
<div style="left:49.75px;top:101.49px;width:3.375px;height:2.3400000000000003px;background:rgba(40,42,44,0.75);"></div>
<div class="u" style="left:56.400000000000006px;top:98.65px;font-size:6.4px;line-height:7.68px;color:#bbbbbb;">com.example.matti.newsapp</div>
<div style="left:46.8px;top:111.1px;width:0;height:0;border-left:3px solid transparent;border-right:3px solid transparent;border-top:4px solid #b6b6b6"></div>
<div style="left:57.400000000000006px;top:110.82000000000001px;width:7.5px;height:5.2px;background:#b9bcbe;border-radius:0.5px"></div>
<div style="left:57.400000000000006px;top:109.62px;width:3.0px;height:1.4px;background:#b9bcbe;"></div>
<div style="left:60.550000000000004px;top:112.12px;width:3.375px;height:2.3400000000000003px;background:rgba(40,42,44,0.75);"></div>
<div class="u" style="left:67.2px;top:109.28px;font-size:6.4px;line-height:7.68px;color:#bbbbbb;">Activity</div>
<div style="left:67.2px;top:119.75px;width:8px;height:8px;background:#3a88b4;border-radius:50%"></div>
<div class="u" style="left:69.4px;top:120.15px;font-size:6px;line-height:7.20px;color:#1b3a4a;font-weight:bold">c</div>
<div style="left:78.2px;top:121.25px;width:3px;height:5px;background:#8aa862;transform:skewX(-20deg)"></div>
<div class="u" style="left:85.7px;top:119.91px;font-size:6.4px;line-height:7.68px;color:#bbbbbb;">MainActivity</div>
<div style="left:46.8px;top:132.4px;width:0;height:0;border-left:3px solid transparent;border-right:3px solid transparent;border-top:4px solid #b6b6b6"></div>
<div style="left:57.400000000000006px;top:132.08px;width:7.5px;height:5.2px;background:#b9bcbe;border-radius:0.5px"></div>
<div style="left:57.400000000000006px;top:130.88px;width:3.0px;height:1.4px;background:#b9bcbe;"></div>
<div style="left:60.550000000000004px;top:133.38px;width:3.375px;height:2.3400000000000003px;background:rgba(40,42,44,0.75);"></div>
<div class="u" style="left:67.2px;top:130.54px;font-size:6.4px;line-height:7.68px;color:#bbbbbb;">Adapter</div>
<div style="left:67.2px;top:141.01px;width:8px;height:8px;background:#3a88b4;border-radius:50%"></div>
<div class="u" style="left:69.4px;top:141.41px;font-size:6px;line-height:7.20px;color:#1b3a4a;font-weight:bold">c</div>
<div style="left:78.2px;top:142.51px;width:3px;height:5px;background:#8aa862;transform:skewX(-20deg)"></div>
<div class="u" style="left:85.7px;top:141.17px;font-size:6.4px;line-height:7.68px;color:#bbbbbb;">PagerAdapter</div>
<div style="left:67.2px;top:151.64px;width:8px;height:8px;background:#3a88b4;border-radius:50%"></div>
<div class="u" style="left:69.4px;top:152.04px;font-size:6px;line-height:7.20px;color:#1b3a4a;font-weight:bold">c</div>
<div style="left:78.2px;top:153.14px;width:3px;height:5px;background:#8aa862;transform:skewX(-20deg)"></div>
<div class="u" style="left:85.7px;top:151.80px;font-size:6.4px;line-height:7.68px;color:#bbbbbb;">RecyclerViewAdapterHome</div>
<div style="left:46.8px;top:164.3px;width:0;height:0;border-left:3px solid transparent;border-right:3px solid transparent;border-top:4px solid #b6b6b6"></div>
<div style="left:57.400000000000006px;top:163.97px;width:7.5px;height:5.2px;background:#b9bcbe;border-radius:0.5px"></div>
<div style="left:57.400000000000006px;top:162.76999999999998px;width:3.0px;height:1.4px;background:#b9bcbe;"></div>
<div style="left:60.550000000000004px;top:165.26999999999998px;width:3.375px;height:2.3400000000000003px;background:rgba(40,42,44,0.75);"></div>
<div class="u" style="left:67.2px;top:162.43px;font-size:6.4px;line-height:7.68px;color:#bbbbbb;">Database</div>
<div style="left:67.2px;top:172.9px;width:8px;height:8px;background:#3a88b4;border-radius:50%"></div>
<div class="u" style="left:69.4px;top:173.30px;font-size:6px;line-height:7.20px;color:#1b3a4a;font-weight:bold">c</div>
<div style="left:78.2px;top:174.4px;width:3px;height:5px;background:#8aa862;transform:skewX(-20deg)"></div>
<div class="u" style="left:85.7px;top:173.06px;font-size:6.4px;line-height:7.68px;color:#bbbbbb;">Article</div>
<div style="left:46.8px;top:185.5px;width:0;height:0;border-left:3px solid transparent;border-right:3px solid transparent;border-top:4px solid #b6b6b6"></div>
<div style="left:57.400000000000006px;top:185.23000000000002px;width:7.5px;height:5.2px;background:#b9bcbe;border-radius:0.5px"></div>
<div style="left:57.400000000000006px;top:184.03px;width:3.0px;height:1.4px;background:#b9bcbe;"></div>
<div style="left:60.550000000000004px;top:186.53px;width:3.375px;height:2.3400000000000003px;background:rgba(40,42,44,0.75);"></div>
<div class="u" style="left:67.2px;top:183.69px;font-size:6.4px;line-height:7.68px;color:#bbbbbb;">Fragment</div>
<div style="left:67.2px;top:194.16px;width:8px;height:8px;background:#3a88b4;border-radius:50%"></div>
<div class="u" style="left:69.4px;top:194.56px;font-size:6px;line-height:7.20px;color:#1b3a4a;font-weight:bold">c</div>
<div style="left:78.2px;top:195.66px;width:3px;height:5px;background:#8aa862;transform:skewX(-20deg)"></div>
<div class="u" style="left:85.7px;top:194.32px;font-size:6.4px;line-height:7.68px;color:#bbbbbb;">CronacaFragment</div>
<div style="left:67.2px;top:204.79px;width:8px;height:8px;background:#3a88b4;border-radius:50%"></div>
<div class="u" style="left:69.4px;top:205.19px;font-size:6px;line-height:7.20px;color:#1b3a4a;font-weight:bold">c</div>
<div style="left:78.2px;top:206.29px;width:3px;height:5px;background:#8aa862;transform:skewX(-20deg)"></div>
<div class="u" style="left:85.7px;top:204.95px;font-size:6.4px;line-height:7.68px;color:#bbbbbb;">HomePageFragment</div>
<div style="left:12px;top:214.12px;width:250px;height:10.63px;background:#0d293e;"></div>
<div style="left:67.2px;top:215.42000000000002px;width:8px;height:8px;background:#3a88b4;border-radius:50%"></div>
<div class="u" style="left:69.4px;top:215.82px;font-size:6px;line-height:7.20px;color:#1b3a4a;font-weight:bold">c</div>
<div style="left:78.2px;top:216.92000000000002px;width:3px;height:5px;background:#8aa862;transform:skewX(-20deg)"></div>
<div class="u" style="left:85.7px;top:215.58px;font-size:6.4px;line-height:7.68px;color:#bbbbbb;">SportFragment</div>
<div style="left:12px;top:224.75px;width:250px;height:10.63px;background:#313d31;"></div>
<div style="left:36.5px;top:227.1px;width:0;height:0;border-top:3px solid transparent;border-bottom:3px solid transparent;border-left:4px solid #b6b6b6"></div>
<div style="left:46.6px;top:227.75000000000003px;width:7.5px;height:5.2px;background:#b9bcbe;border-radius:0.5px"></div>
<div style="left:46.6px;top:226.55px;width:3.0px;height:1.4px;background:#b9bcbe;"></div>
<div style="left:49.75px;top:229.05px;width:3.375px;height:2.3400000000000003px;background:rgba(40,42,44,0.75);"></div>
<div class="u" style="left:56.400000000000006px;top:226.21px;font-size:6.4px;line-height:7.68px;color:#bbbbbb;">com.example.matti.newsapp</div>
<div class="u" style="left:139.4px;top:226.21px;font-size:6.4px;line-height:7.68px;color:#7d7d7d;">(androidTest)</div>
<div style="left:12px;top:235.38px;width:250px;height:10.63px;background:#313d31;"></div>
<div style="left:36.5px;top:237.7px;width:0;height:0;border-top:3px solid transparent;border-bottom:3px solid transparent;border-left:4px solid #b6b6b6"></div>
<div style="left:46.6px;top:238.38000000000002px;width:7.5px;height:5.2px;background:#b9bcbe;border-radius:0.5px"></div>
<div style="left:46.6px;top:237.18px;width:3.0px;height:1.4px;background:#b9bcbe;"></div>
<div style="left:49.75px;top:239.68px;width:3.375px;height:2.3400000000000003px;background:rgba(40,42,44,0.75);"></div>
<div class="u" style="left:56.400000000000006px;top:236.84px;font-size:6.4px;line-height:7.68px;color:#bbbbbb;">com.example.matti.newsapp</div>
<div class="u" style="left:139.4px;top:236.84px;font-size:6.4px;line-height:7.68px;color:#7d7d7d;">(test)</div>
<div style="left:25.2px;top:249.3px;width:0;height:0;border-left:3px solid transparent;border-right:3px solid transparent;border-top:4px solid #b6b6b6"></div>
<div style="left:35.8px;top:249.01000000000002px;width:7.5px;height:5.2px;background:#a5a9b5;border-radius:0.5px"></div>
<div style="left:35.8px;top:247.81px;width:3.0px;height:1.4px;background:#a5a9b5;"></div>
<div style="left:38.949999999999996px;top:250.31px;width:3.375px;height:2.3400000000000003px;background:rgba(40,42,44,0.75);"></div>
<div style="left:40.8px;top:251.31px;width:3px;height:3px;background:#cca13c;"></div>
<div class="u" style="left:46.5px;top:247.47px;font-size:6.4px;line-height:7.68px;color:#bbbbbb;">res</div>
<div style="left:36.5px;top:258.9px;width:0;height:0;border-top:3px solid transparent;border-bottom:3px solid transparent;border-left:4px solid #b6b6b6"></div>
<div style="left:46.6px;top:259.64px;width:7.5px;height:5.2px;background:#b9bcbe;border-radius:0.5px"></div>
<div style="left:46.6px;top:258.44px;width:3.0px;height:1.4px;background:#b9bcbe;"></div>
<div style="left:49.75px;top:260.94px;width:3.375px;height:2.3400000000000003px;background:rgba(40,42,44,0.75);"></div>
<div class="u" style="left:56.400000000000006px;top:258.10px;font-size:6.4px;line-height:7.68px;color:#bbbbbb;">drawable</div>
<div style="left:36.0px;top:270.6px;width:0;height:0;border-left:3px solid transparent;border-right:3px solid transparent;border-top:4px solid #b6b6b6"></div>
<div style="left:46.6px;top:270.27000000000004px;width:7.5px;height:5.2px;background:#b9bcbe;border-radius:0.5px"></div>
<div style="left:46.6px;top:269.07000000000005px;width:3.0px;height:1.4px;background:#b9bcbe;"></div>
<div style="left:49.75px;top:271.57000000000005px;width:3.375px;height:2.3400000000000003px;background:rgba(40,42,44,0.75);"></div>
<div class="u" style="left:56.400000000000006px;top:268.73px;font-size:6.4px;line-height:7.68px;color:#bbbbbb;">layout</div>
<div style="left:57.50000000000001px;top:278.70000000000005px;width:5px;height:4px;background:#8d9aa5;"></div>
<div style="left:56.50000000000001px;top:282.20000000000005px;width:8px;height:5px;background:#d6a23c;"></div>
<div class="u" style="left:66.30000000000001px;top:279.36px;font-size:6.4px;line-height:7.68px;color:#bbbbbb;">activity_main.xml</div>
<div style="left:57.50000000000001px;top:289.33000000000004px;width:5px;height:4px;background:#8d9aa5;"></div>
<div style="left:56.50000000000001px;top:292.83000000000004px;width:8px;height:5px;background:#d6a23c;"></div>
<div class="u" style="left:66.30000000000001px;top:289.99px;font-size:6.4px;line-height:7.68px;color:#bbbbbb;">fragment_cronaca.xml</div>
<div style="left:57.50000000000001px;top:299.96000000000004px;width:5px;height:4px;background:#8d9aa5;"></div>
<div style="left:56.50000000000001px;top:303.46000000000004px;width:8px;height:5px;background:#d6a23c;"></div>
<div class="u" style="left:66.30000000000001px;top:300.62px;font-size:6.4px;line-height:7.68px;color:#bbbbbb;">fragment_home_page.xml</div>
<div style="left:57.50000000000001px;top:310.59000000000003px;width:5px;height:4px;background:#8d9aa5;"></div>
<div style="left:56.50000000000001px;top:314.09000000000003px;width:8px;height:5px;background:#d6a23c;"></div>
<div class="u" style="left:66.30000000000001px;top:311.25px;font-size:6.4px;line-height:7.68px;color:#bbbbbb;">fragment_sport.xml</div>
<div style="left:57.50000000000001px;top:321.22px;width:5px;height:4px;background:#8d9aa5;"></div>
<div style="left:56.50000000000001px;top:324.72px;width:8px;height:5px;background:#d6a23c;"></div>
<div class="u" style="left:66.30000000000001px;top:321.88px;font-size:6.4px;line-height:7.68px;color:#bbbbbb;">layout_row.xml</div>
<div style="left:36.5px;top:333.4px;width:0;height:0;border-top:3px solid transparent;border-bottom:3px solid transparent;border-left:4px solid #b6b6b6"></div>
<div style="left:46.6px;top:334.05px;width:7.5px;height:5.2px;background:#b9bcbe;border-radius:0.5px"></div>
<div style="left:46.6px;top:332.85px;width:3.0px;height:1.4px;background:#b9bcbe;"></div>
<div style="left:49.75px;top:335.35px;width:3.375px;height:2.3400000000000003px;background:rgba(40,42,44,0.75);"></div>
<div class="u" style="left:56.400000000000006px;top:332.51px;font-size:6.4px;line-height:7.68px;color:#bbbbbb;">mipmap</div>
<div style="left:36.5px;top:344.0px;width:0;height:0;border-top:3px solid transparent;border-bottom:3px solid transparent;border-left:4px solid #b6b6b6"></div>
<div style="left:46.6px;top:344.68px;width:7.5px;height:5.2px;background:#b9bcbe;border-radius:0.5px"></div>
<div style="left:46.6px;top:343.48px;width:3.0px;height:1.4px;background:#b9bcbe;"></div>
<div style="left:49.75px;top:345.98px;width:3.375px;height:2.3400000000000003px;background:rgba(40,42,44,0.75);"></div>
<div class="u" style="left:56.400000000000006px;top:343.14px;font-size:6.4px;line-height:7.68px;color:#bbbbbb;">values</div>
<div style="left:14.9px;top:354.6px;width:0;height:0;border-top:3px solid transparent;border-bottom:3px solid transparent;border-left:4px solid #b6b6b6"></div>
<div style="left:25.0px;top:353.81px;width:7.6px;height:7.6px;background:transparent;border:1.5px solid #5fb55f;border-radius:50%"></div>
<div class="u" style="left:34.7px;top:353.77px;font-size:6.4px;line-height:7.68px;color:#bbbbbb;">Gradle Scripts</div>
<div style="left:257px;top:66px;width:1px;height:484px;background:#393b3d;"></div>
<div style="left:1px;top:550.5px;width:1022px;height:11.5px;background:#3c3e40;border-top:1px solid #323436"></div>
<div style="left:16px;top:554.5px;width:8px;height:6px;background:#cfcfcf;border-radius:2px"></div>
<div style="left:20px;top:556.5px;width:4px;height:4px;background:#b87f4e;border-radius:1px"></div>
<div class="u" style="left:26px;top:553.72px;font-size:6.3px;line-height:7.56px;color:#bbbbbb;">TODO</div>
<div style="left:54px;top:555.0px;width:7px;height:1.3px;background:#d0d0d0;"></div>
<div style="left:54px;top:557.0px;width:5px;height:1.3px;background:#d0d0d0;"></div>
<div style="left:54px;top:559.0px;width:7px;height:1.3px;background:#d0d0d0;"></div>
<div class="u" style="left:64px;top:553.72px;font-size:6.3px;line-height:7.56px;color:#bbbbbb;">6: Logcat</div>
<div style="left:97px;top:554.5px;width:8px;height:6.5px;background:#1a1a1a;border:1px solid #bbb"></div>
<div class="u" style="left:106.5px;top:553.72px;font-size:6.3px;line-height:7.56px;color:#bbbbbb;">Terminal</div>
<div style="left:140.5px;top:554.0px;width:7px;height:7px;background:#d9a860;border-radius:1px"></div>
<div class="u" style="left:150px;top:553.72px;font-size:6.3px;line-height:7.56px;color:#bbbbbb;">0: Messages</div>
<div style="left:905px;top:554.5px;width:7px;height:6px;background:transparent;border:1px solid #8a8a8a;border-radius:50%"></div>
<div class="u" style="left:915px;top:553.72px;font-size:6.3px;line-height:7.56px;color:#bbbbbb;">Event Log</div>
<div style="left:1px;top:562px;width:1022px;height:12px;background:#3c3e40;border-top:1px solid #38393b"></div>
<div style="left:5px;top:564.9px;width:7px;height:7px;background:transparent;border:1px solid #8b8b8b"></div>
<div class="u" style="left:17.5px;top:564.62px;font-size:6.3px;line-height:7.56px;color:#c4c4c4;">Gradle build finished in 3s 41ms (3 minutes ago)</div>
<div class="u" style="left:854px;top:564.68px;font-size:6.2px;line-height:7.44px;color:#b0b0b0;">38:34</div>
<div class="u" style="left:874px;top:564.68px;font-size:6.2px;line-height:7.44px;color:#b0b0b0;">CRLF÷</div>
<div class="u" style="left:899px;top:564.68px;font-size:6.2px;line-height:7.44px;color:#b0b0b0;">UTF-8÷</div>
<div class="u" style="left:922px;top:564.68px;font-size:6.2px;line-height:7.44px;color:#b0b0b0;">Context: &lt;no context&gt;</div>
<div style="left:262.5px;top:53px;width:749.0px;height:12px;background:#3c3e40;"></div>
<div style="left:267px;top:55px;width:8px;height:8px;background:#3a88b4;border-radius:50%"></div>
<div class="u" style="left:269.2px;top:55.40px;font-size:6px;line-height:7.20px;color:#1b3a4a;font-weight:bold">c</div>
<div class="u" style="left:276.5px;top:55.22px;font-size:6.3px;line-height:7.56px;color:#bbbbbb;">CronacaFragment.java</div>
<div class="u" style="left:344px;top:55.40px;font-size:6px;line-height:7.20px;color:#6f6f6f;">×</div>
<div style="left:352px;top:53px;width:98px;height:12px;background:#4e5254;"></div>
<div style="left:352px;top:63.4px;width:98px;height:1.6px;background:#4a9cc0;"></div>
<div style="left:357px;top:55px;width:8px;height:8px;background:#3a88b4;border-radius:50%"></div>
<div class="u" style="left:359.2px;top:55.40px;font-size:6px;line-height:7.20px;color:#1b3a4a;font-weight:bold">c</div>
<div class="u" style="left:366.5px;top:55.22px;font-size:6.3px;line-height:7.56px;color:#bbbbbb;">HomePageFragment.java</div>
<div class="u" style="left:442px;top:55.40px;font-size:6px;line-height:7.20px;color:#6f6f6f;">×</div>
<div style="left:455.5px;top:55px;width:8px;height:8px;background:#3a88b4;border-radius:50%"></div>
<div class="u" style="left:457.7px;top:55.40px;font-size:6px;line-height:7.20px;color:#1b3a4a;font-weight:bold">c</div>
<div class="u" style="left:465px;top:55.22px;font-size:6.3px;line-height:7.56px;color:#bbbbbb;">SportFragment.java</div>
<div class="u" style="left:524px;top:55.40px;font-size:6px;line-height:7.20px;color:#6f6f6f;">×</div>
<div style="left:262.5px;top:65px;width:749.0px;height:14px;background:#3b3d3f;"></div>
<div style="left:296.5px;top:67px;width:80.0px;height:11px;background:#5a5c5e;"></div>
<div class="m" style="left:298.0px;top:67.80px;font-size:8px;line-height:9.60px;color:#c0c0c0;">HomePageFragment</div>
<div style="left:380.5px;top:67px;width:71.0px;height:11px;background:#4f4e3a;"></div>
<div class="m" style="left:382.0px;top:67.80px;font-size:8px;line-height:9.60px;color:#d1c98f;">onCreateView()</div>
<div style="left:262.5px;top:79px;width:33.5px;height:471.5px;background:#313335;"></div>
<div style="left:296px;top:79px;width:715.5px;height:471.5px;background:#2b2b2b;"></div>
<div style="left:778px;top:79px;width:1px;height:471.5px;background:#3a3a3a;"></div>
<div style="left:296px;top:322.34999999999997px;width:715.5px;height:10.1px;background:#323232;"></div>
<div style="left:0;top:79px;width:1011.5px;height:471.5px;overflow:hidden">
<div class="m" style="left:252px;width:22.5px;text-align:right;top:1.00px;font-size:7.3px;line-height:10px;color:#5f6265">1</div>
<div class="m" style="left:298.5px;top:0.50px;font-size:8px;line-height:11px;color:#a9b7c6"><k>package</k> com.example.matti.newsapp.Fragment<k>;</k></div>
<div class="m" style="left:252px;width:22.5px;text-align:right;top:11.10px;font-size:7.3px;line-height:10px;color:#5f6265">2</div>
<div class="m" style="left:298.5px;top:10.60px;font-size:8px;line-height:11px;color:#a9b7c6"></div>
<div class="m" style="left:252px;width:22.5px;text-align:right;top:21.20px;font-size:7.3px;line-height:10px;color:#5f6265">3</div>
<div class="m" style="left:298.5px;top:20.70px;font-size:8px;line-height:11px;color:#a9b7c6"></div>
<div class="m" style="left:252px;width:22.5px;text-align:right;top:31.30px;font-size:7.3px;line-height:10px;color:#5f6265">4</div>
<div class="m" style="left:298.5px;top:30.80px;font-size:8px;line-height:11px;color:#a9b7c6"><k>import</k> <span style="background:#3a3c3e;color:#8a8a8a">...</span></div>
<div class="m" style="left:252px;width:22.5px;text-align:right;top:41.40px;font-size:7.3px;line-height:10px;color:#5f6265">18</div>
<div class="m" style="left:298.5px;top:40.90px;font-size:8px;line-height:11px;color:#a9b7c6"></div>
<div class="m" style="left:252px;width:22.5px;text-align:right;top:51.50px;font-size:7.3px;line-height:10px;color:#5f6265">19</div>
<div class="m" style="left:298.5px;top:51.00px;font-size:8px;line-height:11px;color:#a9b7c6"></div>
<div class="m" style="left:252px;width:22.5px;text-align:right;top:61.60px;font-size:7.3px;line-height:10px;color:#5f6265">20</div>
<div class="m" style="left:298.5px;top:61.10px;font-size:8px;line-height:11px;color:#a9b7c6"><d>/**</d></div>
<div class="m" style="left:252px;width:22.5px;text-align:right;top:71.70px;font-size:7.3px;line-height:10px;color:#5f6265">21</div>
<div class="m" style="left:298.5px;top:71.20px;font-size:8px;line-height:11px;color:#a9b7c6"><d> * A simple {<span style="text-decoration:underline;font-weight:bold">@link</span> <span style="color:#8fa98a">Fragment</span>} subclass.</d></div>
<div class="m" style="left:252px;width:22.5px;text-align:right;top:81.80px;font-size:7.3px;line-height:10px;color:#5f6265">22</div>
<div class="m" style="left:298.5px;top:81.30px;font-size:8px;line-height:11px;color:#a9b7c6"><d> */</d></div>
<div class="m" style="left:252px;width:22.5px;text-align:right;top:91.90px;font-size:7.3px;line-height:10px;color:#5f6265">23</div>
<div class="m" style="left:298.5px;top:91.40px;font-size:8px;line-height:11px;color:#a9b7c6"><k>public class</k> HomePageFragment <k>extends</k> Fragment {</div>
<div class="m" style="left:252px;width:22.5px;text-align:right;top:102.00px;font-size:7.3px;line-height:10px;color:#5f6265">24</div>
<div class="m" style="left:298.5px;top:101.50px;font-size:8px;line-height:11px;color:#a9b7c6"></div>
<div class="m" style="left:252px;width:22.5px;text-align:right;top:112.10px;font-size:7.3px;line-height:10px;color:#5f6265">25</div>
<div class="m" style="left:298.5px;top:111.60px;font-size:8px;line-height:11px;color:#a9b7c6">    List&lt;Article&gt; <f>articles</f> = <k>new</k> ArrayList&lt;&gt;()<k>;</k></div>
<div class="m" style="left:252px;width:22.5px;text-align:right;top:122.20px;font-size:7.3px;line-height:10px;color:#5f6265">26</div>
<div class="m" style="left:298.5px;top:121.70px;font-size:8px;line-height:11px;color:#a9b7c6"></div>
<div class="m" style="left:252px;width:22.5px;text-align:right;top:132.30px;font-size:7.3px;line-height:10px;color:#5f6265">27</div>
<div class="m" style="left:298.5px;top:131.80px;font-size:8px;line-height:11px;color:#a9b7c6">    <k>public</k> <y>HomePageFragment</y>() {</div>
<div class="m" style="left:252px;width:22.5px;text-align:right;top:142.40px;font-size:7.3px;line-height:10px;color:#5f6265">28</div>
<div class="m" style="left:298.5px;top:141.90px;font-size:8px;line-height:11px;color:#a9b7c6">        <c>// Required empty public constructor</c></div>
<div class="m" style="left:252px;width:22.5px;text-align:right;top:152.50px;font-size:7.3px;line-height:10px;color:#5f6265">29</div>
<div class="m" style="left:298.5px;top:152.00px;font-size:8px;line-height:11px;color:#a9b7c6">    }</div>
<div class="m" style="left:252px;width:22.5px;text-align:right;top:162.60px;font-size:7.3px;line-height:10px;color:#5f6265">30</div>
<div class="m" style="left:298.5px;top:162.10px;font-size:8px;line-height:11px;color:#a9b7c6"></div>
<div class="m" style="left:252px;width:22.5px;text-align:right;top:172.70px;font-size:7.3px;line-height:10px;color:#5f6265">31</div>
<div class="m" style="left:298.5px;top:172.20px;font-size:8px;line-height:11px;color:#a9b7c6"></div>
<div class="m" style="left:252px;width:22.5px;text-align:right;top:182.80px;font-size:7.3px;line-height:10px;color:#5f6265">32</div>
<div class="m" style="left:298.5px;top:182.30px;font-size:8px;line-height:11px;color:#a9b7c6">    <an>@Override</an></div>
<div class="m" style="left:252px;width:22.5px;text-align:right;top:192.90px;font-size:7.3px;line-height:10px;color:#5f6265">33</div>
<div class="m" style="left:298.5px;top:192.40px;font-size:8px;line-height:11px;color:#a9b7c6">    <k>public</k> View <y>onCreateView</y>(LayoutInflater <span style="background:#4a4b36">inflater</span><k>,</k> ViewGroup container<k>,</k></div>
<div class="m" style="left:252px;width:22.5px;text-align:right;top:203.00px;font-size:7.3px;line-height:10px;color:#5f6265">34</div>
<div class="m" style="left:298.5px;top:202.50px;font-size:8px;line-height:11px;color:#a9b7c6">                             Bundle savedInstanceState) {</div>
<div class="m" style="left:252px;width:22.5px;text-align:right;top:213.10px;font-size:7.3px;line-height:10px;color:#5f6265">35</div>
<div class="m" style="left:298.5px;top:212.60px;font-size:8px;line-height:11px;color:#a9b7c6">        <c>// Inflate the layout for this fragment</c></div>
<div class="m" style="left:252px;width:22.5px;text-align:right;top:223.20px;font-size:7.3px;line-height:10px;color:#5f6265">36</div>
<div class="m" style="left:298.5px;top:222.70px;font-size:8px;line-height:11px;color:#a9b7c6">        View v = inflater.inflate(R.layout.<it>fragment_home_page</it><k>,</k> container<k>,</k> <hint>attachToRoot:</hint><k>false</k>)<k>;</k></div>
<div class="m" style="left:252px;width:22.5px;text-align:right;top:233.30px;font-size:7.3px;line-height:10px;color:#5f6265">37</div>
<div class="m" style="left:298.5px;top:232.80px;font-size:8px;line-height:11px;color:#a9b7c6"></div>
<div class="m" style="left:252px;width:22.5px;text-align:right;top:243.40px;font-size:7.3px;line-height:10px;color:#5f6265">38</div>
<div class="m" style="left:298.5px;top:242.90px;font-size:8px;line-height:11px;color:#a9b7c6">        <f>articles</f>.add(<k>new</k> Article(<span style="border-left:1px solid #ddd"></span>))<k>;</k></div>
<div class="m" style="left:252px;width:22.5px;text-align:right;top:253.50px;font-size:7.3px;line-height:10px;color:#5f6265">39</div>
<div class="m" style="left:298.5px;top:253.00px;font-size:8px;line-height:11px;color:#a9b7c6"></div>
<div class="m" style="left:252px;width:22.5px;text-align:right;top:263.60px;font-size:7.3px;line-height:10px;color:#5f6265">40</div>
<div class="m" style="left:298.5px;top:263.10px;font-size:8px;line-height:11px;color:#a9b7c6">        setUpRecyclerView(v)<k>;</k></div>
<div class="m" style="left:252px;width:22.5px;text-align:right;top:273.70px;font-size:7.3px;line-height:10px;color:#5f6265">41</div>
<div class="m" style="left:298.5px;top:273.20px;font-size:8px;line-height:11px;color:#a9b7c6"></div>
<div class="m" style="left:252px;width:22.5px;text-align:right;top:283.80px;font-size:7.3px;line-height:10px;color:#5f6265">42</div>
<div class="m" style="left:298.5px;top:283.30px;font-size:8px;line-height:11px;color:#a9b7c6">        <k>return</k> v<k>;</k></div>
<div class="m" style="left:252px;width:22.5px;text-align:right;top:293.90px;font-size:7.3px;line-height:10px;color:#5f6265">43</div>
<div class="m" style="left:298.5px;top:293.40px;font-size:8px;line-height:11px;color:#a9b7c6">    }</div>
<div class="m" style="left:252px;width:22.5px;text-align:right;top:304.00px;font-size:7.3px;line-height:10px;color:#5f6265">44</div>
<div class="m" style="left:298.5px;top:303.50px;font-size:8px;line-height:11px;color:#a9b7c6"></div>
<div class="m" style="left:252px;width:22.5px;text-align:right;top:314.10px;font-size:7.3px;line-height:10px;color:#5f6265">45</div>
<div class="m" style="left:298.5px;top:313.60px;font-size:8px;line-height:11px;color:#a9b7c6"></div>
<div class="m" style="left:252px;width:22.5px;text-align:right;top:324.20px;font-size:7.3px;line-height:10px;color:#5f6265">46</div>
<div class="m" style="left:298.5px;top:323.70px;font-size:8px;line-height:11px;color:#a9b7c6">    <d>/**</d></div>
<div class="m" style="left:252px;width:22.5px;text-align:right;top:334.30px;font-size:7.3px;line-height:10px;color:#5f6265">47</div>
<div class="m" style="left:298.5px;top:333.80px;font-size:8px;line-height:11px;color:#a9b7c6"><d>     * <span style="text-decoration:underline">imposta</span> il recyclerView</d></div>
<div class="m" style="left:252px;width:22.5px;text-align:right;top:344.40px;font-size:7.3px;line-height:10px;color:#5f6265">48</div>
<div class="m" style="left:298.5px;top:343.90px;font-size:8px;line-height:11px;color:#a9b7c6"><d>     */</d></div>
<div class="m" style="left:252px;width:22.5px;text-align:right;top:354.50px;font-size:7.3px;line-height:10px;color:#5f6265">49</div>
<div class="m" style="left:298.5px;top:354.00px;font-size:8px;line-height:11px;color:#a9b7c6">    <k>private void</k> <y>setUpRecyclerView</y>(View v) {</div>
<div class="m" style="left:252px;width:22.5px;text-align:right;top:364.60px;font-size:7.3px;line-height:10px;color:#5f6265">50</div>
<div class="m" style="left:298.5px;top:364.10px;font-size:8px;line-height:11px;color:#a9b7c6">        RecyclerView recyclerView = v.findViewById(R.id.<it>recyclerView</it>)<k>;</k></div>
<div class="m" style="left:252px;width:22.5px;text-align:right;top:374.70px;font-size:7.3px;line-height:10px;color:#5f6265">51</div>
<div class="m" style="left:298.5px;top:374.20px;font-size:8px;line-height:11px;color:#a9b7c6">        RecyclerViewAdapterHome adapter = <k>new</k> RecyclerViewAdapterHome(<f>articles</f><k>,</k> getActivity())<k>;</k></div>
<div class="m" style="left:252px;width:22.5px;text-align:right;top:384.80px;font-size:7.3px;line-height:10px;color:#5f6265">52</div>
<div class="m" style="left:298.5px;top:384.30px;font-size:8px;line-height:11px;color:#a9b7c6">        recyclerView.setLayoutManager(<k>new</k> LinearLayoutManager(getActivity()))<k>;</k></div>
<div class="m" style="left:252px;width:22.5px;text-align:right;top:394.90px;font-size:7.3px;line-height:10px;color:#5f6265">53</div>
<div class="m" style="left:298.5px;top:394.40px;font-size:8px;line-height:11px;color:#a9b7c6">        recyclerView.setHasFixedSize(<k>true</k>)<k>;</k></div>
<div class="m" style="left:252px;width:22.5px;text-align:right;top:405.00px;font-size:7.3px;line-height:10px;color:#5f6265">54</div>
<div class="m" style="left:298.5px;top:404.50px;font-size:8px;line-height:11px;color:#a9b7c6">        recyclerView.setAdapter(adapter)<k>;</k></div>
<div class="m" style="left:252px;width:22.5px;text-align:right;top:415.10px;font-size:7.3px;line-height:10px;color:#5f6265">55</div>
<div class="m" style="left:298.5px;top:414.60px;font-size:8px;line-height:11px;color:#a9b7c6">    }</div>
<div class="m" style="left:252px;width:22.5px;text-align:right;top:425.20px;font-size:7.3px;line-height:10px;color:#5f6265">56</div>
<div class="m" style="left:298.5px;top:424.70px;font-size:8px;line-height:11px;color:#a9b7c6"></div>
<div class="m" style="left:252px;width:22.5px;text-align:right;top:435.30px;font-size:7.3px;line-height:10px;color:#5f6265">57</div>
<div class="m" style="left:298.5px;top:434.80px;font-size:8px;line-height:11px;color:#a9b7c6">}</div>
<div class="m" style="left:252px;width:22.5px;text-align:right;top:445.40px;font-size:7.3px;line-height:10px;color:#5f6265">58</div>
<div class="m" style="left:298.5px;top:444.90px;font-size:8px;line-height:11px;color:#a9b7c6"></div>
</div>
<div style="left:292px;top:112.8px;width:5px;height:5px;background:transparent;border:1px solid #474a4d"></div>
<div style="left:292px;top:143.1px;width:5px;height:5px;background:transparent;border:1px solid #474a4d"></div>
<div style="left:292px;top:163.3px;width:5px;height:5px;background:transparent;border:1px solid #474a4d"></div>
<div style="left:292px;top:213.79999999999998px;width:5px;height:5px;background:transparent;border:1px solid #474a4d"></div>
<div style="left:292px;top:234.0px;width:5px;height:5px;background:transparent;border:1px solid #474a4d"></div>
<div style="left:292px;top:274.4px;width:5px;height:5px;background:transparent;border:1px solid #474a4d"></div>
<div style="left:292px;top:294.6px;width:5px;height:5px;background:transparent;border:1px solid #474a4d"></div>
<div style="left:292px;top:345.09999999999997px;width:5px;height:5px;background:transparent;border:1px solid #474a4d"></div>
<div style="left:292px;top:365.3px;width:5px;height:5px;background:transparent;border:1px solid #474a4d"></div>
<div style="left:292px;top:385.5px;width:5px;height:5px;background:transparent;border:1px solid #474a4d"></div>
<div style="left:292px;top:395.59999999999997px;width:5px;height:5px;background:transparent;border:1px solid #474a4d"></div>
<div style="left:292px;top:456.2px;width:5px;height:5px;background:transparent;border:1px solid #474a4d"></div>
<div style="left:277px;top:172.39999999999998px;width:7px;height:7px;background:#c49a3b;border-radius:1px"></div>
<div style="left:277.5px;top:274.4px;width:5px;height:5px;background:#9ec6e0;border-radius:50%"></div>
<div style="left:303px;top:323.4px;width:5px;height:6px;background:#e7c34b;border-radius:2.5px 2.5px 1px 1px"></div>
<div style="left:1006.5px;top:88px;width:4px;height:406px;background:#56585a;border-radius:1px"></div>
<div style="left:1004px;top:80.5px;width:6px;height:6px;background:#d6b33a;"></div>
<div style="left:1003.5px;top:264.5px;width:7px;height:1.3px;background:#c8a84a;"></div>
<div style="left:1010.5px;top:53px;width:12.5px;height:497.5px;background:#3c3e40;border-left:1px solid #2d2f30"></div>
<div style="left:1013px;top:58px;width:8px;height:8px;background:transparent;border:1.4px solid #4fb05a;border-radius:50%"></div>
<div style="left:1016px;top:60.5px;width:2px;height:3px;background:#4fb05a;"></div>
<div class="u" style="left:1012px;top:67px;font-size:5.7px;line-height:10px;color:#9a9a9a;transform-origin:0 0;transform:translateX(10px) rotate(90deg)">Gradle</div>
<div style="left:1013.5px;top:474px;width:7px;height:6px;background:transparent;border:1px solid #9a9a9a"></div>
<div class="u" style="left:1012px;top:480px;font-size:5.9px;line-height:10px;color:#9a9a9a;transform-origin:0 0;transform:translateX(10px) rotate(90deg)">Device File Explorer</div>
<svg style="position:absolute;left:955px;top:546px" width="32" height="22" viewBox="0 0 32 22"><path d="M9 2 C8 6 6.5 11 6.8 16 C7.2 19.5 10 17 11.5 12 C12.5 9 13 7 13.8 6 C14.2 10 14.5 15.5 17 17 C19 18 20.5 15.5 21.5 13.5 C23 13 25 13 28 13" fill="none" stroke="#c9ccd0" stroke-width="2.6" stroke-linecap="round" stroke-linejoin="round" opacity="0.85"/><circle cx="4.5" cy="9" r="3.5" fill="#8fb3c9" opacity="0.35"/></svg>
<div class="u" style="left:981.5px;top:549.54px;font-size:11.6px;line-height:13.92px;color:rgba(205,208,212,0.8);font-weight:bold;letter-spacing:-0.4px">Udemy</div>
<div class="m" style="left:980.5px;top:563.5px;font-size:8.2px;line-height:11px;color:#fff;font-weight:bold;text-shadow:0 0 1px #000,1px 1px 0 #000,-1px -1px 0 #000,1px -1px 0 #000,-1px 1px 0 #000">00:16:07</div>
<svg style="position:absolute;left:226px;top:329px" width="9" height="13" viewBox="0 0 9 13"><path d="M1 1 L1 11 L3.5 8.5 L5.5 12 L7 11.3 L5 7.8 L8 7.8 Z" fill="#fff" stroke="#000" stroke-width="0.8"/></svg>
</div>
</body></html>
